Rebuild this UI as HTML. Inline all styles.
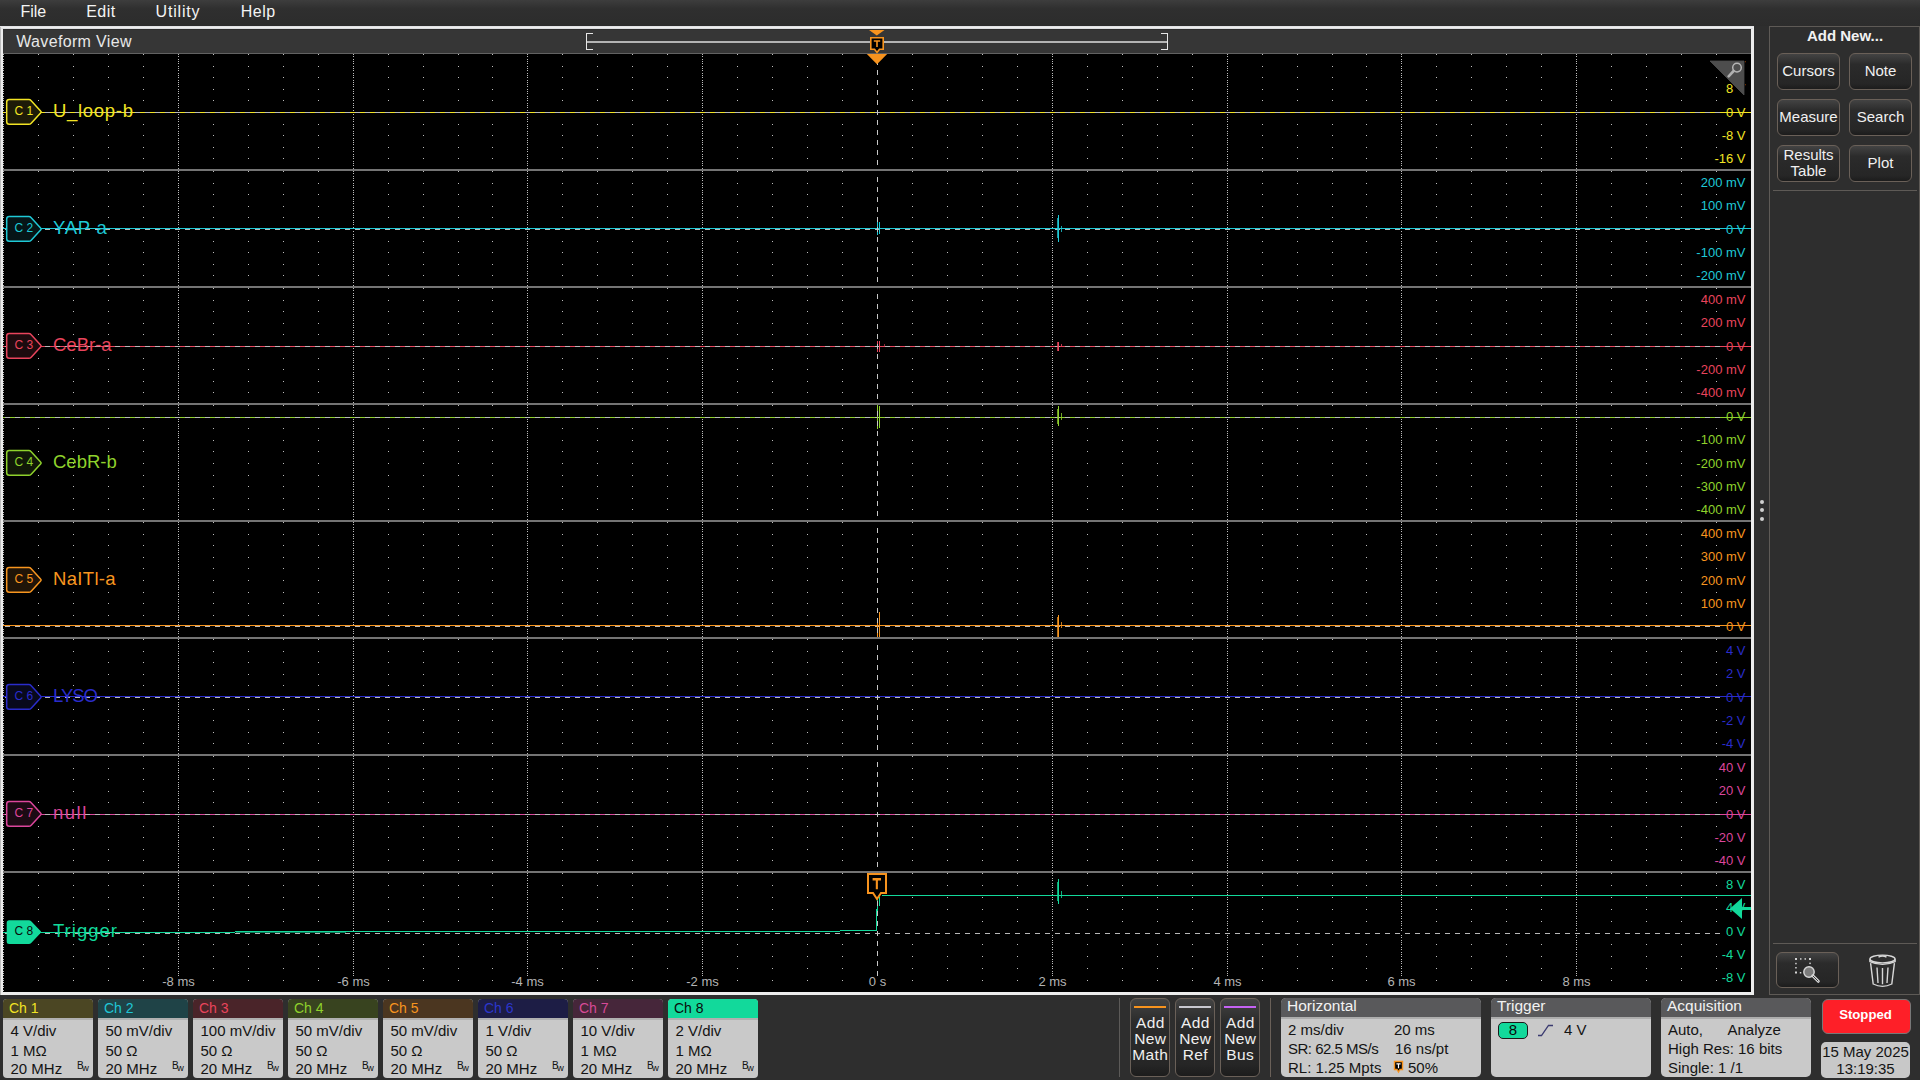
<!DOCTYPE html>
<html><head><meta charset="utf-8"><title>Waveform View</title>
<style>
html,body{margin:0;padding:0;}
body{width:1920px;height:1080px;overflow:hidden;position:relative;background:#2e2e2e;font-family:"Liberation Sans",sans-serif;}
.t{position:absolute;white-space:nowrap;line-height:1;}
.badge{position:absolute;top:999px;width:90px;height:79px;background:#c9c9c9;border-radius:4px;overflow:hidden;}
.badge .bh{position:absolute;left:0;top:0;width:90px;height:19px;border-bottom:2px solid #b0b0b0;}
.panel{position:absolute;top:998px;height:79px;background:#c9c9c9;border-radius:5px;overflow:hidden;}
.panel .ph{position:absolute;left:0;top:0;right:0;height:19px;background:#59595b;border-bottom:2px solid #adadad;}
.btn{position:absolute;box-sizing:border-box;border:1px solid #6a6058;border-radius:6px;background:linear-gradient(#434343,#2b2b2b 30%,#262626 85%,#1c1c1c);}
</style></head><body>
<div style="position:absolute;left:0;top:0;width:1920px;height:26px;background:linear-gradient(#3d3d3d,#2f2f2f 9px,#2c2c2c)"></div>
<div class="t" style="left:20.4px;top:4.36px;font-size:16px;color:#f4f4f4;font-weight:normal;letter-spacing:0px">File</div><div class="t" style="left:86.2px;top:4.36px;font-size:16px;color:#f4f4f4;font-weight:normal;letter-spacing:0.5px">Edit</div><div class="t" style="left:155.6px;top:4.36px;font-size:16px;color:#f4f4f4;font-weight:normal;letter-spacing:0.8px">Utility</div><div class="t" style="left:240.8px;top:4.36px;font-size:16px;color:#f4f4f4;font-weight:normal;letter-spacing:0.5px">Help</div>
<div style="position:absolute;left:0;top:26px;width:1754px;height:969px;background:#ededed"></div>
<div style="position:absolute;left:0;top:26px;width:1px;height:969px;background:#bcbcbc"></div>
<div style="position:absolute;left:3px;top:29px;width:1748px;height:963px;background:#000"></div>
<div style="position:absolute;left:3px;top:29px;width:1748px;height:24px;background:#363636"></div>
<div style="position:absolute;left:3px;top:29px;width:1748px;height:1px;background:#2c2c2c"></div>
<div style="position:absolute;left:0;top:26px;width:1754px;height:1px;background:#e2e3e6"></div>
<div style="position:absolute;left:1px;top:28px;width:1752px;height:1px;background:#dcdde0"></div>
<div style="position:absolute;left:3px;top:53px;width:1748px;height:1px;background:#626262"></div>
<div class="t" style="left:16.2px;top:33.86px;font-size:16px;color:#e8e8e8;font-weight:normal;letter-spacing:0.35px">Waveform View</div>
<svg style="position:absolute;left:0;top:0" width="1920" height="1080" shape-rendering="crispEdges">
<rect x="586" y="33" width="1" height="17" fill="#e6e6e6"/><rect x="586" y="33" width="7" height="1" fill="#e6e6e6"/><rect x="586" y="49" width="7" height="1" fill="#e6e6e6"/>
<rect x="1167" y="33" width="1" height="17" fill="#e6e6e6"/><rect x="1161" y="33" width="7" height="1" fill="#e6e6e6"/><rect x="1161" y="49" width="7" height="1" fill="#e6e6e6"/>
<rect x="587" y="41" width="580" height="2" fill="#b4b4b4"/>
<path d="M3 54h1v1h-1zM3 56h1v1h-1zM3 59h1v1h-1zM3 61h1v1h-1zM3 63h1v1h-1zM3 66h1v1h-1zM3 68h1v1h-1zM3 70h1v1h-1zM3 73h1v1h-1zM3 75h1v1h-1zM3 77h1v1h-1zM3 80h1v1h-1zM3 82h1v1h-1zM3 84h1v1h-1zM3 86h1v1h-1zM3 89h1v1h-1zM3 91h1v1h-1zM3 93h1v1h-1zM3 96h1v1h-1zM3 98h1v1h-1zM3 100h1v1h-1zM3 103h1v1h-1zM3 105h1v1h-1zM3 107h1v1h-1zM3 110h1v1h-1zM3 112h1v1h-1zM3 114h1v1h-1zM3 117h1v1h-1zM3 119h1v1h-1zM3 121h1v1h-1zM3 124h1v1h-1zM3 126h1v1h-1zM3 128h1v1h-1zM3 131h1v1h-1zM3 133h1v1h-1zM3 135h1v1h-1zM3 138h1v1h-1zM3 140h1v1h-1zM3 142h1v1h-1zM3 144h1v1h-1zM3 147h1v1h-1zM3 149h1v1h-1zM3 151h1v1h-1zM3 154h1v1h-1zM3 156h1v1h-1zM3 158h1v1h-1zM3 161h1v1h-1zM3 163h1v1h-1zM3 165h1v1h-1zM3 168h1v1h-1zM3 171h1v1h-1zM3 173h1v1h-1zM3 176h1v1h-1zM3 178h1v1h-1zM3 180h1v1h-1zM3 183h1v1h-1zM3 185h1v1h-1zM3 187h1v1h-1zM3 190h1v1h-1zM3 192h1v1h-1zM3 194h1v1h-1zM3 197h1v1h-1zM3 199h1v1h-1zM3 201h1v1h-1zM3 203h1v1h-1zM3 206h1v1h-1zM3 208h1v1h-1zM3 210h1v1h-1zM3 213h1v1h-1zM3 215h1v1h-1zM3 217h1v1h-1zM3 220h1v1h-1zM3 222h1v1h-1zM3 224h1v1h-1zM3 227h1v1h-1zM3 229h1v1h-1zM3 231h1v1h-1zM3 234h1v1h-1zM3 236h1v1h-1zM3 238h1v1h-1zM3 241h1v1h-1zM3 243h1v1h-1zM3 245h1v1h-1zM3 248h1v1h-1zM3 250h1v1h-1zM3 252h1v1h-1zM3 255h1v1h-1zM3 257h1v1h-1zM3 259h1v1h-1zM3 261h1v1h-1zM3 264h1v1h-1zM3 266h1v1h-1zM3 268h1v1h-1zM3 271h1v1h-1zM3 273h1v1h-1zM3 275h1v1h-1zM3 278h1v1h-1zM3 280h1v1h-1zM3 282h1v1h-1zM3 285h1v1h-1zM3 288h1v1h-1zM3 290h1v1h-1zM3 293h1v1h-1zM3 295h1v1h-1zM3 297h1v1h-1zM3 300h1v1h-1zM3 302h1v1h-1zM3 304h1v1h-1zM3 307h1v1h-1zM3 309h1v1h-1zM3 311h1v1h-1zM3 314h1v1h-1zM3 316h1v1h-1zM3 318h1v1h-1zM3 320h1v1h-1zM3 323h1v1h-1zM3 325h1v1h-1zM3 327h1v1h-1zM3 330h1v1h-1zM3 332h1v1h-1zM3 334h1v1h-1zM3 337h1v1h-1zM3 339h1v1h-1zM3 341h1v1h-1zM3 344h1v1h-1zM3 346h1v1h-1zM3 348h1v1h-1zM3 351h1v1h-1zM3 353h1v1h-1zM3 355h1v1h-1zM3 358h1v1h-1zM3 360h1v1h-1zM3 362h1v1h-1zM3 365h1v1h-1zM3 367h1v1h-1zM3 369h1v1h-1zM3 372h1v1h-1zM3 374h1v1h-1zM3 376h1v1h-1zM3 378h1v1h-1zM3 381h1v1h-1zM3 383h1v1h-1zM3 385h1v1h-1zM3 388h1v1h-1zM3 390h1v1h-1zM3 392h1v1h-1zM3 395h1v1h-1zM3 397h1v1h-1zM3 399h1v1h-1zM3 402h1v1h-1zM3 405h1v1h-1zM3 407h1v1h-1zM3 410h1v1h-1zM3 412h1v1h-1zM3 414h1v1h-1zM3 417h1v1h-1zM3 419h1v1h-1zM3 421h1v1h-1zM3 424h1v1h-1zM3 426h1v1h-1zM3 428h1v1h-1zM3 431h1v1h-1zM3 433h1v1h-1zM3 435h1v1h-1zM3 437h1v1h-1zM3 440h1v1h-1zM3 442h1v1h-1zM3 444h1v1h-1zM3 447h1v1h-1zM3 449h1v1h-1zM3 451h1v1h-1zM3 454h1v1h-1zM3 456h1v1h-1zM3 458h1v1h-1zM3 461h1v1h-1zM3 463h1v1h-1zM3 465h1v1h-1zM3 468h1v1h-1zM3 470h1v1h-1zM3 472h1v1h-1zM3 475h1v1h-1zM3 477h1v1h-1zM3 479h1v1h-1zM3 482h1v1h-1zM3 484h1v1h-1zM3 486h1v1h-1zM3 489h1v1h-1zM3 491h1v1h-1zM3 493h1v1h-1zM3 495h1v1h-1zM3 498h1v1h-1zM3 500h1v1h-1zM3 502h1v1h-1zM3 505h1v1h-1zM3 507h1v1h-1zM3 509h1v1h-1zM3 512h1v1h-1zM3 514h1v1h-1zM3 516h1v1h-1zM3 519h1v1h-1zM3 522h1v1h-1zM3 524h1v1h-1zM3 527h1v1h-1zM3 529h1v1h-1zM3 531h1v1h-1zM3 534h1v1h-1zM3 536h1v1h-1zM3 538h1v1h-1zM3 541h1v1h-1zM3 543h1v1h-1zM3 545h1v1h-1zM3 548h1v1h-1zM3 550h1v1h-1zM3 552h1v1h-1zM3 554h1v1h-1zM3 557h1v1h-1zM3 559h1v1h-1zM3 561h1v1h-1zM3 564h1v1h-1zM3 566h1v1h-1zM3 568h1v1h-1zM3 571h1v1h-1zM3 573h1v1h-1zM3 575h1v1h-1zM3 578h1v1h-1zM3 580h1v1h-1zM3 582h1v1h-1zM3 585h1v1h-1zM3 587h1v1h-1zM3 589h1v1h-1zM3 592h1v1h-1zM3 594h1v1h-1zM3 596h1v1h-1zM3 599h1v1h-1zM3 601h1v1h-1zM3 603h1v1h-1zM3 606h1v1h-1zM3 608h1v1h-1zM3 610h1v1h-1zM3 612h1v1h-1zM3 615h1v1h-1zM3 617h1v1h-1zM3 619h1v1h-1zM3 622h1v1h-1zM3 624h1v1h-1zM3 626h1v1h-1zM3 629h1v1h-1zM3 631h1v1h-1zM3 633h1v1h-1zM3 636h1v1h-1zM3 639h1v1h-1zM3 641h1v1h-1zM3 644h1v1h-1zM3 646h1v1h-1zM3 648h1v1h-1zM3 651h1v1h-1zM3 653h1v1h-1zM3 655h1v1h-1zM3 658h1v1h-1zM3 660h1v1h-1zM3 662h1v1h-1zM3 665h1v1h-1zM3 667h1v1h-1zM3 669h1v1h-1zM3 671h1v1h-1zM3 674h1v1h-1zM3 676h1v1h-1zM3 678h1v1h-1zM3 681h1v1h-1zM3 683h1v1h-1zM3 685h1v1h-1zM3 688h1v1h-1zM3 690h1v1h-1zM3 692h1v1h-1zM3 695h1v1h-1zM3 697h1v1h-1zM3 699h1v1h-1zM3 702h1v1h-1zM3 704h1v1h-1zM3 706h1v1h-1zM3 709h1v1h-1zM3 711h1v1h-1zM3 713h1v1h-1zM3 716h1v1h-1zM3 718h1v1h-1zM3 720h1v1h-1zM3 723h1v1h-1zM3 725h1v1h-1zM3 727h1v1h-1zM3 729h1v1h-1zM3 732h1v1h-1zM3 734h1v1h-1zM3 736h1v1h-1zM3 739h1v1h-1zM3 741h1v1h-1zM3 743h1v1h-1zM3 746h1v1h-1zM3 748h1v1h-1zM3 750h1v1h-1zM3 753h1v1h-1zM3 756h1v1h-1zM3 758h1v1h-1zM3 761h1v1h-1zM3 763h1v1h-1zM3 765h1v1h-1zM3 768h1v1h-1zM3 770h1v1h-1zM3 772h1v1h-1zM3 775h1v1h-1zM3 777h1v1h-1zM3 779h1v1h-1zM3 782h1v1h-1zM3 784h1v1h-1zM3 786h1v1h-1zM3 788h1v1h-1zM3 791h1v1h-1zM3 793h1v1h-1zM3 795h1v1h-1zM3 798h1v1h-1zM3 800h1v1h-1zM3 802h1v1h-1zM3 805h1v1h-1zM3 807h1v1h-1zM3 809h1v1h-1zM3 812h1v1h-1zM3 814h1v1h-1zM3 816h1v1h-1zM3 819h1v1h-1zM3 821h1v1h-1zM3 823h1v1h-1zM3 826h1v1h-1zM3 828h1v1h-1zM3 830h1v1h-1zM3 833h1v1h-1zM3 835h1v1h-1zM3 837h1v1h-1zM3 840h1v1h-1zM3 842h1v1h-1zM3 844h1v1h-1zM3 846h1v1h-1zM3 849h1v1h-1zM3 851h1v1h-1zM3 853h1v1h-1zM3 856h1v1h-1zM3 858h1v1h-1zM3 860h1v1h-1zM3 863h1v1h-1zM3 865h1v1h-1zM3 867h1v1h-1zM3 870h1v1h-1zM3 873h1v1h-1zM3 875h1v1h-1zM3 878h1v1h-1zM3 880h1v1h-1zM3 883h1v1h-1zM3 885h1v1h-1zM3 887h1v1h-1zM3 890h1v1h-1zM3 892h1v1h-1zM3 894h1v1h-1zM3 897h1v1h-1zM3 899h1v1h-1zM3 902h1v1h-1zM3 904h1v1h-1zM3 906h1v1h-1zM3 909h1v1h-1zM3 911h1v1h-1zM3 913h1v1h-1zM3 916h1v1h-1zM3 918h1v1h-1zM3 921h1v1h-1zM3 923h1v1h-1zM3 925h1v1h-1zM3 928h1v1h-1zM3 930h1v1h-1zM3 933h1v1h-1zM3 935h1v1h-1zM3 937h1v1h-1zM3 940h1v1h-1zM3 942h1v1h-1zM3 944h1v1h-1zM3 947h1v1h-1zM3 949h1v1h-1zM3 952h1v1h-1zM3 954h1v1h-1zM3 956h1v1h-1zM3 959h1v1h-1zM3 961h1v1h-1zM3 963h1v1h-1zM3 966h1v1h-1zM3 968h1v1h-1zM3 971h1v1h-1zM3 973h1v1h-1zM3 975h1v1h-1zM3 978h1v1h-1zM3 980h1v1h-1zM3 982h1v1h-1zM3 985h1v1h-1zM3 987h1v1h-1zM3 990h1v1h-1zM38 54h1v1h-1zM38 66h1v1h-1zM38 77h1v1h-1zM38 89h1v1h-1zM38 100h1v1h-1zM38 112h1v1h-1zM38 124h1v1h-1zM38 135h1v1h-1zM38 147h1v1h-1zM38 158h1v1h-1zM38 171h1v1h-1zM38 183h1v1h-1zM38 194h1v1h-1zM38 206h1v1h-1zM38 217h1v1h-1zM38 229h1v1h-1zM38 241h1v1h-1zM38 252h1v1h-1zM38 264h1v1h-1zM38 275h1v1h-1zM38 288h1v1h-1zM38 300h1v1h-1zM38 311h1v1h-1zM38 323h1v1h-1zM38 334h1v1h-1zM38 346h1v1h-1zM38 358h1v1h-1zM38 369h1v1h-1zM38 381h1v1h-1zM38 392h1v1h-1zM38 405h1v1h-1zM38 417h1v1h-1zM38 428h1v1h-1zM38 440h1v1h-1zM38 451h1v1h-1zM38 463h1v1h-1zM38 475h1v1h-1zM38 486h1v1h-1zM38 498h1v1h-1zM38 509h1v1h-1zM38 522h1v1h-1zM38 534h1v1h-1zM38 545h1v1h-1zM38 557h1v1h-1zM38 568h1v1h-1zM38 580h1v1h-1zM38 592h1v1h-1zM38 603h1v1h-1zM38 615h1v1h-1zM38 626h1v1h-1zM38 639h1v1h-1zM38 651h1v1h-1zM38 662h1v1h-1zM38 674h1v1h-1zM38 685h1v1h-1zM38 697h1v1h-1zM38 709h1v1h-1zM38 720h1v1h-1zM38 732h1v1h-1zM38 743h1v1h-1zM38 756h1v1h-1zM38 768h1v1h-1zM38 779h1v1h-1zM38 791h1v1h-1zM38 802h1v1h-1zM38 814h1v1h-1zM38 826h1v1h-1zM38 837h1v1h-1zM38 849h1v1h-1zM38 860h1v1h-1zM38 873h1v1h-1zM38 885h1v1h-1zM38 897h1v1h-1zM38 909h1v1h-1zM38 921h1v1h-1zM38 933h1v1h-1zM38 944h1v1h-1zM38 956h1v1h-1zM38 968h1v1h-1zM38 980h1v1h-1zM73 54h1v1h-1zM73 66h1v1h-1zM73 77h1v1h-1zM73 89h1v1h-1zM73 100h1v1h-1zM73 112h1v1h-1zM73 124h1v1h-1zM73 135h1v1h-1zM73 147h1v1h-1zM73 158h1v1h-1zM73 171h1v1h-1zM73 183h1v1h-1zM73 194h1v1h-1zM73 206h1v1h-1zM73 217h1v1h-1zM73 229h1v1h-1zM73 241h1v1h-1zM73 252h1v1h-1zM73 264h1v1h-1zM73 275h1v1h-1zM73 288h1v1h-1zM73 300h1v1h-1zM73 311h1v1h-1zM73 323h1v1h-1zM73 334h1v1h-1zM73 346h1v1h-1zM73 358h1v1h-1zM73 369h1v1h-1zM73 381h1v1h-1zM73 392h1v1h-1zM73 405h1v1h-1zM73 417h1v1h-1zM73 428h1v1h-1zM73 440h1v1h-1zM73 451h1v1h-1zM73 463h1v1h-1zM73 475h1v1h-1zM73 486h1v1h-1zM73 498h1v1h-1zM73 509h1v1h-1zM73 522h1v1h-1zM73 534h1v1h-1zM73 545h1v1h-1zM73 557h1v1h-1zM73 568h1v1h-1zM73 580h1v1h-1zM73 592h1v1h-1zM73 603h1v1h-1zM73 615h1v1h-1zM73 626h1v1h-1zM73 639h1v1h-1zM73 651h1v1h-1zM73 662h1v1h-1zM73 674h1v1h-1zM73 685h1v1h-1zM73 697h1v1h-1zM73 709h1v1h-1zM73 720h1v1h-1zM73 732h1v1h-1zM73 743h1v1h-1zM73 756h1v1h-1zM73 768h1v1h-1zM73 779h1v1h-1zM73 791h1v1h-1zM73 802h1v1h-1zM73 814h1v1h-1zM73 826h1v1h-1zM73 837h1v1h-1zM73 849h1v1h-1zM73 860h1v1h-1zM73 873h1v1h-1zM73 885h1v1h-1zM73 897h1v1h-1zM73 909h1v1h-1zM73 921h1v1h-1zM73 933h1v1h-1zM73 944h1v1h-1zM73 956h1v1h-1zM73 968h1v1h-1zM73 980h1v1h-1zM108 54h1v1h-1zM108 66h1v1h-1zM108 77h1v1h-1zM108 89h1v1h-1zM108 100h1v1h-1zM108 112h1v1h-1zM108 124h1v1h-1zM108 135h1v1h-1zM108 147h1v1h-1zM108 158h1v1h-1zM108 171h1v1h-1zM108 183h1v1h-1zM108 194h1v1h-1zM108 206h1v1h-1zM108 217h1v1h-1zM108 229h1v1h-1zM108 241h1v1h-1zM108 252h1v1h-1zM108 264h1v1h-1zM108 275h1v1h-1zM108 288h1v1h-1zM108 300h1v1h-1zM108 311h1v1h-1zM108 323h1v1h-1zM108 334h1v1h-1zM108 346h1v1h-1zM108 358h1v1h-1zM108 369h1v1h-1zM108 381h1v1h-1zM108 392h1v1h-1zM108 405h1v1h-1zM108 417h1v1h-1zM108 428h1v1h-1zM108 440h1v1h-1zM108 451h1v1h-1zM108 463h1v1h-1zM108 475h1v1h-1zM108 486h1v1h-1zM108 498h1v1h-1zM108 509h1v1h-1zM108 522h1v1h-1zM108 534h1v1h-1zM108 545h1v1h-1zM108 557h1v1h-1zM108 568h1v1h-1zM108 580h1v1h-1zM108 592h1v1h-1zM108 603h1v1h-1zM108 615h1v1h-1zM108 626h1v1h-1zM108 639h1v1h-1zM108 651h1v1h-1zM108 662h1v1h-1zM108 674h1v1h-1zM108 685h1v1h-1zM108 697h1v1h-1zM108 709h1v1h-1zM108 720h1v1h-1zM108 732h1v1h-1zM108 743h1v1h-1zM108 756h1v1h-1zM108 768h1v1h-1zM108 779h1v1h-1zM108 791h1v1h-1zM108 802h1v1h-1zM108 814h1v1h-1zM108 826h1v1h-1zM108 837h1v1h-1zM108 849h1v1h-1zM108 860h1v1h-1zM108 873h1v1h-1zM108 885h1v1h-1zM108 897h1v1h-1zM108 909h1v1h-1zM108 921h1v1h-1zM108 933h1v1h-1zM108 944h1v1h-1zM108 956h1v1h-1zM108 968h1v1h-1zM108 980h1v1h-1zM143 54h1v1h-1zM143 66h1v1h-1zM143 77h1v1h-1zM143 89h1v1h-1zM143 100h1v1h-1zM143 112h1v1h-1zM143 124h1v1h-1zM143 135h1v1h-1zM143 147h1v1h-1zM143 158h1v1h-1zM143 171h1v1h-1zM143 183h1v1h-1zM143 194h1v1h-1zM143 206h1v1h-1zM143 217h1v1h-1zM143 229h1v1h-1zM143 241h1v1h-1zM143 252h1v1h-1zM143 264h1v1h-1zM143 275h1v1h-1zM143 288h1v1h-1zM143 300h1v1h-1zM143 311h1v1h-1zM143 323h1v1h-1zM143 334h1v1h-1zM143 346h1v1h-1zM143 358h1v1h-1zM143 369h1v1h-1zM143 381h1v1h-1zM143 392h1v1h-1zM143 405h1v1h-1zM143 417h1v1h-1zM143 428h1v1h-1zM143 440h1v1h-1zM143 451h1v1h-1zM143 463h1v1h-1zM143 475h1v1h-1zM143 486h1v1h-1zM143 498h1v1h-1zM143 509h1v1h-1zM143 522h1v1h-1zM143 534h1v1h-1zM143 545h1v1h-1zM143 557h1v1h-1zM143 568h1v1h-1zM143 580h1v1h-1zM143 592h1v1h-1zM143 603h1v1h-1zM143 615h1v1h-1zM143 626h1v1h-1zM143 639h1v1h-1zM143 651h1v1h-1zM143 662h1v1h-1zM143 674h1v1h-1zM143 685h1v1h-1zM143 697h1v1h-1zM143 709h1v1h-1zM143 720h1v1h-1zM143 732h1v1h-1zM143 743h1v1h-1zM143 756h1v1h-1zM143 768h1v1h-1zM143 779h1v1h-1zM143 791h1v1h-1zM143 802h1v1h-1zM143 814h1v1h-1zM143 826h1v1h-1zM143 837h1v1h-1zM143 849h1v1h-1zM143 860h1v1h-1zM143 873h1v1h-1zM143 885h1v1h-1zM143 897h1v1h-1zM143 909h1v1h-1zM143 921h1v1h-1zM143 933h1v1h-1zM143 944h1v1h-1zM143 956h1v1h-1zM143 968h1v1h-1zM143 980h1v1h-1zM178 54h1v1h-1zM178 56h1v1h-1zM178 59h1v1h-1zM178 61h1v1h-1zM178 63h1v1h-1zM178 66h1v1h-1zM178 68h1v1h-1zM178 70h1v1h-1zM178 73h1v1h-1zM178 75h1v1h-1zM178 77h1v1h-1zM178 80h1v1h-1zM178 82h1v1h-1zM178 84h1v1h-1zM178 86h1v1h-1zM178 89h1v1h-1zM178 91h1v1h-1zM178 93h1v1h-1zM178 96h1v1h-1zM178 98h1v1h-1zM178 100h1v1h-1zM178 103h1v1h-1zM178 105h1v1h-1zM178 107h1v1h-1zM178 110h1v1h-1zM178 112h1v1h-1zM178 114h1v1h-1zM178 117h1v1h-1zM178 119h1v1h-1zM178 121h1v1h-1zM178 124h1v1h-1zM178 126h1v1h-1zM178 128h1v1h-1zM178 131h1v1h-1zM178 133h1v1h-1zM178 135h1v1h-1zM178 138h1v1h-1zM178 140h1v1h-1zM178 142h1v1h-1zM178 144h1v1h-1zM178 147h1v1h-1zM178 149h1v1h-1zM178 151h1v1h-1zM178 154h1v1h-1zM178 156h1v1h-1zM178 158h1v1h-1zM178 161h1v1h-1zM178 163h1v1h-1zM178 165h1v1h-1zM178 168h1v1h-1zM178 171h1v1h-1zM178 173h1v1h-1zM178 176h1v1h-1zM178 178h1v1h-1zM178 180h1v1h-1zM178 183h1v1h-1zM178 185h1v1h-1zM178 187h1v1h-1zM178 190h1v1h-1zM178 192h1v1h-1zM178 194h1v1h-1zM178 197h1v1h-1zM178 199h1v1h-1zM178 201h1v1h-1zM178 203h1v1h-1zM178 206h1v1h-1zM178 208h1v1h-1zM178 210h1v1h-1zM178 213h1v1h-1zM178 215h1v1h-1zM178 217h1v1h-1zM178 220h1v1h-1zM178 222h1v1h-1zM178 224h1v1h-1zM178 227h1v1h-1zM178 229h1v1h-1zM178 231h1v1h-1zM178 234h1v1h-1zM178 236h1v1h-1zM178 238h1v1h-1zM178 241h1v1h-1zM178 243h1v1h-1zM178 245h1v1h-1zM178 248h1v1h-1zM178 250h1v1h-1zM178 252h1v1h-1zM178 255h1v1h-1zM178 257h1v1h-1zM178 259h1v1h-1zM178 261h1v1h-1zM178 264h1v1h-1zM178 266h1v1h-1zM178 268h1v1h-1zM178 271h1v1h-1zM178 273h1v1h-1zM178 275h1v1h-1zM178 278h1v1h-1zM178 280h1v1h-1zM178 282h1v1h-1zM178 285h1v1h-1zM178 288h1v1h-1zM178 290h1v1h-1zM178 293h1v1h-1zM178 295h1v1h-1zM178 297h1v1h-1zM178 300h1v1h-1zM178 302h1v1h-1zM178 304h1v1h-1zM178 307h1v1h-1zM178 309h1v1h-1zM178 311h1v1h-1zM178 314h1v1h-1zM178 316h1v1h-1zM178 318h1v1h-1zM178 320h1v1h-1zM178 323h1v1h-1zM178 325h1v1h-1zM178 327h1v1h-1zM178 330h1v1h-1zM178 332h1v1h-1zM178 334h1v1h-1zM178 337h1v1h-1zM178 339h1v1h-1zM178 341h1v1h-1zM178 344h1v1h-1zM178 346h1v1h-1zM178 348h1v1h-1zM178 351h1v1h-1zM178 353h1v1h-1zM178 355h1v1h-1zM178 358h1v1h-1zM178 360h1v1h-1zM178 362h1v1h-1zM178 365h1v1h-1zM178 367h1v1h-1zM178 369h1v1h-1zM178 372h1v1h-1zM178 374h1v1h-1zM178 376h1v1h-1zM178 378h1v1h-1zM178 381h1v1h-1zM178 383h1v1h-1zM178 385h1v1h-1zM178 388h1v1h-1zM178 390h1v1h-1zM178 392h1v1h-1zM178 395h1v1h-1zM178 397h1v1h-1zM178 399h1v1h-1zM178 402h1v1h-1zM178 405h1v1h-1zM178 407h1v1h-1zM178 410h1v1h-1zM178 412h1v1h-1zM178 414h1v1h-1zM178 417h1v1h-1zM178 419h1v1h-1zM178 421h1v1h-1zM178 424h1v1h-1zM178 426h1v1h-1zM178 428h1v1h-1zM178 431h1v1h-1zM178 433h1v1h-1zM178 435h1v1h-1zM178 437h1v1h-1zM178 440h1v1h-1zM178 442h1v1h-1zM178 444h1v1h-1zM178 447h1v1h-1zM178 449h1v1h-1zM178 451h1v1h-1zM178 454h1v1h-1zM178 456h1v1h-1zM178 458h1v1h-1zM178 461h1v1h-1zM178 463h1v1h-1zM178 465h1v1h-1zM178 468h1v1h-1zM178 470h1v1h-1zM178 472h1v1h-1zM178 475h1v1h-1zM178 477h1v1h-1zM178 479h1v1h-1zM178 482h1v1h-1zM178 484h1v1h-1zM178 486h1v1h-1zM178 489h1v1h-1zM178 491h1v1h-1zM178 493h1v1h-1zM178 495h1v1h-1zM178 498h1v1h-1zM178 500h1v1h-1zM178 502h1v1h-1zM178 505h1v1h-1zM178 507h1v1h-1zM178 509h1v1h-1zM178 512h1v1h-1zM178 514h1v1h-1zM178 516h1v1h-1zM178 519h1v1h-1zM178 522h1v1h-1zM178 524h1v1h-1zM178 527h1v1h-1zM178 529h1v1h-1zM178 531h1v1h-1zM178 534h1v1h-1zM178 536h1v1h-1zM178 538h1v1h-1zM178 541h1v1h-1zM178 543h1v1h-1zM178 545h1v1h-1zM178 548h1v1h-1zM178 550h1v1h-1zM178 552h1v1h-1zM178 554h1v1h-1zM178 557h1v1h-1zM178 559h1v1h-1zM178 561h1v1h-1zM178 564h1v1h-1zM178 566h1v1h-1zM178 568h1v1h-1zM178 571h1v1h-1zM178 573h1v1h-1zM178 575h1v1h-1zM178 578h1v1h-1zM178 580h1v1h-1zM178 582h1v1h-1zM178 585h1v1h-1zM178 587h1v1h-1zM178 589h1v1h-1zM178 592h1v1h-1zM178 594h1v1h-1zM178 596h1v1h-1zM178 599h1v1h-1zM178 601h1v1h-1zM178 603h1v1h-1zM178 606h1v1h-1zM178 608h1v1h-1zM178 610h1v1h-1zM178 612h1v1h-1zM178 615h1v1h-1zM178 617h1v1h-1zM178 619h1v1h-1zM178 622h1v1h-1zM178 624h1v1h-1zM178 626h1v1h-1zM178 629h1v1h-1zM178 631h1v1h-1zM178 633h1v1h-1zM178 636h1v1h-1zM178 639h1v1h-1zM178 641h1v1h-1zM178 644h1v1h-1zM178 646h1v1h-1zM178 648h1v1h-1zM178 651h1v1h-1zM178 653h1v1h-1zM178 655h1v1h-1zM178 658h1v1h-1zM178 660h1v1h-1zM178 662h1v1h-1zM178 665h1v1h-1zM178 667h1v1h-1zM178 669h1v1h-1zM178 671h1v1h-1zM178 674h1v1h-1zM178 676h1v1h-1zM178 678h1v1h-1zM178 681h1v1h-1zM178 683h1v1h-1zM178 685h1v1h-1zM178 688h1v1h-1zM178 690h1v1h-1zM178 692h1v1h-1zM178 695h1v1h-1zM178 697h1v1h-1zM178 699h1v1h-1zM178 702h1v1h-1zM178 704h1v1h-1zM178 706h1v1h-1zM178 709h1v1h-1zM178 711h1v1h-1zM178 713h1v1h-1zM178 716h1v1h-1zM178 718h1v1h-1zM178 720h1v1h-1zM178 723h1v1h-1zM178 725h1v1h-1zM178 727h1v1h-1zM178 729h1v1h-1zM178 732h1v1h-1zM178 734h1v1h-1zM178 736h1v1h-1zM178 739h1v1h-1zM178 741h1v1h-1zM178 743h1v1h-1zM178 746h1v1h-1zM178 748h1v1h-1zM178 750h1v1h-1zM178 753h1v1h-1zM178 756h1v1h-1zM178 758h1v1h-1zM178 761h1v1h-1zM178 763h1v1h-1zM178 765h1v1h-1zM178 768h1v1h-1zM178 770h1v1h-1zM178 772h1v1h-1zM178 775h1v1h-1zM178 777h1v1h-1zM178 779h1v1h-1zM178 782h1v1h-1zM178 784h1v1h-1zM178 786h1v1h-1zM178 788h1v1h-1zM178 791h1v1h-1zM178 793h1v1h-1zM178 795h1v1h-1zM178 798h1v1h-1zM178 800h1v1h-1zM178 802h1v1h-1zM178 805h1v1h-1zM178 807h1v1h-1zM178 809h1v1h-1zM178 812h1v1h-1zM178 814h1v1h-1zM178 816h1v1h-1zM178 819h1v1h-1zM178 821h1v1h-1zM178 823h1v1h-1zM178 826h1v1h-1zM178 828h1v1h-1zM178 830h1v1h-1zM178 833h1v1h-1zM178 835h1v1h-1zM178 837h1v1h-1zM178 840h1v1h-1zM178 842h1v1h-1zM178 844h1v1h-1zM178 846h1v1h-1zM178 849h1v1h-1zM178 851h1v1h-1zM178 853h1v1h-1zM178 856h1v1h-1zM178 858h1v1h-1zM178 860h1v1h-1zM178 863h1v1h-1zM178 865h1v1h-1zM178 867h1v1h-1zM178 870h1v1h-1zM178 873h1v1h-1zM178 875h1v1h-1zM178 878h1v1h-1zM178 880h1v1h-1zM178 883h1v1h-1zM178 885h1v1h-1zM178 887h1v1h-1zM178 890h1v1h-1zM178 892h1v1h-1zM178 894h1v1h-1zM178 897h1v1h-1zM178 899h1v1h-1zM178 902h1v1h-1zM178 904h1v1h-1zM178 906h1v1h-1zM178 909h1v1h-1zM178 911h1v1h-1zM178 913h1v1h-1zM178 916h1v1h-1zM178 918h1v1h-1zM178 921h1v1h-1zM178 923h1v1h-1zM178 925h1v1h-1zM178 928h1v1h-1zM178 930h1v1h-1zM178 933h1v1h-1zM178 935h1v1h-1zM178 937h1v1h-1zM178 940h1v1h-1zM178 942h1v1h-1zM178 944h1v1h-1zM178 947h1v1h-1zM178 949h1v1h-1zM178 952h1v1h-1zM178 954h1v1h-1zM178 956h1v1h-1zM178 959h1v1h-1zM178 961h1v1h-1zM178 963h1v1h-1zM178 966h1v1h-1zM178 968h1v1h-1zM178 971h1v1h-1zM178 973h1v1h-1zM178 975h1v1h-1zM178 978h1v1h-1zM178 980h1v1h-1zM178 982h1v1h-1zM178 985h1v1h-1zM178 987h1v1h-1zM178 990h1v1h-1zM213 54h1v1h-1zM213 66h1v1h-1zM213 77h1v1h-1zM213 89h1v1h-1zM213 100h1v1h-1zM213 112h1v1h-1zM213 124h1v1h-1zM213 135h1v1h-1zM213 147h1v1h-1zM213 158h1v1h-1zM213 171h1v1h-1zM213 183h1v1h-1zM213 194h1v1h-1zM213 206h1v1h-1zM213 217h1v1h-1zM213 229h1v1h-1zM213 241h1v1h-1zM213 252h1v1h-1zM213 264h1v1h-1zM213 275h1v1h-1zM213 288h1v1h-1zM213 300h1v1h-1zM213 311h1v1h-1zM213 323h1v1h-1zM213 334h1v1h-1zM213 346h1v1h-1zM213 358h1v1h-1zM213 369h1v1h-1zM213 381h1v1h-1zM213 392h1v1h-1zM213 405h1v1h-1zM213 417h1v1h-1zM213 428h1v1h-1zM213 440h1v1h-1zM213 451h1v1h-1zM213 463h1v1h-1zM213 475h1v1h-1zM213 486h1v1h-1zM213 498h1v1h-1zM213 509h1v1h-1zM213 522h1v1h-1zM213 534h1v1h-1zM213 545h1v1h-1zM213 557h1v1h-1zM213 568h1v1h-1zM213 580h1v1h-1zM213 592h1v1h-1zM213 603h1v1h-1zM213 615h1v1h-1zM213 626h1v1h-1zM213 639h1v1h-1zM213 651h1v1h-1zM213 662h1v1h-1zM213 674h1v1h-1zM213 685h1v1h-1zM213 697h1v1h-1zM213 709h1v1h-1zM213 720h1v1h-1zM213 732h1v1h-1zM213 743h1v1h-1zM213 756h1v1h-1zM213 768h1v1h-1zM213 779h1v1h-1zM213 791h1v1h-1zM213 802h1v1h-1zM213 814h1v1h-1zM213 826h1v1h-1zM213 837h1v1h-1zM213 849h1v1h-1zM213 860h1v1h-1zM213 873h1v1h-1zM213 885h1v1h-1zM213 897h1v1h-1zM213 909h1v1h-1zM213 921h1v1h-1zM213 933h1v1h-1zM213 944h1v1h-1zM213 956h1v1h-1zM213 968h1v1h-1zM213 980h1v1h-1zM248 54h1v1h-1zM248 66h1v1h-1zM248 77h1v1h-1zM248 89h1v1h-1zM248 100h1v1h-1zM248 112h1v1h-1zM248 124h1v1h-1zM248 135h1v1h-1zM248 147h1v1h-1zM248 158h1v1h-1zM248 171h1v1h-1zM248 183h1v1h-1zM248 194h1v1h-1zM248 206h1v1h-1zM248 217h1v1h-1zM248 229h1v1h-1zM248 241h1v1h-1zM248 252h1v1h-1zM248 264h1v1h-1zM248 275h1v1h-1zM248 288h1v1h-1zM248 300h1v1h-1zM248 311h1v1h-1zM248 323h1v1h-1zM248 334h1v1h-1zM248 346h1v1h-1zM248 358h1v1h-1zM248 369h1v1h-1zM248 381h1v1h-1zM248 392h1v1h-1zM248 405h1v1h-1zM248 417h1v1h-1zM248 428h1v1h-1zM248 440h1v1h-1zM248 451h1v1h-1zM248 463h1v1h-1zM248 475h1v1h-1zM248 486h1v1h-1zM248 498h1v1h-1zM248 509h1v1h-1zM248 522h1v1h-1zM248 534h1v1h-1zM248 545h1v1h-1zM248 557h1v1h-1zM248 568h1v1h-1zM248 580h1v1h-1zM248 592h1v1h-1zM248 603h1v1h-1zM248 615h1v1h-1zM248 626h1v1h-1zM248 639h1v1h-1zM248 651h1v1h-1zM248 662h1v1h-1zM248 674h1v1h-1zM248 685h1v1h-1zM248 697h1v1h-1zM248 709h1v1h-1zM248 720h1v1h-1zM248 732h1v1h-1zM248 743h1v1h-1zM248 756h1v1h-1zM248 768h1v1h-1zM248 779h1v1h-1zM248 791h1v1h-1zM248 802h1v1h-1zM248 814h1v1h-1zM248 826h1v1h-1zM248 837h1v1h-1zM248 849h1v1h-1zM248 860h1v1h-1zM248 873h1v1h-1zM248 885h1v1h-1zM248 897h1v1h-1zM248 909h1v1h-1zM248 921h1v1h-1zM248 933h1v1h-1zM248 944h1v1h-1zM248 956h1v1h-1zM248 968h1v1h-1zM248 980h1v1h-1zM283 54h1v1h-1zM283 66h1v1h-1zM283 77h1v1h-1zM283 89h1v1h-1zM283 100h1v1h-1zM283 112h1v1h-1zM283 124h1v1h-1zM283 135h1v1h-1zM283 147h1v1h-1zM283 158h1v1h-1zM283 171h1v1h-1zM283 183h1v1h-1zM283 194h1v1h-1zM283 206h1v1h-1zM283 217h1v1h-1zM283 229h1v1h-1zM283 241h1v1h-1zM283 252h1v1h-1zM283 264h1v1h-1zM283 275h1v1h-1zM283 288h1v1h-1zM283 300h1v1h-1zM283 311h1v1h-1zM283 323h1v1h-1zM283 334h1v1h-1zM283 346h1v1h-1zM283 358h1v1h-1zM283 369h1v1h-1zM283 381h1v1h-1zM283 392h1v1h-1zM283 405h1v1h-1zM283 417h1v1h-1zM283 428h1v1h-1zM283 440h1v1h-1zM283 451h1v1h-1zM283 463h1v1h-1zM283 475h1v1h-1zM283 486h1v1h-1zM283 498h1v1h-1zM283 509h1v1h-1zM283 522h1v1h-1zM283 534h1v1h-1zM283 545h1v1h-1zM283 557h1v1h-1zM283 568h1v1h-1zM283 580h1v1h-1zM283 592h1v1h-1zM283 603h1v1h-1zM283 615h1v1h-1zM283 626h1v1h-1zM283 639h1v1h-1zM283 651h1v1h-1zM283 662h1v1h-1zM283 674h1v1h-1zM283 685h1v1h-1zM283 697h1v1h-1zM283 709h1v1h-1zM283 720h1v1h-1zM283 732h1v1h-1zM283 743h1v1h-1zM283 756h1v1h-1zM283 768h1v1h-1zM283 779h1v1h-1zM283 791h1v1h-1zM283 802h1v1h-1zM283 814h1v1h-1zM283 826h1v1h-1zM283 837h1v1h-1zM283 849h1v1h-1zM283 860h1v1h-1zM283 873h1v1h-1zM283 885h1v1h-1zM283 897h1v1h-1zM283 909h1v1h-1zM283 921h1v1h-1zM283 933h1v1h-1zM283 944h1v1h-1zM283 956h1v1h-1zM283 968h1v1h-1zM283 980h1v1h-1zM318 54h1v1h-1zM318 66h1v1h-1zM318 77h1v1h-1zM318 89h1v1h-1zM318 100h1v1h-1zM318 112h1v1h-1zM318 124h1v1h-1zM318 135h1v1h-1zM318 147h1v1h-1zM318 158h1v1h-1zM318 171h1v1h-1zM318 183h1v1h-1zM318 194h1v1h-1zM318 206h1v1h-1zM318 217h1v1h-1zM318 229h1v1h-1zM318 241h1v1h-1zM318 252h1v1h-1zM318 264h1v1h-1zM318 275h1v1h-1zM318 288h1v1h-1zM318 300h1v1h-1zM318 311h1v1h-1zM318 323h1v1h-1zM318 334h1v1h-1zM318 346h1v1h-1zM318 358h1v1h-1zM318 369h1v1h-1zM318 381h1v1h-1zM318 392h1v1h-1zM318 405h1v1h-1zM318 417h1v1h-1zM318 428h1v1h-1zM318 440h1v1h-1zM318 451h1v1h-1zM318 463h1v1h-1zM318 475h1v1h-1zM318 486h1v1h-1zM318 498h1v1h-1zM318 509h1v1h-1zM318 522h1v1h-1zM318 534h1v1h-1zM318 545h1v1h-1zM318 557h1v1h-1zM318 568h1v1h-1zM318 580h1v1h-1zM318 592h1v1h-1zM318 603h1v1h-1zM318 615h1v1h-1zM318 626h1v1h-1zM318 639h1v1h-1zM318 651h1v1h-1zM318 662h1v1h-1zM318 674h1v1h-1zM318 685h1v1h-1zM318 697h1v1h-1zM318 709h1v1h-1zM318 720h1v1h-1zM318 732h1v1h-1zM318 743h1v1h-1zM318 756h1v1h-1zM318 768h1v1h-1zM318 779h1v1h-1zM318 791h1v1h-1zM318 802h1v1h-1zM318 814h1v1h-1zM318 826h1v1h-1zM318 837h1v1h-1zM318 849h1v1h-1zM318 860h1v1h-1zM318 873h1v1h-1zM318 885h1v1h-1zM318 897h1v1h-1zM318 909h1v1h-1zM318 921h1v1h-1zM318 933h1v1h-1zM318 944h1v1h-1zM318 956h1v1h-1zM318 968h1v1h-1zM318 980h1v1h-1zM353 54h1v1h-1zM353 56h1v1h-1zM353 59h1v1h-1zM353 61h1v1h-1zM353 63h1v1h-1zM353 66h1v1h-1zM353 68h1v1h-1zM353 70h1v1h-1zM353 73h1v1h-1zM353 75h1v1h-1zM353 77h1v1h-1zM353 80h1v1h-1zM353 82h1v1h-1zM353 84h1v1h-1zM353 86h1v1h-1zM353 89h1v1h-1zM353 91h1v1h-1zM353 93h1v1h-1zM353 96h1v1h-1zM353 98h1v1h-1zM353 100h1v1h-1zM353 103h1v1h-1zM353 105h1v1h-1zM353 107h1v1h-1zM353 110h1v1h-1zM353 112h1v1h-1zM353 114h1v1h-1zM353 117h1v1h-1zM353 119h1v1h-1zM353 121h1v1h-1zM353 124h1v1h-1zM353 126h1v1h-1zM353 128h1v1h-1zM353 131h1v1h-1zM353 133h1v1h-1zM353 135h1v1h-1zM353 138h1v1h-1zM353 140h1v1h-1zM353 142h1v1h-1zM353 144h1v1h-1zM353 147h1v1h-1zM353 149h1v1h-1zM353 151h1v1h-1zM353 154h1v1h-1zM353 156h1v1h-1zM353 158h1v1h-1zM353 161h1v1h-1zM353 163h1v1h-1zM353 165h1v1h-1zM353 168h1v1h-1zM353 171h1v1h-1zM353 173h1v1h-1zM353 176h1v1h-1zM353 178h1v1h-1zM353 180h1v1h-1zM353 183h1v1h-1zM353 185h1v1h-1zM353 187h1v1h-1zM353 190h1v1h-1zM353 192h1v1h-1zM353 194h1v1h-1zM353 197h1v1h-1zM353 199h1v1h-1zM353 201h1v1h-1zM353 203h1v1h-1zM353 206h1v1h-1zM353 208h1v1h-1zM353 210h1v1h-1zM353 213h1v1h-1zM353 215h1v1h-1zM353 217h1v1h-1zM353 220h1v1h-1zM353 222h1v1h-1zM353 224h1v1h-1zM353 227h1v1h-1zM353 229h1v1h-1zM353 231h1v1h-1zM353 234h1v1h-1zM353 236h1v1h-1zM353 238h1v1h-1zM353 241h1v1h-1zM353 243h1v1h-1zM353 245h1v1h-1zM353 248h1v1h-1zM353 250h1v1h-1zM353 252h1v1h-1zM353 255h1v1h-1zM353 257h1v1h-1zM353 259h1v1h-1zM353 261h1v1h-1zM353 264h1v1h-1zM353 266h1v1h-1zM353 268h1v1h-1zM353 271h1v1h-1zM353 273h1v1h-1zM353 275h1v1h-1zM353 278h1v1h-1zM353 280h1v1h-1zM353 282h1v1h-1zM353 285h1v1h-1zM353 288h1v1h-1zM353 290h1v1h-1zM353 293h1v1h-1zM353 295h1v1h-1zM353 297h1v1h-1zM353 300h1v1h-1zM353 302h1v1h-1zM353 304h1v1h-1zM353 307h1v1h-1zM353 309h1v1h-1zM353 311h1v1h-1zM353 314h1v1h-1zM353 316h1v1h-1zM353 318h1v1h-1zM353 320h1v1h-1zM353 323h1v1h-1zM353 325h1v1h-1zM353 327h1v1h-1zM353 330h1v1h-1zM353 332h1v1h-1zM353 334h1v1h-1zM353 337h1v1h-1zM353 339h1v1h-1zM353 341h1v1h-1zM353 344h1v1h-1zM353 346h1v1h-1zM353 348h1v1h-1zM353 351h1v1h-1zM353 353h1v1h-1zM353 355h1v1h-1zM353 358h1v1h-1zM353 360h1v1h-1zM353 362h1v1h-1zM353 365h1v1h-1zM353 367h1v1h-1zM353 369h1v1h-1zM353 372h1v1h-1zM353 374h1v1h-1zM353 376h1v1h-1zM353 378h1v1h-1zM353 381h1v1h-1zM353 383h1v1h-1zM353 385h1v1h-1zM353 388h1v1h-1zM353 390h1v1h-1zM353 392h1v1h-1zM353 395h1v1h-1zM353 397h1v1h-1zM353 399h1v1h-1zM353 402h1v1h-1zM353 405h1v1h-1zM353 407h1v1h-1zM353 410h1v1h-1zM353 412h1v1h-1zM353 414h1v1h-1zM353 417h1v1h-1zM353 419h1v1h-1zM353 421h1v1h-1zM353 424h1v1h-1zM353 426h1v1h-1zM353 428h1v1h-1zM353 431h1v1h-1zM353 433h1v1h-1zM353 435h1v1h-1zM353 437h1v1h-1zM353 440h1v1h-1zM353 442h1v1h-1zM353 444h1v1h-1zM353 447h1v1h-1zM353 449h1v1h-1zM353 451h1v1h-1zM353 454h1v1h-1zM353 456h1v1h-1zM353 458h1v1h-1zM353 461h1v1h-1zM353 463h1v1h-1zM353 465h1v1h-1zM353 468h1v1h-1zM353 470h1v1h-1zM353 472h1v1h-1zM353 475h1v1h-1zM353 477h1v1h-1zM353 479h1v1h-1zM353 482h1v1h-1zM353 484h1v1h-1zM353 486h1v1h-1zM353 489h1v1h-1zM353 491h1v1h-1zM353 493h1v1h-1zM353 495h1v1h-1zM353 498h1v1h-1zM353 500h1v1h-1zM353 502h1v1h-1zM353 505h1v1h-1zM353 507h1v1h-1zM353 509h1v1h-1zM353 512h1v1h-1zM353 514h1v1h-1zM353 516h1v1h-1zM353 519h1v1h-1zM353 522h1v1h-1zM353 524h1v1h-1zM353 527h1v1h-1zM353 529h1v1h-1zM353 531h1v1h-1zM353 534h1v1h-1zM353 536h1v1h-1zM353 538h1v1h-1zM353 541h1v1h-1zM353 543h1v1h-1zM353 545h1v1h-1zM353 548h1v1h-1zM353 550h1v1h-1zM353 552h1v1h-1zM353 554h1v1h-1zM353 557h1v1h-1zM353 559h1v1h-1zM353 561h1v1h-1zM353 564h1v1h-1zM353 566h1v1h-1zM353 568h1v1h-1zM353 571h1v1h-1zM353 573h1v1h-1zM353 575h1v1h-1zM353 578h1v1h-1zM353 580h1v1h-1zM353 582h1v1h-1zM353 585h1v1h-1zM353 587h1v1h-1zM353 589h1v1h-1zM353 592h1v1h-1zM353 594h1v1h-1zM353 596h1v1h-1zM353 599h1v1h-1zM353 601h1v1h-1zM353 603h1v1h-1zM353 606h1v1h-1zM353 608h1v1h-1zM353 610h1v1h-1zM353 612h1v1h-1zM353 615h1v1h-1zM353 617h1v1h-1zM353 619h1v1h-1zM353 622h1v1h-1zM353 624h1v1h-1zM353 626h1v1h-1zM353 629h1v1h-1zM353 631h1v1h-1zM353 633h1v1h-1zM353 636h1v1h-1zM353 639h1v1h-1zM353 641h1v1h-1zM353 644h1v1h-1zM353 646h1v1h-1zM353 648h1v1h-1zM353 651h1v1h-1zM353 653h1v1h-1zM353 655h1v1h-1zM353 658h1v1h-1zM353 660h1v1h-1zM353 662h1v1h-1zM353 665h1v1h-1zM353 667h1v1h-1zM353 669h1v1h-1zM353 671h1v1h-1zM353 674h1v1h-1zM353 676h1v1h-1zM353 678h1v1h-1zM353 681h1v1h-1zM353 683h1v1h-1zM353 685h1v1h-1zM353 688h1v1h-1zM353 690h1v1h-1zM353 692h1v1h-1zM353 695h1v1h-1zM353 697h1v1h-1zM353 699h1v1h-1zM353 702h1v1h-1zM353 704h1v1h-1zM353 706h1v1h-1zM353 709h1v1h-1zM353 711h1v1h-1zM353 713h1v1h-1zM353 716h1v1h-1zM353 718h1v1h-1zM353 720h1v1h-1zM353 723h1v1h-1zM353 725h1v1h-1zM353 727h1v1h-1zM353 729h1v1h-1zM353 732h1v1h-1zM353 734h1v1h-1zM353 736h1v1h-1zM353 739h1v1h-1zM353 741h1v1h-1zM353 743h1v1h-1zM353 746h1v1h-1zM353 748h1v1h-1zM353 750h1v1h-1zM353 753h1v1h-1zM353 756h1v1h-1zM353 758h1v1h-1zM353 761h1v1h-1zM353 763h1v1h-1zM353 765h1v1h-1zM353 768h1v1h-1zM353 770h1v1h-1zM353 772h1v1h-1zM353 775h1v1h-1zM353 777h1v1h-1zM353 779h1v1h-1zM353 782h1v1h-1zM353 784h1v1h-1zM353 786h1v1h-1zM353 788h1v1h-1zM353 791h1v1h-1zM353 793h1v1h-1zM353 795h1v1h-1zM353 798h1v1h-1zM353 800h1v1h-1zM353 802h1v1h-1zM353 805h1v1h-1zM353 807h1v1h-1zM353 809h1v1h-1zM353 812h1v1h-1zM353 814h1v1h-1zM353 816h1v1h-1zM353 819h1v1h-1zM353 821h1v1h-1zM353 823h1v1h-1zM353 826h1v1h-1zM353 828h1v1h-1zM353 830h1v1h-1zM353 833h1v1h-1zM353 835h1v1h-1zM353 837h1v1h-1zM353 840h1v1h-1zM353 842h1v1h-1zM353 844h1v1h-1zM353 846h1v1h-1zM353 849h1v1h-1zM353 851h1v1h-1zM353 853h1v1h-1zM353 856h1v1h-1zM353 858h1v1h-1zM353 860h1v1h-1zM353 863h1v1h-1zM353 865h1v1h-1zM353 867h1v1h-1zM353 870h1v1h-1zM353 873h1v1h-1zM353 875h1v1h-1zM353 878h1v1h-1zM353 880h1v1h-1zM353 883h1v1h-1zM353 885h1v1h-1zM353 887h1v1h-1zM353 890h1v1h-1zM353 892h1v1h-1zM353 894h1v1h-1zM353 897h1v1h-1zM353 899h1v1h-1zM353 902h1v1h-1zM353 904h1v1h-1zM353 906h1v1h-1zM353 909h1v1h-1zM353 911h1v1h-1zM353 913h1v1h-1zM353 916h1v1h-1zM353 918h1v1h-1zM353 921h1v1h-1zM353 923h1v1h-1zM353 925h1v1h-1zM353 928h1v1h-1zM353 930h1v1h-1zM353 933h1v1h-1zM353 935h1v1h-1zM353 937h1v1h-1zM353 940h1v1h-1zM353 942h1v1h-1zM353 944h1v1h-1zM353 947h1v1h-1zM353 949h1v1h-1zM353 952h1v1h-1zM353 954h1v1h-1zM353 956h1v1h-1zM353 959h1v1h-1zM353 961h1v1h-1zM353 963h1v1h-1zM353 966h1v1h-1zM353 968h1v1h-1zM353 971h1v1h-1zM353 973h1v1h-1zM353 975h1v1h-1zM353 978h1v1h-1zM353 980h1v1h-1zM353 982h1v1h-1zM353 985h1v1h-1zM353 987h1v1h-1zM353 990h1v1h-1zM388 54h1v1h-1zM388 66h1v1h-1zM388 77h1v1h-1zM388 89h1v1h-1zM388 100h1v1h-1zM388 112h1v1h-1zM388 124h1v1h-1zM388 135h1v1h-1zM388 147h1v1h-1zM388 158h1v1h-1zM388 171h1v1h-1zM388 183h1v1h-1zM388 194h1v1h-1zM388 206h1v1h-1zM388 217h1v1h-1zM388 229h1v1h-1zM388 241h1v1h-1zM388 252h1v1h-1zM388 264h1v1h-1zM388 275h1v1h-1zM388 288h1v1h-1zM388 300h1v1h-1zM388 311h1v1h-1zM388 323h1v1h-1zM388 334h1v1h-1zM388 346h1v1h-1zM388 358h1v1h-1zM388 369h1v1h-1zM388 381h1v1h-1zM388 392h1v1h-1zM388 405h1v1h-1zM388 417h1v1h-1zM388 428h1v1h-1zM388 440h1v1h-1zM388 451h1v1h-1zM388 463h1v1h-1zM388 475h1v1h-1zM388 486h1v1h-1zM388 498h1v1h-1zM388 509h1v1h-1zM388 522h1v1h-1zM388 534h1v1h-1zM388 545h1v1h-1zM388 557h1v1h-1zM388 568h1v1h-1zM388 580h1v1h-1zM388 592h1v1h-1zM388 603h1v1h-1zM388 615h1v1h-1zM388 626h1v1h-1zM388 639h1v1h-1zM388 651h1v1h-1zM388 662h1v1h-1zM388 674h1v1h-1zM388 685h1v1h-1zM388 697h1v1h-1zM388 709h1v1h-1zM388 720h1v1h-1zM388 732h1v1h-1zM388 743h1v1h-1zM388 756h1v1h-1zM388 768h1v1h-1zM388 779h1v1h-1zM388 791h1v1h-1zM388 802h1v1h-1zM388 814h1v1h-1zM388 826h1v1h-1zM388 837h1v1h-1zM388 849h1v1h-1zM388 860h1v1h-1zM388 873h1v1h-1zM388 885h1v1h-1zM388 897h1v1h-1zM388 909h1v1h-1zM388 921h1v1h-1zM388 933h1v1h-1zM388 944h1v1h-1zM388 956h1v1h-1zM388 968h1v1h-1zM388 980h1v1h-1zM423 54h1v1h-1zM423 66h1v1h-1zM423 77h1v1h-1zM423 89h1v1h-1zM423 100h1v1h-1zM423 112h1v1h-1zM423 124h1v1h-1zM423 135h1v1h-1zM423 147h1v1h-1zM423 158h1v1h-1zM423 171h1v1h-1zM423 183h1v1h-1zM423 194h1v1h-1zM423 206h1v1h-1zM423 217h1v1h-1zM423 229h1v1h-1zM423 241h1v1h-1zM423 252h1v1h-1zM423 264h1v1h-1zM423 275h1v1h-1zM423 288h1v1h-1zM423 300h1v1h-1zM423 311h1v1h-1zM423 323h1v1h-1zM423 334h1v1h-1zM423 346h1v1h-1zM423 358h1v1h-1zM423 369h1v1h-1zM423 381h1v1h-1zM423 392h1v1h-1zM423 405h1v1h-1zM423 417h1v1h-1zM423 428h1v1h-1zM423 440h1v1h-1zM423 451h1v1h-1zM423 463h1v1h-1zM423 475h1v1h-1zM423 486h1v1h-1zM423 498h1v1h-1zM423 509h1v1h-1zM423 522h1v1h-1zM423 534h1v1h-1zM423 545h1v1h-1zM423 557h1v1h-1zM423 568h1v1h-1zM423 580h1v1h-1zM423 592h1v1h-1zM423 603h1v1h-1zM423 615h1v1h-1zM423 626h1v1h-1zM423 639h1v1h-1zM423 651h1v1h-1zM423 662h1v1h-1zM423 674h1v1h-1zM423 685h1v1h-1zM423 697h1v1h-1zM423 709h1v1h-1zM423 720h1v1h-1zM423 732h1v1h-1zM423 743h1v1h-1zM423 756h1v1h-1zM423 768h1v1h-1zM423 779h1v1h-1zM423 791h1v1h-1zM423 802h1v1h-1zM423 814h1v1h-1zM423 826h1v1h-1zM423 837h1v1h-1zM423 849h1v1h-1zM423 860h1v1h-1zM423 873h1v1h-1zM423 885h1v1h-1zM423 897h1v1h-1zM423 909h1v1h-1zM423 921h1v1h-1zM423 933h1v1h-1zM423 944h1v1h-1zM423 956h1v1h-1zM423 968h1v1h-1zM423 980h1v1h-1zM458 54h1v1h-1zM458 66h1v1h-1zM458 77h1v1h-1zM458 89h1v1h-1zM458 100h1v1h-1zM458 112h1v1h-1zM458 124h1v1h-1zM458 135h1v1h-1zM458 147h1v1h-1zM458 158h1v1h-1zM458 171h1v1h-1zM458 183h1v1h-1zM458 194h1v1h-1zM458 206h1v1h-1zM458 217h1v1h-1zM458 229h1v1h-1zM458 241h1v1h-1zM458 252h1v1h-1zM458 264h1v1h-1zM458 275h1v1h-1zM458 288h1v1h-1zM458 300h1v1h-1zM458 311h1v1h-1zM458 323h1v1h-1zM458 334h1v1h-1zM458 346h1v1h-1zM458 358h1v1h-1zM458 369h1v1h-1zM458 381h1v1h-1zM458 392h1v1h-1zM458 405h1v1h-1zM458 417h1v1h-1zM458 428h1v1h-1zM458 440h1v1h-1zM458 451h1v1h-1zM458 463h1v1h-1zM458 475h1v1h-1zM458 486h1v1h-1zM458 498h1v1h-1zM458 509h1v1h-1zM458 522h1v1h-1zM458 534h1v1h-1zM458 545h1v1h-1zM458 557h1v1h-1zM458 568h1v1h-1zM458 580h1v1h-1zM458 592h1v1h-1zM458 603h1v1h-1zM458 615h1v1h-1zM458 626h1v1h-1zM458 639h1v1h-1zM458 651h1v1h-1zM458 662h1v1h-1zM458 674h1v1h-1zM458 685h1v1h-1zM458 697h1v1h-1zM458 709h1v1h-1zM458 720h1v1h-1zM458 732h1v1h-1zM458 743h1v1h-1zM458 756h1v1h-1zM458 768h1v1h-1zM458 779h1v1h-1zM458 791h1v1h-1zM458 802h1v1h-1zM458 814h1v1h-1zM458 826h1v1h-1zM458 837h1v1h-1zM458 849h1v1h-1zM458 860h1v1h-1zM458 873h1v1h-1zM458 885h1v1h-1zM458 897h1v1h-1zM458 909h1v1h-1zM458 921h1v1h-1zM458 933h1v1h-1zM458 944h1v1h-1zM458 956h1v1h-1zM458 968h1v1h-1zM458 980h1v1h-1zM492 54h1v1h-1zM492 66h1v1h-1zM492 77h1v1h-1zM492 89h1v1h-1zM492 100h1v1h-1zM492 112h1v1h-1zM492 124h1v1h-1zM492 135h1v1h-1zM492 147h1v1h-1zM492 158h1v1h-1zM492 171h1v1h-1zM492 183h1v1h-1zM492 194h1v1h-1zM492 206h1v1h-1zM492 217h1v1h-1zM492 229h1v1h-1zM492 241h1v1h-1zM492 252h1v1h-1zM492 264h1v1h-1zM492 275h1v1h-1zM492 288h1v1h-1zM492 300h1v1h-1zM492 311h1v1h-1zM492 323h1v1h-1zM492 334h1v1h-1zM492 346h1v1h-1zM492 358h1v1h-1zM492 369h1v1h-1zM492 381h1v1h-1zM492 392h1v1h-1zM492 405h1v1h-1zM492 417h1v1h-1zM492 428h1v1h-1zM492 440h1v1h-1zM492 451h1v1h-1zM492 463h1v1h-1zM492 475h1v1h-1zM492 486h1v1h-1zM492 498h1v1h-1zM492 509h1v1h-1zM492 522h1v1h-1zM492 534h1v1h-1zM492 545h1v1h-1zM492 557h1v1h-1zM492 568h1v1h-1zM492 580h1v1h-1zM492 592h1v1h-1zM492 603h1v1h-1zM492 615h1v1h-1zM492 626h1v1h-1zM492 639h1v1h-1zM492 651h1v1h-1zM492 662h1v1h-1zM492 674h1v1h-1zM492 685h1v1h-1zM492 697h1v1h-1zM492 709h1v1h-1zM492 720h1v1h-1zM492 732h1v1h-1zM492 743h1v1h-1zM492 756h1v1h-1zM492 768h1v1h-1zM492 779h1v1h-1zM492 791h1v1h-1zM492 802h1v1h-1zM492 814h1v1h-1zM492 826h1v1h-1zM492 837h1v1h-1zM492 849h1v1h-1zM492 860h1v1h-1zM492 873h1v1h-1zM492 885h1v1h-1zM492 897h1v1h-1zM492 909h1v1h-1zM492 921h1v1h-1zM492 933h1v1h-1zM492 944h1v1h-1zM492 956h1v1h-1zM492 968h1v1h-1zM492 980h1v1h-1zM527 54h1v1h-1zM527 56h1v1h-1zM527 59h1v1h-1zM527 61h1v1h-1zM527 63h1v1h-1zM527 66h1v1h-1zM527 68h1v1h-1zM527 70h1v1h-1zM527 73h1v1h-1zM527 75h1v1h-1zM527 77h1v1h-1zM527 80h1v1h-1zM527 82h1v1h-1zM527 84h1v1h-1zM527 86h1v1h-1zM527 89h1v1h-1zM527 91h1v1h-1zM527 93h1v1h-1zM527 96h1v1h-1zM527 98h1v1h-1zM527 100h1v1h-1zM527 103h1v1h-1zM527 105h1v1h-1zM527 107h1v1h-1zM527 110h1v1h-1zM527 112h1v1h-1zM527 114h1v1h-1zM527 117h1v1h-1zM527 119h1v1h-1zM527 121h1v1h-1zM527 124h1v1h-1zM527 126h1v1h-1zM527 128h1v1h-1zM527 131h1v1h-1zM527 133h1v1h-1zM527 135h1v1h-1zM527 138h1v1h-1zM527 140h1v1h-1zM527 142h1v1h-1zM527 144h1v1h-1zM527 147h1v1h-1zM527 149h1v1h-1zM527 151h1v1h-1zM527 154h1v1h-1zM527 156h1v1h-1zM527 158h1v1h-1zM527 161h1v1h-1zM527 163h1v1h-1zM527 165h1v1h-1zM527 168h1v1h-1zM527 171h1v1h-1zM527 173h1v1h-1zM527 176h1v1h-1zM527 178h1v1h-1zM527 180h1v1h-1zM527 183h1v1h-1zM527 185h1v1h-1zM527 187h1v1h-1zM527 190h1v1h-1zM527 192h1v1h-1zM527 194h1v1h-1zM527 197h1v1h-1zM527 199h1v1h-1zM527 201h1v1h-1zM527 203h1v1h-1zM527 206h1v1h-1zM527 208h1v1h-1zM527 210h1v1h-1zM527 213h1v1h-1zM527 215h1v1h-1zM527 217h1v1h-1zM527 220h1v1h-1zM527 222h1v1h-1zM527 224h1v1h-1zM527 227h1v1h-1zM527 229h1v1h-1zM527 231h1v1h-1zM527 234h1v1h-1zM527 236h1v1h-1zM527 238h1v1h-1zM527 241h1v1h-1zM527 243h1v1h-1zM527 245h1v1h-1zM527 248h1v1h-1zM527 250h1v1h-1zM527 252h1v1h-1zM527 255h1v1h-1zM527 257h1v1h-1zM527 259h1v1h-1zM527 261h1v1h-1zM527 264h1v1h-1zM527 266h1v1h-1zM527 268h1v1h-1zM527 271h1v1h-1zM527 273h1v1h-1zM527 275h1v1h-1zM527 278h1v1h-1zM527 280h1v1h-1zM527 282h1v1h-1zM527 285h1v1h-1zM527 288h1v1h-1zM527 290h1v1h-1zM527 293h1v1h-1zM527 295h1v1h-1zM527 297h1v1h-1zM527 300h1v1h-1zM527 302h1v1h-1zM527 304h1v1h-1zM527 307h1v1h-1zM527 309h1v1h-1zM527 311h1v1h-1zM527 314h1v1h-1zM527 316h1v1h-1zM527 318h1v1h-1zM527 320h1v1h-1zM527 323h1v1h-1zM527 325h1v1h-1zM527 327h1v1h-1zM527 330h1v1h-1zM527 332h1v1h-1zM527 334h1v1h-1zM527 337h1v1h-1zM527 339h1v1h-1zM527 341h1v1h-1zM527 344h1v1h-1zM527 346h1v1h-1zM527 348h1v1h-1zM527 351h1v1h-1zM527 353h1v1h-1zM527 355h1v1h-1zM527 358h1v1h-1zM527 360h1v1h-1zM527 362h1v1h-1zM527 365h1v1h-1zM527 367h1v1h-1zM527 369h1v1h-1zM527 372h1v1h-1zM527 374h1v1h-1zM527 376h1v1h-1zM527 378h1v1h-1zM527 381h1v1h-1zM527 383h1v1h-1zM527 385h1v1h-1zM527 388h1v1h-1zM527 390h1v1h-1zM527 392h1v1h-1zM527 395h1v1h-1zM527 397h1v1h-1zM527 399h1v1h-1zM527 402h1v1h-1zM527 405h1v1h-1zM527 407h1v1h-1zM527 410h1v1h-1zM527 412h1v1h-1zM527 414h1v1h-1zM527 417h1v1h-1zM527 419h1v1h-1zM527 421h1v1h-1zM527 424h1v1h-1zM527 426h1v1h-1zM527 428h1v1h-1zM527 431h1v1h-1zM527 433h1v1h-1zM527 435h1v1h-1zM527 437h1v1h-1zM527 440h1v1h-1zM527 442h1v1h-1zM527 444h1v1h-1zM527 447h1v1h-1zM527 449h1v1h-1zM527 451h1v1h-1zM527 454h1v1h-1zM527 456h1v1h-1zM527 458h1v1h-1zM527 461h1v1h-1zM527 463h1v1h-1zM527 465h1v1h-1zM527 468h1v1h-1zM527 470h1v1h-1zM527 472h1v1h-1zM527 475h1v1h-1zM527 477h1v1h-1zM527 479h1v1h-1zM527 482h1v1h-1zM527 484h1v1h-1zM527 486h1v1h-1zM527 489h1v1h-1zM527 491h1v1h-1zM527 493h1v1h-1zM527 495h1v1h-1zM527 498h1v1h-1zM527 500h1v1h-1zM527 502h1v1h-1zM527 505h1v1h-1zM527 507h1v1h-1zM527 509h1v1h-1zM527 512h1v1h-1zM527 514h1v1h-1zM527 516h1v1h-1zM527 519h1v1h-1zM527 522h1v1h-1zM527 524h1v1h-1zM527 527h1v1h-1zM527 529h1v1h-1zM527 531h1v1h-1zM527 534h1v1h-1zM527 536h1v1h-1zM527 538h1v1h-1zM527 541h1v1h-1zM527 543h1v1h-1zM527 545h1v1h-1zM527 548h1v1h-1zM527 550h1v1h-1zM527 552h1v1h-1zM527 554h1v1h-1zM527 557h1v1h-1zM527 559h1v1h-1zM527 561h1v1h-1zM527 564h1v1h-1zM527 566h1v1h-1zM527 568h1v1h-1zM527 571h1v1h-1zM527 573h1v1h-1zM527 575h1v1h-1zM527 578h1v1h-1zM527 580h1v1h-1zM527 582h1v1h-1zM527 585h1v1h-1zM527 587h1v1h-1zM527 589h1v1h-1zM527 592h1v1h-1zM527 594h1v1h-1zM527 596h1v1h-1zM527 599h1v1h-1zM527 601h1v1h-1zM527 603h1v1h-1zM527 606h1v1h-1zM527 608h1v1h-1zM527 610h1v1h-1zM527 612h1v1h-1zM527 615h1v1h-1zM527 617h1v1h-1zM527 619h1v1h-1zM527 622h1v1h-1zM527 624h1v1h-1zM527 626h1v1h-1zM527 629h1v1h-1zM527 631h1v1h-1zM527 633h1v1h-1zM527 636h1v1h-1zM527 639h1v1h-1zM527 641h1v1h-1zM527 644h1v1h-1zM527 646h1v1h-1zM527 648h1v1h-1zM527 651h1v1h-1zM527 653h1v1h-1zM527 655h1v1h-1zM527 658h1v1h-1zM527 660h1v1h-1zM527 662h1v1h-1zM527 665h1v1h-1zM527 667h1v1h-1zM527 669h1v1h-1zM527 671h1v1h-1zM527 674h1v1h-1zM527 676h1v1h-1zM527 678h1v1h-1zM527 681h1v1h-1zM527 683h1v1h-1zM527 685h1v1h-1zM527 688h1v1h-1zM527 690h1v1h-1zM527 692h1v1h-1zM527 695h1v1h-1zM527 697h1v1h-1zM527 699h1v1h-1zM527 702h1v1h-1zM527 704h1v1h-1zM527 706h1v1h-1zM527 709h1v1h-1zM527 711h1v1h-1zM527 713h1v1h-1zM527 716h1v1h-1zM527 718h1v1h-1zM527 720h1v1h-1zM527 723h1v1h-1zM527 725h1v1h-1zM527 727h1v1h-1zM527 729h1v1h-1zM527 732h1v1h-1zM527 734h1v1h-1zM527 736h1v1h-1zM527 739h1v1h-1zM527 741h1v1h-1zM527 743h1v1h-1zM527 746h1v1h-1zM527 748h1v1h-1zM527 750h1v1h-1zM527 753h1v1h-1zM527 756h1v1h-1zM527 758h1v1h-1zM527 761h1v1h-1zM527 763h1v1h-1zM527 765h1v1h-1zM527 768h1v1h-1zM527 770h1v1h-1zM527 772h1v1h-1zM527 775h1v1h-1zM527 777h1v1h-1zM527 779h1v1h-1zM527 782h1v1h-1zM527 784h1v1h-1zM527 786h1v1h-1zM527 788h1v1h-1zM527 791h1v1h-1zM527 793h1v1h-1zM527 795h1v1h-1zM527 798h1v1h-1zM527 800h1v1h-1zM527 802h1v1h-1zM527 805h1v1h-1zM527 807h1v1h-1zM527 809h1v1h-1zM527 812h1v1h-1zM527 814h1v1h-1zM527 816h1v1h-1zM527 819h1v1h-1zM527 821h1v1h-1zM527 823h1v1h-1zM527 826h1v1h-1zM527 828h1v1h-1zM527 830h1v1h-1zM527 833h1v1h-1zM527 835h1v1h-1zM527 837h1v1h-1zM527 840h1v1h-1zM527 842h1v1h-1zM527 844h1v1h-1zM527 846h1v1h-1zM527 849h1v1h-1zM527 851h1v1h-1zM527 853h1v1h-1zM527 856h1v1h-1zM527 858h1v1h-1zM527 860h1v1h-1zM527 863h1v1h-1zM527 865h1v1h-1zM527 867h1v1h-1zM527 870h1v1h-1zM527 873h1v1h-1zM527 875h1v1h-1zM527 878h1v1h-1zM527 880h1v1h-1zM527 883h1v1h-1zM527 885h1v1h-1zM527 887h1v1h-1zM527 890h1v1h-1zM527 892h1v1h-1zM527 894h1v1h-1zM527 897h1v1h-1zM527 899h1v1h-1zM527 902h1v1h-1zM527 904h1v1h-1zM527 906h1v1h-1zM527 909h1v1h-1zM527 911h1v1h-1zM527 913h1v1h-1zM527 916h1v1h-1zM527 918h1v1h-1zM527 921h1v1h-1zM527 923h1v1h-1zM527 925h1v1h-1zM527 928h1v1h-1zM527 930h1v1h-1zM527 933h1v1h-1zM527 935h1v1h-1zM527 937h1v1h-1zM527 940h1v1h-1zM527 942h1v1h-1zM527 944h1v1h-1zM527 947h1v1h-1zM527 949h1v1h-1zM527 952h1v1h-1zM527 954h1v1h-1zM527 956h1v1h-1zM527 959h1v1h-1zM527 961h1v1h-1zM527 963h1v1h-1zM527 966h1v1h-1zM527 968h1v1h-1zM527 971h1v1h-1zM527 973h1v1h-1zM527 975h1v1h-1zM527 978h1v1h-1zM527 980h1v1h-1zM527 982h1v1h-1zM527 985h1v1h-1zM527 987h1v1h-1zM527 990h1v1h-1zM562 54h1v1h-1zM562 66h1v1h-1zM562 77h1v1h-1zM562 89h1v1h-1zM562 100h1v1h-1zM562 112h1v1h-1zM562 124h1v1h-1zM562 135h1v1h-1zM562 147h1v1h-1zM562 158h1v1h-1zM562 171h1v1h-1zM562 183h1v1h-1zM562 194h1v1h-1zM562 206h1v1h-1zM562 217h1v1h-1zM562 229h1v1h-1zM562 241h1v1h-1zM562 252h1v1h-1zM562 264h1v1h-1zM562 275h1v1h-1zM562 288h1v1h-1zM562 300h1v1h-1zM562 311h1v1h-1zM562 323h1v1h-1zM562 334h1v1h-1zM562 346h1v1h-1zM562 358h1v1h-1zM562 369h1v1h-1zM562 381h1v1h-1zM562 392h1v1h-1zM562 405h1v1h-1zM562 417h1v1h-1zM562 428h1v1h-1zM562 440h1v1h-1zM562 451h1v1h-1zM562 463h1v1h-1zM562 475h1v1h-1zM562 486h1v1h-1zM562 498h1v1h-1zM562 509h1v1h-1zM562 522h1v1h-1zM562 534h1v1h-1zM562 545h1v1h-1zM562 557h1v1h-1zM562 568h1v1h-1zM562 580h1v1h-1zM562 592h1v1h-1zM562 603h1v1h-1zM562 615h1v1h-1zM562 626h1v1h-1zM562 639h1v1h-1zM562 651h1v1h-1zM562 662h1v1h-1zM562 674h1v1h-1zM562 685h1v1h-1zM562 697h1v1h-1zM562 709h1v1h-1zM562 720h1v1h-1zM562 732h1v1h-1zM562 743h1v1h-1zM562 756h1v1h-1zM562 768h1v1h-1zM562 779h1v1h-1zM562 791h1v1h-1zM562 802h1v1h-1zM562 814h1v1h-1zM562 826h1v1h-1zM562 837h1v1h-1zM562 849h1v1h-1zM562 860h1v1h-1zM562 873h1v1h-1zM562 885h1v1h-1zM562 897h1v1h-1zM562 909h1v1h-1zM562 921h1v1h-1zM562 933h1v1h-1zM562 944h1v1h-1zM562 956h1v1h-1zM562 968h1v1h-1zM562 980h1v1h-1zM597 54h1v1h-1zM597 66h1v1h-1zM597 77h1v1h-1zM597 89h1v1h-1zM597 100h1v1h-1zM597 112h1v1h-1zM597 124h1v1h-1zM597 135h1v1h-1zM597 147h1v1h-1zM597 158h1v1h-1zM597 171h1v1h-1zM597 183h1v1h-1zM597 194h1v1h-1zM597 206h1v1h-1zM597 217h1v1h-1zM597 229h1v1h-1zM597 241h1v1h-1zM597 252h1v1h-1zM597 264h1v1h-1zM597 275h1v1h-1zM597 288h1v1h-1zM597 300h1v1h-1zM597 311h1v1h-1zM597 323h1v1h-1zM597 334h1v1h-1zM597 346h1v1h-1zM597 358h1v1h-1zM597 369h1v1h-1zM597 381h1v1h-1zM597 392h1v1h-1zM597 405h1v1h-1zM597 417h1v1h-1zM597 428h1v1h-1zM597 440h1v1h-1zM597 451h1v1h-1zM597 463h1v1h-1zM597 475h1v1h-1zM597 486h1v1h-1zM597 498h1v1h-1zM597 509h1v1h-1zM597 522h1v1h-1zM597 534h1v1h-1zM597 545h1v1h-1zM597 557h1v1h-1zM597 568h1v1h-1zM597 580h1v1h-1zM597 592h1v1h-1zM597 603h1v1h-1zM597 615h1v1h-1zM597 626h1v1h-1zM597 639h1v1h-1zM597 651h1v1h-1zM597 662h1v1h-1zM597 674h1v1h-1zM597 685h1v1h-1zM597 697h1v1h-1zM597 709h1v1h-1zM597 720h1v1h-1zM597 732h1v1h-1zM597 743h1v1h-1zM597 756h1v1h-1zM597 768h1v1h-1zM597 779h1v1h-1zM597 791h1v1h-1zM597 802h1v1h-1zM597 814h1v1h-1zM597 826h1v1h-1zM597 837h1v1h-1zM597 849h1v1h-1zM597 860h1v1h-1zM597 873h1v1h-1zM597 885h1v1h-1zM597 897h1v1h-1zM597 909h1v1h-1zM597 921h1v1h-1zM597 933h1v1h-1zM597 944h1v1h-1zM597 956h1v1h-1zM597 968h1v1h-1zM597 980h1v1h-1zM632 54h1v1h-1zM632 66h1v1h-1zM632 77h1v1h-1zM632 89h1v1h-1zM632 100h1v1h-1zM632 112h1v1h-1zM632 124h1v1h-1zM632 135h1v1h-1zM632 147h1v1h-1zM632 158h1v1h-1zM632 171h1v1h-1zM632 183h1v1h-1zM632 194h1v1h-1zM632 206h1v1h-1zM632 217h1v1h-1zM632 229h1v1h-1zM632 241h1v1h-1zM632 252h1v1h-1zM632 264h1v1h-1zM632 275h1v1h-1zM632 288h1v1h-1zM632 300h1v1h-1zM632 311h1v1h-1zM632 323h1v1h-1zM632 334h1v1h-1zM632 346h1v1h-1zM632 358h1v1h-1zM632 369h1v1h-1zM632 381h1v1h-1zM632 392h1v1h-1zM632 405h1v1h-1zM632 417h1v1h-1zM632 428h1v1h-1zM632 440h1v1h-1zM632 451h1v1h-1zM632 463h1v1h-1zM632 475h1v1h-1zM632 486h1v1h-1zM632 498h1v1h-1zM632 509h1v1h-1zM632 522h1v1h-1zM632 534h1v1h-1zM632 545h1v1h-1zM632 557h1v1h-1zM632 568h1v1h-1zM632 580h1v1h-1zM632 592h1v1h-1zM632 603h1v1h-1zM632 615h1v1h-1zM632 626h1v1h-1zM632 639h1v1h-1zM632 651h1v1h-1zM632 662h1v1h-1zM632 674h1v1h-1zM632 685h1v1h-1zM632 697h1v1h-1zM632 709h1v1h-1zM632 720h1v1h-1zM632 732h1v1h-1zM632 743h1v1h-1zM632 756h1v1h-1zM632 768h1v1h-1zM632 779h1v1h-1zM632 791h1v1h-1zM632 802h1v1h-1zM632 814h1v1h-1zM632 826h1v1h-1zM632 837h1v1h-1zM632 849h1v1h-1zM632 860h1v1h-1zM632 873h1v1h-1zM632 885h1v1h-1zM632 897h1v1h-1zM632 909h1v1h-1zM632 921h1v1h-1zM632 933h1v1h-1zM632 944h1v1h-1zM632 956h1v1h-1zM632 968h1v1h-1zM632 980h1v1h-1zM667 54h1v1h-1zM667 66h1v1h-1zM667 77h1v1h-1zM667 89h1v1h-1zM667 100h1v1h-1zM667 112h1v1h-1zM667 124h1v1h-1zM667 135h1v1h-1zM667 147h1v1h-1zM667 158h1v1h-1zM667 171h1v1h-1zM667 183h1v1h-1zM667 194h1v1h-1zM667 206h1v1h-1zM667 217h1v1h-1zM667 229h1v1h-1zM667 241h1v1h-1zM667 252h1v1h-1zM667 264h1v1h-1zM667 275h1v1h-1zM667 288h1v1h-1zM667 300h1v1h-1zM667 311h1v1h-1zM667 323h1v1h-1zM667 334h1v1h-1zM667 346h1v1h-1zM667 358h1v1h-1zM667 369h1v1h-1zM667 381h1v1h-1zM667 392h1v1h-1zM667 405h1v1h-1zM667 417h1v1h-1zM667 428h1v1h-1zM667 440h1v1h-1zM667 451h1v1h-1zM667 463h1v1h-1zM667 475h1v1h-1zM667 486h1v1h-1zM667 498h1v1h-1zM667 509h1v1h-1zM667 522h1v1h-1zM667 534h1v1h-1zM667 545h1v1h-1zM667 557h1v1h-1zM667 568h1v1h-1zM667 580h1v1h-1zM667 592h1v1h-1zM667 603h1v1h-1zM667 615h1v1h-1zM667 626h1v1h-1zM667 639h1v1h-1zM667 651h1v1h-1zM667 662h1v1h-1zM667 674h1v1h-1zM667 685h1v1h-1zM667 697h1v1h-1zM667 709h1v1h-1zM667 720h1v1h-1zM667 732h1v1h-1zM667 743h1v1h-1zM667 756h1v1h-1zM667 768h1v1h-1zM667 779h1v1h-1zM667 791h1v1h-1zM667 802h1v1h-1zM667 814h1v1h-1zM667 826h1v1h-1zM667 837h1v1h-1zM667 849h1v1h-1zM667 860h1v1h-1zM667 873h1v1h-1zM667 885h1v1h-1zM667 897h1v1h-1zM667 909h1v1h-1zM667 921h1v1h-1zM667 933h1v1h-1zM667 944h1v1h-1zM667 956h1v1h-1zM667 968h1v1h-1zM667 980h1v1h-1zM702 54h1v1h-1zM702 56h1v1h-1zM702 59h1v1h-1zM702 61h1v1h-1zM702 63h1v1h-1zM702 66h1v1h-1zM702 68h1v1h-1zM702 70h1v1h-1zM702 73h1v1h-1zM702 75h1v1h-1zM702 77h1v1h-1zM702 80h1v1h-1zM702 82h1v1h-1zM702 84h1v1h-1zM702 86h1v1h-1zM702 89h1v1h-1zM702 91h1v1h-1zM702 93h1v1h-1zM702 96h1v1h-1zM702 98h1v1h-1zM702 100h1v1h-1zM702 103h1v1h-1zM702 105h1v1h-1zM702 107h1v1h-1zM702 110h1v1h-1zM702 112h1v1h-1zM702 114h1v1h-1zM702 117h1v1h-1zM702 119h1v1h-1zM702 121h1v1h-1zM702 124h1v1h-1zM702 126h1v1h-1zM702 128h1v1h-1zM702 131h1v1h-1zM702 133h1v1h-1zM702 135h1v1h-1zM702 138h1v1h-1zM702 140h1v1h-1zM702 142h1v1h-1zM702 144h1v1h-1zM702 147h1v1h-1zM702 149h1v1h-1zM702 151h1v1h-1zM702 154h1v1h-1zM702 156h1v1h-1zM702 158h1v1h-1zM702 161h1v1h-1zM702 163h1v1h-1zM702 165h1v1h-1zM702 168h1v1h-1zM702 171h1v1h-1zM702 173h1v1h-1zM702 176h1v1h-1zM702 178h1v1h-1zM702 180h1v1h-1zM702 183h1v1h-1zM702 185h1v1h-1zM702 187h1v1h-1zM702 190h1v1h-1zM702 192h1v1h-1zM702 194h1v1h-1zM702 197h1v1h-1zM702 199h1v1h-1zM702 201h1v1h-1zM702 203h1v1h-1zM702 206h1v1h-1zM702 208h1v1h-1zM702 210h1v1h-1zM702 213h1v1h-1zM702 215h1v1h-1zM702 217h1v1h-1zM702 220h1v1h-1zM702 222h1v1h-1zM702 224h1v1h-1zM702 227h1v1h-1zM702 229h1v1h-1zM702 231h1v1h-1zM702 234h1v1h-1zM702 236h1v1h-1zM702 238h1v1h-1zM702 241h1v1h-1zM702 243h1v1h-1zM702 245h1v1h-1zM702 248h1v1h-1zM702 250h1v1h-1zM702 252h1v1h-1zM702 255h1v1h-1zM702 257h1v1h-1zM702 259h1v1h-1zM702 261h1v1h-1zM702 264h1v1h-1zM702 266h1v1h-1zM702 268h1v1h-1zM702 271h1v1h-1zM702 273h1v1h-1zM702 275h1v1h-1zM702 278h1v1h-1zM702 280h1v1h-1zM702 282h1v1h-1zM702 285h1v1h-1zM702 288h1v1h-1zM702 290h1v1h-1zM702 293h1v1h-1zM702 295h1v1h-1zM702 297h1v1h-1zM702 300h1v1h-1zM702 302h1v1h-1zM702 304h1v1h-1zM702 307h1v1h-1zM702 309h1v1h-1zM702 311h1v1h-1zM702 314h1v1h-1zM702 316h1v1h-1zM702 318h1v1h-1zM702 320h1v1h-1zM702 323h1v1h-1zM702 325h1v1h-1zM702 327h1v1h-1zM702 330h1v1h-1zM702 332h1v1h-1zM702 334h1v1h-1zM702 337h1v1h-1zM702 339h1v1h-1zM702 341h1v1h-1zM702 344h1v1h-1zM702 346h1v1h-1zM702 348h1v1h-1zM702 351h1v1h-1zM702 353h1v1h-1zM702 355h1v1h-1zM702 358h1v1h-1zM702 360h1v1h-1zM702 362h1v1h-1zM702 365h1v1h-1zM702 367h1v1h-1zM702 369h1v1h-1zM702 372h1v1h-1zM702 374h1v1h-1zM702 376h1v1h-1zM702 378h1v1h-1zM702 381h1v1h-1zM702 383h1v1h-1zM702 385h1v1h-1zM702 388h1v1h-1zM702 390h1v1h-1zM702 392h1v1h-1zM702 395h1v1h-1zM702 397h1v1h-1zM702 399h1v1h-1zM702 402h1v1h-1zM702 405h1v1h-1zM702 407h1v1h-1zM702 410h1v1h-1zM702 412h1v1h-1zM702 414h1v1h-1zM702 417h1v1h-1zM702 419h1v1h-1zM702 421h1v1h-1zM702 424h1v1h-1zM702 426h1v1h-1zM702 428h1v1h-1zM702 431h1v1h-1zM702 433h1v1h-1zM702 435h1v1h-1zM702 437h1v1h-1zM702 440h1v1h-1zM702 442h1v1h-1zM702 444h1v1h-1zM702 447h1v1h-1zM702 449h1v1h-1zM702 451h1v1h-1zM702 454h1v1h-1zM702 456h1v1h-1zM702 458h1v1h-1zM702 461h1v1h-1zM702 463h1v1h-1zM702 465h1v1h-1zM702 468h1v1h-1zM702 470h1v1h-1zM702 472h1v1h-1zM702 475h1v1h-1zM702 477h1v1h-1zM702 479h1v1h-1zM702 482h1v1h-1zM702 484h1v1h-1zM702 486h1v1h-1zM702 489h1v1h-1zM702 491h1v1h-1zM702 493h1v1h-1zM702 495h1v1h-1zM702 498h1v1h-1zM702 500h1v1h-1zM702 502h1v1h-1zM702 505h1v1h-1zM702 507h1v1h-1zM702 509h1v1h-1zM702 512h1v1h-1zM702 514h1v1h-1zM702 516h1v1h-1zM702 519h1v1h-1zM702 522h1v1h-1zM702 524h1v1h-1zM702 527h1v1h-1zM702 529h1v1h-1zM702 531h1v1h-1zM702 534h1v1h-1zM702 536h1v1h-1zM702 538h1v1h-1zM702 541h1v1h-1zM702 543h1v1h-1zM702 545h1v1h-1zM702 548h1v1h-1zM702 550h1v1h-1zM702 552h1v1h-1zM702 554h1v1h-1zM702 557h1v1h-1zM702 559h1v1h-1zM702 561h1v1h-1zM702 564h1v1h-1zM702 566h1v1h-1zM702 568h1v1h-1zM702 571h1v1h-1zM702 573h1v1h-1zM702 575h1v1h-1zM702 578h1v1h-1zM702 580h1v1h-1zM702 582h1v1h-1zM702 585h1v1h-1zM702 587h1v1h-1zM702 589h1v1h-1zM702 592h1v1h-1zM702 594h1v1h-1zM702 596h1v1h-1zM702 599h1v1h-1zM702 601h1v1h-1zM702 603h1v1h-1zM702 606h1v1h-1zM702 608h1v1h-1zM702 610h1v1h-1zM702 612h1v1h-1zM702 615h1v1h-1zM702 617h1v1h-1zM702 619h1v1h-1zM702 622h1v1h-1zM702 624h1v1h-1zM702 626h1v1h-1zM702 629h1v1h-1zM702 631h1v1h-1zM702 633h1v1h-1zM702 636h1v1h-1zM702 639h1v1h-1zM702 641h1v1h-1zM702 644h1v1h-1zM702 646h1v1h-1zM702 648h1v1h-1zM702 651h1v1h-1zM702 653h1v1h-1zM702 655h1v1h-1zM702 658h1v1h-1zM702 660h1v1h-1zM702 662h1v1h-1zM702 665h1v1h-1zM702 667h1v1h-1zM702 669h1v1h-1zM702 671h1v1h-1zM702 674h1v1h-1zM702 676h1v1h-1zM702 678h1v1h-1zM702 681h1v1h-1zM702 683h1v1h-1zM702 685h1v1h-1zM702 688h1v1h-1zM702 690h1v1h-1zM702 692h1v1h-1zM702 695h1v1h-1zM702 697h1v1h-1zM702 699h1v1h-1zM702 702h1v1h-1zM702 704h1v1h-1zM702 706h1v1h-1zM702 709h1v1h-1zM702 711h1v1h-1zM702 713h1v1h-1zM702 716h1v1h-1zM702 718h1v1h-1zM702 720h1v1h-1zM702 723h1v1h-1zM702 725h1v1h-1zM702 727h1v1h-1zM702 729h1v1h-1zM702 732h1v1h-1zM702 734h1v1h-1zM702 736h1v1h-1zM702 739h1v1h-1zM702 741h1v1h-1zM702 743h1v1h-1zM702 746h1v1h-1zM702 748h1v1h-1zM702 750h1v1h-1zM702 753h1v1h-1zM702 756h1v1h-1zM702 758h1v1h-1zM702 761h1v1h-1zM702 763h1v1h-1zM702 765h1v1h-1zM702 768h1v1h-1zM702 770h1v1h-1zM702 772h1v1h-1zM702 775h1v1h-1zM702 777h1v1h-1zM702 779h1v1h-1zM702 782h1v1h-1zM702 784h1v1h-1zM702 786h1v1h-1zM702 788h1v1h-1zM702 791h1v1h-1zM702 793h1v1h-1zM702 795h1v1h-1zM702 798h1v1h-1zM702 800h1v1h-1zM702 802h1v1h-1zM702 805h1v1h-1zM702 807h1v1h-1zM702 809h1v1h-1zM702 812h1v1h-1zM702 814h1v1h-1zM702 816h1v1h-1zM702 819h1v1h-1zM702 821h1v1h-1zM702 823h1v1h-1zM702 826h1v1h-1zM702 828h1v1h-1zM702 830h1v1h-1zM702 833h1v1h-1zM702 835h1v1h-1zM702 837h1v1h-1zM702 840h1v1h-1zM702 842h1v1h-1zM702 844h1v1h-1zM702 846h1v1h-1zM702 849h1v1h-1zM702 851h1v1h-1zM702 853h1v1h-1zM702 856h1v1h-1zM702 858h1v1h-1zM702 860h1v1h-1zM702 863h1v1h-1zM702 865h1v1h-1zM702 867h1v1h-1zM702 870h1v1h-1zM702 873h1v1h-1zM702 875h1v1h-1zM702 878h1v1h-1zM702 880h1v1h-1zM702 883h1v1h-1zM702 885h1v1h-1zM702 887h1v1h-1zM702 890h1v1h-1zM702 892h1v1h-1zM702 894h1v1h-1zM702 897h1v1h-1zM702 899h1v1h-1zM702 902h1v1h-1zM702 904h1v1h-1zM702 906h1v1h-1zM702 909h1v1h-1zM702 911h1v1h-1zM702 913h1v1h-1zM702 916h1v1h-1zM702 918h1v1h-1zM702 921h1v1h-1zM702 923h1v1h-1zM702 925h1v1h-1zM702 928h1v1h-1zM702 930h1v1h-1zM702 933h1v1h-1zM702 935h1v1h-1zM702 937h1v1h-1zM702 940h1v1h-1zM702 942h1v1h-1zM702 944h1v1h-1zM702 947h1v1h-1zM702 949h1v1h-1zM702 952h1v1h-1zM702 954h1v1h-1zM702 956h1v1h-1zM702 959h1v1h-1zM702 961h1v1h-1zM702 963h1v1h-1zM702 966h1v1h-1zM702 968h1v1h-1zM702 971h1v1h-1zM702 973h1v1h-1zM702 975h1v1h-1zM702 978h1v1h-1zM702 980h1v1h-1zM702 982h1v1h-1zM702 985h1v1h-1zM702 987h1v1h-1zM702 990h1v1h-1zM737 54h1v1h-1zM737 66h1v1h-1zM737 77h1v1h-1zM737 89h1v1h-1zM737 100h1v1h-1zM737 112h1v1h-1zM737 124h1v1h-1zM737 135h1v1h-1zM737 147h1v1h-1zM737 158h1v1h-1zM737 171h1v1h-1zM737 183h1v1h-1zM737 194h1v1h-1zM737 206h1v1h-1zM737 217h1v1h-1zM737 229h1v1h-1zM737 241h1v1h-1zM737 252h1v1h-1zM737 264h1v1h-1zM737 275h1v1h-1zM737 288h1v1h-1zM737 300h1v1h-1zM737 311h1v1h-1zM737 323h1v1h-1zM737 334h1v1h-1zM737 346h1v1h-1zM737 358h1v1h-1zM737 369h1v1h-1zM737 381h1v1h-1zM737 392h1v1h-1zM737 405h1v1h-1zM737 417h1v1h-1zM737 428h1v1h-1zM737 440h1v1h-1zM737 451h1v1h-1zM737 463h1v1h-1zM737 475h1v1h-1zM737 486h1v1h-1zM737 498h1v1h-1zM737 509h1v1h-1zM737 522h1v1h-1zM737 534h1v1h-1zM737 545h1v1h-1zM737 557h1v1h-1zM737 568h1v1h-1zM737 580h1v1h-1zM737 592h1v1h-1zM737 603h1v1h-1zM737 615h1v1h-1zM737 626h1v1h-1zM737 639h1v1h-1zM737 651h1v1h-1zM737 662h1v1h-1zM737 674h1v1h-1zM737 685h1v1h-1zM737 697h1v1h-1zM737 709h1v1h-1zM737 720h1v1h-1zM737 732h1v1h-1zM737 743h1v1h-1zM737 756h1v1h-1zM737 768h1v1h-1zM737 779h1v1h-1zM737 791h1v1h-1zM737 802h1v1h-1zM737 814h1v1h-1zM737 826h1v1h-1zM737 837h1v1h-1zM737 849h1v1h-1zM737 860h1v1h-1zM737 873h1v1h-1zM737 885h1v1h-1zM737 897h1v1h-1zM737 909h1v1h-1zM737 921h1v1h-1zM737 933h1v1h-1zM737 944h1v1h-1zM737 956h1v1h-1zM737 968h1v1h-1zM737 980h1v1h-1zM772 54h1v1h-1zM772 66h1v1h-1zM772 77h1v1h-1zM772 89h1v1h-1zM772 100h1v1h-1zM772 112h1v1h-1zM772 124h1v1h-1zM772 135h1v1h-1zM772 147h1v1h-1zM772 158h1v1h-1zM772 171h1v1h-1zM772 183h1v1h-1zM772 194h1v1h-1zM772 206h1v1h-1zM772 217h1v1h-1zM772 229h1v1h-1zM772 241h1v1h-1zM772 252h1v1h-1zM772 264h1v1h-1zM772 275h1v1h-1zM772 288h1v1h-1zM772 300h1v1h-1zM772 311h1v1h-1zM772 323h1v1h-1zM772 334h1v1h-1zM772 346h1v1h-1zM772 358h1v1h-1zM772 369h1v1h-1zM772 381h1v1h-1zM772 392h1v1h-1zM772 405h1v1h-1zM772 417h1v1h-1zM772 428h1v1h-1zM772 440h1v1h-1zM772 451h1v1h-1zM772 463h1v1h-1zM772 475h1v1h-1zM772 486h1v1h-1zM772 498h1v1h-1zM772 509h1v1h-1zM772 522h1v1h-1zM772 534h1v1h-1zM772 545h1v1h-1zM772 557h1v1h-1zM772 568h1v1h-1zM772 580h1v1h-1zM772 592h1v1h-1zM772 603h1v1h-1zM772 615h1v1h-1zM772 626h1v1h-1zM772 639h1v1h-1zM772 651h1v1h-1zM772 662h1v1h-1zM772 674h1v1h-1zM772 685h1v1h-1zM772 697h1v1h-1zM772 709h1v1h-1zM772 720h1v1h-1zM772 732h1v1h-1zM772 743h1v1h-1zM772 756h1v1h-1zM772 768h1v1h-1zM772 779h1v1h-1zM772 791h1v1h-1zM772 802h1v1h-1zM772 814h1v1h-1zM772 826h1v1h-1zM772 837h1v1h-1zM772 849h1v1h-1zM772 860h1v1h-1zM772 873h1v1h-1zM772 885h1v1h-1zM772 897h1v1h-1zM772 909h1v1h-1zM772 921h1v1h-1zM772 933h1v1h-1zM772 944h1v1h-1zM772 956h1v1h-1zM772 968h1v1h-1zM772 980h1v1h-1zM807 54h1v1h-1zM807 66h1v1h-1zM807 77h1v1h-1zM807 89h1v1h-1zM807 100h1v1h-1zM807 112h1v1h-1zM807 124h1v1h-1zM807 135h1v1h-1zM807 147h1v1h-1zM807 158h1v1h-1zM807 171h1v1h-1zM807 183h1v1h-1zM807 194h1v1h-1zM807 206h1v1h-1zM807 217h1v1h-1zM807 229h1v1h-1zM807 241h1v1h-1zM807 252h1v1h-1zM807 264h1v1h-1zM807 275h1v1h-1zM807 288h1v1h-1zM807 300h1v1h-1zM807 311h1v1h-1zM807 323h1v1h-1zM807 334h1v1h-1zM807 346h1v1h-1zM807 358h1v1h-1zM807 369h1v1h-1zM807 381h1v1h-1zM807 392h1v1h-1zM807 405h1v1h-1zM807 417h1v1h-1zM807 428h1v1h-1zM807 440h1v1h-1zM807 451h1v1h-1zM807 463h1v1h-1zM807 475h1v1h-1zM807 486h1v1h-1zM807 498h1v1h-1zM807 509h1v1h-1zM807 522h1v1h-1zM807 534h1v1h-1zM807 545h1v1h-1zM807 557h1v1h-1zM807 568h1v1h-1zM807 580h1v1h-1zM807 592h1v1h-1zM807 603h1v1h-1zM807 615h1v1h-1zM807 626h1v1h-1zM807 639h1v1h-1zM807 651h1v1h-1zM807 662h1v1h-1zM807 674h1v1h-1zM807 685h1v1h-1zM807 697h1v1h-1zM807 709h1v1h-1zM807 720h1v1h-1zM807 732h1v1h-1zM807 743h1v1h-1zM807 756h1v1h-1zM807 768h1v1h-1zM807 779h1v1h-1zM807 791h1v1h-1zM807 802h1v1h-1zM807 814h1v1h-1zM807 826h1v1h-1zM807 837h1v1h-1zM807 849h1v1h-1zM807 860h1v1h-1zM807 873h1v1h-1zM807 885h1v1h-1zM807 897h1v1h-1zM807 909h1v1h-1zM807 921h1v1h-1zM807 933h1v1h-1zM807 944h1v1h-1zM807 956h1v1h-1zM807 968h1v1h-1zM807 980h1v1h-1zM842 54h1v1h-1zM842 66h1v1h-1zM842 77h1v1h-1zM842 89h1v1h-1zM842 100h1v1h-1zM842 112h1v1h-1zM842 124h1v1h-1zM842 135h1v1h-1zM842 147h1v1h-1zM842 158h1v1h-1zM842 171h1v1h-1zM842 183h1v1h-1zM842 194h1v1h-1zM842 206h1v1h-1zM842 217h1v1h-1zM842 229h1v1h-1zM842 241h1v1h-1zM842 252h1v1h-1zM842 264h1v1h-1zM842 275h1v1h-1zM842 288h1v1h-1zM842 300h1v1h-1zM842 311h1v1h-1zM842 323h1v1h-1zM842 334h1v1h-1zM842 346h1v1h-1zM842 358h1v1h-1zM842 369h1v1h-1zM842 381h1v1h-1zM842 392h1v1h-1zM842 405h1v1h-1zM842 417h1v1h-1zM842 428h1v1h-1zM842 440h1v1h-1zM842 451h1v1h-1zM842 463h1v1h-1zM842 475h1v1h-1zM842 486h1v1h-1zM842 498h1v1h-1zM842 509h1v1h-1zM842 522h1v1h-1zM842 534h1v1h-1zM842 545h1v1h-1zM842 557h1v1h-1zM842 568h1v1h-1zM842 580h1v1h-1zM842 592h1v1h-1zM842 603h1v1h-1zM842 615h1v1h-1zM842 626h1v1h-1zM842 639h1v1h-1zM842 651h1v1h-1zM842 662h1v1h-1zM842 674h1v1h-1zM842 685h1v1h-1zM842 697h1v1h-1zM842 709h1v1h-1zM842 720h1v1h-1zM842 732h1v1h-1zM842 743h1v1h-1zM842 756h1v1h-1zM842 768h1v1h-1zM842 779h1v1h-1zM842 791h1v1h-1zM842 802h1v1h-1zM842 814h1v1h-1zM842 826h1v1h-1zM842 837h1v1h-1zM842 849h1v1h-1zM842 860h1v1h-1zM842 873h1v1h-1zM842 885h1v1h-1zM842 897h1v1h-1zM842 909h1v1h-1zM842 921h1v1h-1zM842 933h1v1h-1zM842 944h1v1h-1zM842 956h1v1h-1zM842 968h1v1h-1zM842 980h1v1h-1zM912 54h1v1h-1zM912 66h1v1h-1zM912 77h1v1h-1zM912 89h1v1h-1zM912 100h1v1h-1zM912 112h1v1h-1zM912 124h1v1h-1zM912 135h1v1h-1zM912 147h1v1h-1zM912 158h1v1h-1zM912 171h1v1h-1zM912 183h1v1h-1zM912 194h1v1h-1zM912 206h1v1h-1zM912 217h1v1h-1zM912 229h1v1h-1zM912 241h1v1h-1zM912 252h1v1h-1zM912 264h1v1h-1zM912 275h1v1h-1zM912 288h1v1h-1zM912 300h1v1h-1zM912 311h1v1h-1zM912 323h1v1h-1zM912 334h1v1h-1zM912 346h1v1h-1zM912 358h1v1h-1zM912 369h1v1h-1zM912 381h1v1h-1zM912 392h1v1h-1zM912 405h1v1h-1zM912 417h1v1h-1zM912 428h1v1h-1zM912 440h1v1h-1zM912 451h1v1h-1zM912 463h1v1h-1zM912 475h1v1h-1zM912 486h1v1h-1zM912 498h1v1h-1zM912 509h1v1h-1zM912 522h1v1h-1zM912 534h1v1h-1zM912 545h1v1h-1zM912 557h1v1h-1zM912 568h1v1h-1zM912 580h1v1h-1zM912 592h1v1h-1zM912 603h1v1h-1zM912 615h1v1h-1zM912 626h1v1h-1zM912 639h1v1h-1zM912 651h1v1h-1zM912 662h1v1h-1zM912 674h1v1h-1zM912 685h1v1h-1zM912 697h1v1h-1zM912 709h1v1h-1zM912 720h1v1h-1zM912 732h1v1h-1zM912 743h1v1h-1zM912 756h1v1h-1zM912 768h1v1h-1zM912 779h1v1h-1zM912 791h1v1h-1zM912 802h1v1h-1zM912 814h1v1h-1zM912 826h1v1h-1zM912 837h1v1h-1zM912 849h1v1h-1zM912 860h1v1h-1zM912 873h1v1h-1zM912 885h1v1h-1zM912 897h1v1h-1zM912 909h1v1h-1zM912 921h1v1h-1zM912 933h1v1h-1zM912 944h1v1h-1zM912 956h1v1h-1zM912 968h1v1h-1zM912 980h1v1h-1zM947 54h1v1h-1zM947 66h1v1h-1zM947 77h1v1h-1zM947 89h1v1h-1zM947 100h1v1h-1zM947 112h1v1h-1zM947 124h1v1h-1zM947 135h1v1h-1zM947 147h1v1h-1zM947 158h1v1h-1zM947 171h1v1h-1zM947 183h1v1h-1zM947 194h1v1h-1zM947 206h1v1h-1zM947 217h1v1h-1zM947 229h1v1h-1zM947 241h1v1h-1zM947 252h1v1h-1zM947 264h1v1h-1zM947 275h1v1h-1zM947 288h1v1h-1zM947 300h1v1h-1zM947 311h1v1h-1zM947 323h1v1h-1zM947 334h1v1h-1zM947 346h1v1h-1zM947 358h1v1h-1zM947 369h1v1h-1zM947 381h1v1h-1zM947 392h1v1h-1zM947 405h1v1h-1zM947 417h1v1h-1zM947 428h1v1h-1zM947 440h1v1h-1zM947 451h1v1h-1zM947 463h1v1h-1zM947 475h1v1h-1zM947 486h1v1h-1zM947 498h1v1h-1zM947 509h1v1h-1zM947 522h1v1h-1zM947 534h1v1h-1zM947 545h1v1h-1zM947 557h1v1h-1zM947 568h1v1h-1zM947 580h1v1h-1zM947 592h1v1h-1zM947 603h1v1h-1zM947 615h1v1h-1zM947 626h1v1h-1zM947 639h1v1h-1zM947 651h1v1h-1zM947 662h1v1h-1zM947 674h1v1h-1zM947 685h1v1h-1zM947 697h1v1h-1zM947 709h1v1h-1zM947 720h1v1h-1zM947 732h1v1h-1zM947 743h1v1h-1zM947 756h1v1h-1zM947 768h1v1h-1zM947 779h1v1h-1zM947 791h1v1h-1zM947 802h1v1h-1zM947 814h1v1h-1zM947 826h1v1h-1zM947 837h1v1h-1zM947 849h1v1h-1zM947 860h1v1h-1zM947 873h1v1h-1zM947 885h1v1h-1zM947 897h1v1h-1zM947 909h1v1h-1zM947 921h1v1h-1zM947 933h1v1h-1zM947 944h1v1h-1zM947 956h1v1h-1zM947 968h1v1h-1zM947 980h1v1h-1zM982 54h1v1h-1zM982 66h1v1h-1zM982 77h1v1h-1zM982 89h1v1h-1zM982 100h1v1h-1zM982 112h1v1h-1zM982 124h1v1h-1zM982 135h1v1h-1zM982 147h1v1h-1zM982 158h1v1h-1zM982 171h1v1h-1zM982 183h1v1h-1zM982 194h1v1h-1zM982 206h1v1h-1zM982 217h1v1h-1zM982 229h1v1h-1zM982 241h1v1h-1zM982 252h1v1h-1zM982 264h1v1h-1zM982 275h1v1h-1zM982 288h1v1h-1zM982 300h1v1h-1zM982 311h1v1h-1zM982 323h1v1h-1zM982 334h1v1h-1zM982 346h1v1h-1zM982 358h1v1h-1zM982 369h1v1h-1zM982 381h1v1h-1zM982 392h1v1h-1zM982 405h1v1h-1zM982 417h1v1h-1zM982 428h1v1h-1zM982 440h1v1h-1zM982 451h1v1h-1zM982 463h1v1h-1zM982 475h1v1h-1zM982 486h1v1h-1zM982 498h1v1h-1zM982 509h1v1h-1zM982 522h1v1h-1zM982 534h1v1h-1zM982 545h1v1h-1zM982 557h1v1h-1zM982 568h1v1h-1zM982 580h1v1h-1zM982 592h1v1h-1zM982 603h1v1h-1zM982 615h1v1h-1zM982 626h1v1h-1zM982 639h1v1h-1zM982 651h1v1h-1zM982 662h1v1h-1zM982 674h1v1h-1zM982 685h1v1h-1zM982 697h1v1h-1zM982 709h1v1h-1zM982 720h1v1h-1zM982 732h1v1h-1zM982 743h1v1h-1zM982 756h1v1h-1zM982 768h1v1h-1zM982 779h1v1h-1zM982 791h1v1h-1zM982 802h1v1h-1zM982 814h1v1h-1zM982 826h1v1h-1zM982 837h1v1h-1zM982 849h1v1h-1zM982 860h1v1h-1zM982 873h1v1h-1zM982 885h1v1h-1zM982 897h1v1h-1zM982 909h1v1h-1zM982 921h1v1h-1zM982 933h1v1h-1zM982 944h1v1h-1zM982 956h1v1h-1zM982 968h1v1h-1zM982 980h1v1h-1zM1017 54h1v1h-1zM1017 66h1v1h-1zM1017 77h1v1h-1zM1017 89h1v1h-1zM1017 100h1v1h-1zM1017 112h1v1h-1zM1017 124h1v1h-1zM1017 135h1v1h-1zM1017 147h1v1h-1zM1017 158h1v1h-1zM1017 171h1v1h-1zM1017 183h1v1h-1zM1017 194h1v1h-1zM1017 206h1v1h-1zM1017 217h1v1h-1zM1017 229h1v1h-1zM1017 241h1v1h-1zM1017 252h1v1h-1zM1017 264h1v1h-1zM1017 275h1v1h-1zM1017 288h1v1h-1zM1017 300h1v1h-1zM1017 311h1v1h-1zM1017 323h1v1h-1zM1017 334h1v1h-1zM1017 346h1v1h-1zM1017 358h1v1h-1zM1017 369h1v1h-1zM1017 381h1v1h-1zM1017 392h1v1h-1zM1017 405h1v1h-1zM1017 417h1v1h-1zM1017 428h1v1h-1zM1017 440h1v1h-1zM1017 451h1v1h-1zM1017 463h1v1h-1zM1017 475h1v1h-1zM1017 486h1v1h-1zM1017 498h1v1h-1zM1017 509h1v1h-1zM1017 522h1v1h-1zM1017 534h1v1h-1zM1017 545h1v1h-1zM1017 557h1v1h-1zM1017 568h1v1h-1zM1017 580h1v1h-1zM1017 592h1v1h-1zM1017 603h1v1h-1zM1017 615h1v1h-1zM1017 626h1v1h-1zM1017 639h1v1h-1zM1017 651h1v1h-1zM1017 662h1v1h-1zM1017 674h1v1h-1zM1017 685h1v1h-1zM1017 697h1v1h-1zM1017 709h1v1h-1zM1017 720h1v1h-1zM1017 732h1v1h-1zM1017 743h1v1h-1zM1017 756h1v1h-1zM1017 768h1v1h-1zM1017 779h1v1h-1zM1017 791h1v1h-1zM1017 802h1v1h-1zM1017 814h1v1h-1zM1017 826h1v1h-1zM1017 837h1v1h-1zM1017 849h1v1h-1zM1017 860h1v1h-1zM1017 873h1v1h-1zM1017 885h1v1h-1zM1017 897h1v1h-1zM1017 909h1v1h-1zM1017 921h1v1h-1zM1017 933h1v1h-1zM1017 944h1v1h-1zM1017 956h1v1h-1zM1017 968h1v1h-1zM1017 980h1v1h-1zM1052 54h1v1h-1zM1052 56h1v1h-1zM1052 59h1v1h-1zM1052 61h1v1h-1zM1052 63h1v1h-1zM1052 66h1v1h-1zM1052 68h1v1h-1zM1052 70h1v1h-1zM1052 73h1v1h-1zM1052 75h1v1h-1zM1052 77h1v1h-1zM1052 80h1v1h-1zM1052 82h1v1h-1zM1052 84h1v1h-1zM1052 86h1v1h-1zM1052 89h1v1h-1zM1052 91h1v1h-1zM1052 93h1v1h-1zM1052 96h1v1h-1zM1052 98h1v1h-1zM1052 100h1v1h-1zM1052 103h1v1h-1zM1052 105h1v1h-1zM1052 107h1v1h-1zM1052 110h1v1h-1zM1052 112h1v1h-1zM1052 114h1v1h-1zM1052 117h1v1h-1zM1052 119h1v1h-1zM1052 121h1v1h-1zM1052 124h1v1h-1zM1052 126h1v1h-1zM1052 128h1v1h-1zM1052 131h1v1h-1zM1052 133h1v1h-1zM1052 135h1v1h-1zM1052 138h1v1h-1zM1052 140h1v1h-1zM1052 142h1v1h-1zM1052 144h1v1h-1zM1052 147h1v1h-1zM1052 149h1v1h-1zM1052 151h1v1h-1zM1052 154h1v1h-1zM1052 156h1v1h-1zM1052 158h1v1h-1zM1052 161h1v1h-1zM1052 163h1v1h-1zM1052 165h1v1h-1zM1052 168h1v1h-1zM1052 171h1v1h-1zM1052 173h1v1h-1zM1052 176h1v1h-1zM1052 178h1v1h-1zM1052 180h1v1h-1zM1052 183h1v1h-1zM1052 185h1v1h-1zM1052 187h1v1h-1zM1052 190h1v1h-1zM1052 192h1v1h-1zM1052 194h1v1h-1zM1052 197h1v1h-1zM1052 199h1v1h-1zM1052 201h1v1h-1zM1052 203h1v1h-1zM1052 206h1v1h-1zM1052 208h1v1h-1zM1052 210h1v1h-1zM1052 213h1v1h-1zM1052 215h1v1h-1zM1052 217h1v1h-1zM1052 220h1v1h-1zM1052 222h1v1h-1zM1052 224h1v1h-1zM1052 227h1v1h-1zM1052 229h1v1h-1zM1052 231h1v1h-1zM1052 234h1v1h-1zM1052 236h1v1h-1zM1052 238h1v1h-1zM1052 241h1v1h-1zM1052 243h1v1h-1zM1052 245h1v1h-1zM1052 248h1v1h-1zM1052 250h1v1h-1zM1052 252h1v1h-1zM1052 255h1v1h-1zM1052 257h1v1h-1zM1052 259h1v1h-1zM1052 261h1v1h-1zM1052 264h1v1h-1zM1052 266h1v1h-1zM1052 268h1v1h-1zM1052 271h1v1h-1zM1052 273h1v1h-1zM1052 275h1v1h-1zM1052 278h1v1h-1zM1052 280h1v1h-1zM1052 282h1v1h-1zM1052 285h1v1h-1zM1052 288h1v1h-1zM1052 290h1v1h-1zM1052 293h1v1h-1zM1052 295h1v1h-1zM1052 297h1v1h-1zM1052 300h1v1h-1zM1052 302h1v1h-1zM1052 304h1v1h-1zM1052 307h1v1h-1zM1052 309h1v1h-1zM1052 311h1v1h-1zM1052 314h1v1h-1zM1052 316h1v1h-1zM1052 318h1v1h-1zM1052 320h1v1h-1zM1052 323h1v1h-1zM1052 325h1v1h-1zM1052 327h1v1h-1zM1052 330h1v1h-1zM1052 332h1v1h-1zM1052 334h1v1h-1zM1052 337h1v1h-1zM1052 339h1v1h-1zM1052 341h1v1h-1zM1052 344h1v1h-1zM1052 346h1v1h-1zM1052 348h1v1h-1zM1052 351h1v1h-1zM1052 353h1v1h-1zM1052 355h1v1h-1zM1052 358h1v1h-1zM1052 360h1v1h-1zM1052 362h1v1h-1zM1052 365h1v1h-1zM1052 367h1v1h-1zM1052 369h1v1h-1zM1052 372h1v1h-1zM1052 374h1v1h-1zM1052 376h1v1h-1zM1052 378h1v1h-1zM1052 381h1v1h-1zM1052 383h1v1h-1zM1052 385h1v1h-1zM1052 388h1v1h-1zM1052 390h1v1h-1zM1052 392h1v1h-1zM1052 395h1v1h-1zM1052 397h1v1h-1zM1052 399h1v1h-1zM1052 402h1v1h-1zM1052 405h1v1h-1zM1052 407h1v1h-1zM1052 410h1v1h-1zM1052 412h1v1h-1zM1052 414h1v1h-1zM1052 417h1v1h-1zM1052 419h1v1h-1zM1052 421h1v1h-1zM1052 424h1v1h-1zM1052 426h1v1h-1zM1052 428h1v1h-1zM1052 431h1v1h-1zM1052 433h1v1h-1zM1052 435h1v1h-1zM1052 437h1v1h-1zM1052 440h1v1h-1zM1052 442h1v1h-1zM1052 444h1v1h-1zM1052 447h1v1h-1zM1052 449h1v1h-1zM1052 451h1v1h-1zM1052 454h1v1h-1zM1052 456h1v1h-1zM1052 458h1v1h-1zM1052 461h1v1h-1zM1052 463h1v1h-1zM1052 465h1v1h-1zM1052 468h1v1h-1zM1052 470h1v1h-1zM1052 472h1v1h-1zM1052 475h1v1h-1zM1052 477h1v1h-1zM1052 479h1v1h-1zM1052 482h1v1h-1zM1052 484h1v1h-1zM1052 486h1v1h-1zM1052 489h1v1h-1zM1052 491h1v1h-1zM1052 493h1v1h-1zM1052 495h1v1h-1zM1052 498h1v1h-1zM1052 500h1v1h-1zM1052 502h1v1h-1zM1052 505h1v1h-1zM1052 507h1v1h-1zM1052 509h1v1h-1zM1052 512h1v1h-1zM1052 514h1v1h-1zM1052 516h1v1h-1zM1052 519h1v1h-1zM1052 522h1v1h-1zM1052 524h1v1h-1zM1052 527h1v1h-1zM1052 529h1v1h-1zM1052 531h1v1h-1zM1052 534h1v1h-1zM1052 536h1v1h-1zM1052 538h1v1h-1zM1052 541h1v1h-1zM1052 543h1v1h-1zM1052 545h1v1h-1zM1052 548h1v1h-1zM1052 550h1v1h-1zM1052 552h1v1h-1zM1052 554h1v1h-1zM1052 557h1v1h-1zM1052 559h1v1h-1zM1052 561h1v1h-1zM1052 564h1v1h-1zM1052 566h1v1h-1zM1052 568h1v1h-1zM1052 571h1v1h-1zM1052 573h1v1h-1zM1052 575h1v1h-1zM1052 578h1v1h-1zM1052 580h1v1h-1zM1052 582h1v1h-1zM1052 585h1v1h-1zM1052 587h1v1h-1zM1052 589h1v1h-1zM1052 592h1v1h-1zM1052 594h1v1h-1zM1052 596h1v1h-1zM1052 599h1v1h-1zM1052 601h1v1h-1zM1052 603h1v1h-1zM1052 606h1v1h-1zM1052 608h1v1h-1zM1052 610h1v1h-1zM1052 612h1v1h-1zM1052 615h1v1h-1zM1052 617h1v1h-1zM1052 619h1v1h-1zM1052 622h1v1h-1zM1052 624h1v1h-1zM1052 626h1v1h-1zM1052 629h1v1h-1zM1052 631h1v1h-1zM1052 633h1v1h-1zM1052 636h1v1h-1zM1052 639h1v1h-1zM1052 641h1v1h-1zM1052 644h1v1h-1zM1052 646h1v1h-1zM1052 648h1v1h-1zM1052 651h1v1h-1zM1052 653h1v1h-1zM1052 655h1v1h-1zM1052 658h1v1h-1zM1052 660h1v1h-1zM1052 662h1v1h-1zM1052 665h1v1h-1zM1052 667h1v1h-1zM1052 669h1v1h-1zM1052 671h1v1h-1zM1052 674h1v1h-1zM1052 676h1v1h-1zM1052 678h1v1h-1zM1052 681h1v1h-1zM1052 683h1v1h-1zM1052 685h1v1h-1zM1052 688h1v1h-1zM1052 690h1v1h-1zM1052 692h1v1h-1zM1052 695h1v1h-1zM1052 697h1v1h-1zM1052 699h1v1h-1zM1052 702h1v1h-1zM1052 704h1v1h-1zM1052 706h1v1h-1zM1052 709h1v1h-1zM1052 711h1v1h-1zM1052 713h1v1h-1zM1052 716h1v1h-1zM1052 718h1v1h-1zM1052 720h1v1h-1zM1052 723h1v1h-1zM1052 725h1v1h-1zM1052 727h1v1h-1zM1052 729h1v1h-1zM1052 732h1v1h-1zM1052 734h1v1h-1zM1052 736h1v1h-1zM1052 739h1v1h-1zM1052 741h1v1h-1zM1052 743h1v1h-1zM1052 746h1v1h-1zM1052 748h1v1h-1zM1052 750h1v1h-1zM1052 753h1v1h-1zM1052 756h1v1h-1zM1052 758h1v1h-1zM1052 761h1v1h-1zM1052 763h1v1h-1zM1052 765h1v1h-1zM1052 768h1v1h-1zM1052 770h1v1h-1zM1052 772h1v1h-1zM1052 775h1v1h-1zM1052 777h1v1h-1zM1052 779h1v1h-1zM1052 782h1v1h-1zM1052 784h1v1h-1zM1052 786h1v1h-1zM1052 788h1v1h-1zM1052 791h1v1h-1zM1052 793h1v1h-1zM1052 795h1v1h-1zM1052 798h1v1h-1zM1052 800h1v1h-1zM1052 802h1v1h-1zM1052 805h1v1h-1zM1052 807h1v1h-1zM1052 809h1v1h-1zM1052 812h1v1h-1zM1052 814h1v1h-1zM1052 816h1v1h-1zM1052 819h1v1h-1zM1052 821h1v1h-1zM1052 823h1v1h-1zM1052 826h1v1h-1zM1052 828h1v1h-1zM1052 830h1v1h-1zM1052 833h1v1h-1zM1052 835h1v1h-1zM1052 837h1v1h-1zM1052 840h1v1h-1zM1052 842h1v1h-1zM1052 844h1v1h-1zM1052 846h1v1h-1zM1052 849h1v1h-1zM1052 851h1v1h-1zM1052 853h1v1h-1zM1052 856h1v1h-1zM1052 858h1v1h-1zM1052 860h1v1h-1zM1052 863h1v1h-1zM1052 865h1v1h-1zM1052 867h1v1h-1zM1052 870h1v1h-1zM1052 873h1v1h-1zM1052 875h1v1h-1zM1052 878h1v1h-1zM1052 880h1v1h-1zM1052 883h1v1h-1zM1052 885h1v1h-1zM1052 887h1v1h-1zM1052 890h1v1h-1zM1052 892h1v1h-1zM1052 894h1v1h-1zM1052 897h1v1h-1zM1052 899h1v1h-1zM1052 902h1v1h-1zM1052 904h1v1h-1zM1052 906h1v1h-1zM1052 909h1v1h-1zM1052 911h1v1h-1zM1052 913h1v1h-1zM1052 916h1v1h-1zM1052 918h1v1h-1zM1052 921h1v1h-1zM1052 923h1v1h-1zM1052 925h1v1h-1zM1052 928h1v1h-1zM1052 930h1v1h-1zM1052 933h1v1h-1zM1052 935h1v1h-1zM1052 937h1v1h-1zM1052 940h1v1h-1zM1052 942h1v1h-1zM1052 944h1v1h-1zM1052 947h1v1h-1zM1052 949h1v1h-1zM1052 952h1v1h-1zM1052 954h1v1h-1zM1052 956h1v1h-1zM1052 959h1v1h-1zM1052 961h1v1h-1zM1052 963h1v1h-1zM1052 966h1v1h-1zM1052 968h1v1h-1zM1052 971h1v1h-1zM1052 973h1v1h-1zM1052 975h1v1h-1zM1052 978h1v1h-1zM1052 980h1v1h-1zM1052 982h1v1h-1zM1052 985h1v1h-1zM1052 987h1v1h-1zM1052 990h1v1h-1zM1087 54h1v1h-1zM1087 66h1v1h-1zM1087 77h1v1h-1zM1087 89h1v1h-1zM1087 100h1v1h-1zM1087 112h1v1h-1zM1087 124h1v1h-1zM1087 135h1v1h-1zM1087 147h1v1h-1zM1087 158h1v1h-1zM1087 171h1v1h-1zM1087 183h1v1h-1zM1087 194h1v1h-1zM1087 206h1v1h-1zM1087 217h1v1h-1zM1087 229h1v1h-1zM1087 241h1v1h-1zM1087 252h1v1h-1zM1087 264h1v1h-1zM1087 275h1v1h-1zM1087 288h1v1h-1zM1087 300h1v1h-1zM1087 311h1v1h-1zM1087 323h1v1h-1zM1087 334h1v1h-1zM1087 346h1v1h-1zM1087 358h1v1h-1zM1087 369h1v1h-1zM1087 381h1v1h-1zM1087 392h1v1h-1zM1087 405h1v1h-1zM1087 417h1v1h-1zM1087 428h1v1h-1zM1087 440h1v1h-1zM1087 451h1v1h-1zM1087 463h1v1h-1zM1087 475h1v1h-1zM1087 486h1v1h-1zM1087 498h1v1h-1zM1087 509h1v1h-1zM1087 522h1v1h-1zM1087 534h1v1h-1zM1087 545h1v1h-1zM1087 557h1v1h-1zM1087 568h1v1h-1zM1087 580h1v1h-1zM1087 592h1v1h-1zM1087 603h1v1h-1zM1087 615h1v1h-1zM1087 626h1v1h-1zM1087 639h1v1h-1zM1087 651h1v1h-1zM1087 662h1v1h-1zM1087 674h1v1h-1zM1087 685h1v1h-1zM1087 697h1v1h-1zM1087 709h1v1h-1zM1087 720h1v1h-1zM1087 732h1v1h-1zM1087 743h1v1h-1zM1087 756h1v1h-1zM1087 768h1v1h-1zM1087 779h1v1h-1zM1087 791h1v1h-1zM1087 802h1v1h-1zM1087 814h1v1h-1zM1087 826h1v1h-1zM1087 837h1v1h-1zM1087 849h1v1h-1zM1087 860h1v1h-1zM1087 873h1v1h-1zM1087 885h1v1h-1zM1087 897h1v1h-1zM1087 909h1v1h-1zM1087 921h1v1h-1zM1087 933h1v1h-1zM1087 944h1v1h-1zM1087 956h1v1h-1zM1087 968h1v1h-1zM1087 980h1v1h-1zM1122 54h1v1h-1zM1122 66h1v1h-1zM1122 77h1v1h-1zM1122 89h1v1h-1zM1122 100h1v1h-1zM1122 112h1v1h-1zM1122 124h1v1h-1zM1122 135h1v1h-1zM1122 147h1v1h-1zM1122 158h1v1h-1zM1122 171h1v1h-1zM1122 183h1v1h-1zM1122 194h1v1h-1zM1122 206h1v1h-1zM1122 217h1v1h-1zM1122 229h1v1h-1zM1122 241h1v1h-1zM1122 252h1v1h-1zM1122 264h1v1h-1zM1122 275h1v1h-1zM1122 288h1v1h-1zM1122 300h1v1h-1zM1122 311h1v1h-1zM1122 323h1v1h-1zM1122 334h1v1h-1zM1122 346h1v1h-1zM1122 358h1v1h-1zM1122 369h1v1h-1zM1122 381h1v1h-1zM1122 392h1v1h-1zM1122 405h1v1h-1zM1122 417h1v1h-1zM1122 428h1v1h-1zM1122 440h1v1h-1zM1122 451h1v1h-1zM1122 463h1v1h-1zM1122 475h1v1h-1zM1122 486h1v1h-1zM1122 498h1v1h-1zM1122 509h1v1h-1zM1122 522h1v1h-1zM1122 534h1v1h-1zM1122 545h1v1h-1zM1122 557h1v1h-1zM1122 568h1v1h-1zM1122 580h1v1h-1zM1122 592h1v1h-1zM1122 603h1v1h-1zM1122 615h1v1h-1zM1122 626h1v1h-1zM1122 639h1v1h-1zM1122 651h1v1h-1zM1122 662h1v1h-1zM1122 674h1v1h-1zM1122 685h1v1h-1zM1122 697h1v1h-1zM1122 709h1v1h-1zM1122 720h1v1h-1zM1122 732h1v1h-1zM1122 743h1v1h-1zM1122 756h1v1h-1zM1122 768h1v1h-1zM1122 779h1v1h-1zM1122 791h1v1h-1zM1122 802h1v1h-1zM1122 814h1v1h-1zM1122 826h1v1h-1zM1122 837h1v1h-1zM1122 849h1v1h-1zM1122 860h1v1h-1zM1122 873h1v1h-1zM1122 885h1v1h-1zM1122 897h1v1h-1zM1122 909h1v1h-1zM1122 921h1v1h-1zM1122 933h1v1h-1zM1122 944h1v1h-1zM1122 956h1v1h-1zM1122 968h1v1h-1zM1122 980h1v1h-1zM1157 54h1v1h-1zM1157 66h1v1h-1zM1157 77h1v1h-1zM1157 89h1v1h-1zM1157 100h1v1h-1zM1157 112h1v1h-1zM1157 124h1v1h-1zM1157 135h1v1h-1zM1157 147h1v1h-1zM1157 158h1v1h-1zM1157 171h1v1h-1zM1157 183h1v1h-1zM1157 194h1v1h-1zM1157 206h1v1h-1zM1157 217h1v1h-1zM1157 229h1v1h-1zM1157 241h1v1h-1zM1157 252h1v1h-1zM1157 264h1v1h-1zM1157 275h1v1h-1zM1157 288h1v1h-1zM1157 300h1v1h-1zM1157 311h1v1h-1zM1157 323h1v1h-1zM1157 334h1v1h-1zM1157 346h1v1h-1zM1157 358h1v1h-1zM1157 369h1v1h-1zM1157 381h1v1h-1zM1157 392h1v1h-1zM1157 405h1v1h-1zM1157 417h1v1h-1zM1157 428h1v1h-1zM1157 440h1v1h-1zM1157 451h1v1h-1zM1157 463h1v1h-1zM1157 475h1v1h-1zM1157 486h1v1h-1zM1157 498h1v1h-1zM1157 509h1v1h-1zM1157 522h1v1h-1zM1157 534h1v1h-1zM1157 545h1v1h-1zM1157 557h1v1h-1zM1157 568h1v1h-1zM1157 580h1v1h-1zM1157 592h1v1h-1zM1157 603h1v1h-1zM1157 615h1v1h-1zM1157 626h1v1h-1zM1157 639h1v1h-1zM1157 651h1v1h-1zM1157 662h1v1h-1zM1157 674h1v1h-1zM1157 685h1v1h-1zM1157 697h1v1h-1zM1157 709h1v1h-1zM1157 720h1v1h-1zM1157 732h1v1h-1zM1157 743h1v1h-1zM1157 756h1v1h-1zM1157 768h1v1h-1zM1157 779h1v1h-1zM1157 791h1v1h-1zM1157 802h1v1h-1zM1157 814h1v1h-1zM1157 826h1v1h-1zM1157 837h1v1h-1zM1157 849h1v1h-1zM1157 860h1v1h-1zM1157 873h1v1h-1zM1157 885h1v1h-1zM1157 897h1v1h-1zM1157 909h1v1h-1zM1157 921h1v1h-1zM1157 933h1v1h-1zM1157 944h1v1h-1zM1157 956h1v1h-1zM1157 968h1v1h-1zM1157 980h1v1h-1zM1192 54h1v1h-1zM1192 66h1v1h-1zM1192 77h1v1h-1zM1192 89h1v1h-1zM1192 100h1v1h-1zM1192 112h1v1h-1zM1192 124h1v1h-1zM1192 135h1v1h-1zM1192 147h1v1h-1zM1192 158h1v1h-1zM1192 171h1v1h-1zM1192 183h1v1h-1zM1192 194h1v1h-1zM1192 206h1v1h-1zM1192 217h1v1h-1zM1192 229h1v1h-1zM1192 241h1v1h-1zM1192 252h1v1h-1zM1192 264h1v1h-1zM1192 275h1v1h-1zM1192 288h1v1h-1zM1192 300h1v1h-1zM1192 311h1v1h-1zM1192 323h1v1h-1zM1192 334h1v1h-1zM1192 346h1v1h-1zM1192 358h1v1h-1zM1192 369h1v1h-1zM1192 381h1v1h-1zM1192 392h1v1h-1zM1192 405h1v1h-1zM1192 417h1v1h-1zM1192 428h1v1h-1zM1192 440h1v1h-1zM1192 451h1v1h-1zM1192 463h1v1h-1zM1192 475h1v1h-1zM1192 486h1v1h-1zM1192 498h1v1h-1zM1192 509h1v1h-1zM1192 522h1v1h-1zM1192 534h1v1h-1zM1192 545h1v1h-1zM1192 557h1v1h-1zM1192 568h1v1h-1zM1192 580h1v1h-1zM1192 592h1v1h-1zM1192 603h1v1h-1zM1192 615h1v1h-1zM1192 626h1v1h-1zM1192 639h1v1h-1zM1192 651h1v1h-1zM1192 662h1v1h-1zM1192 674h1v1h-1zM1192 685h1v1h-1zM1192 697h1v1h-1zM1192 709h1v1h-1zM1192 720h1v1h-1zM1192 732h1v1h-1zM1192 743h1v1h-1zM1192 756h1v1h-1zM1192 768h1v1h-1zM1192 779h1v1h-1zM1192 791h1v1h-1zM1192 802h1v1h-1zM1192 814h1v1h-1zM1192 826h1v1h-1zM1192 837h1v1h-1zM1192 849h1v1h-1zM1192 860h1v1h-1zM1192 873h1v1h-1zM1192 885h1v1h-1zM1192 897h1v1h-1zM1192 909h1v1h-1zM1192 921h1v1h-1zM1192 933h1v1h-1zM1192 944h1v1h-1zM1192 956h1v1h-1zM1192 968h1v1h-1zM1192 980h1v1h-1zM1227 54h1v1h-1zM1227 56h1v1h-1zM1227 59h1v1h-1zM1227 61h1v1h-1zM1227 63h1v1h-1zM1227 66h1v1h-1zM1227 68h1v1h-1zM1227 70h1v1h-1zM1227 73h1v1h-1zM1227 75h1v1h-1zM1227 77h1v1h-1zM1227 80h1v1h-1zM1227 82h1v1h-1zM1227 84h1v1h-1zM1227 86h1v1h-1zM1227 89h1v1h-1zM1227 91h1v1h-1zM1227 93h1v1h-1zM1227 96h1v1h-1zM1227 98h1v1h-1zM1227 100h1v1h-1zM1227 103h1v1h-1zM1227 105h1v1h-1zM1227 107h1v1h-1zM1227 110h1v1h-1zM1227 112h1v1h-1zM1227 114h1v1h-1zM1227 117h1v1h-1zM1227 119h1v1h-1zM1227 121h1v1h-1zM1227 124h1v1h-1zM1227 126h1v1h-1zM1227 128h1v1h-1zM1227 131h1v1h-1zM1227 133h1v1h-1zM1227 135h1v1h-1zM1227 138h1v1h-1zM1227 140h1v1h-1zM1227 142h1v1h-1zM1227 144h1v1h-1zM1227 147h1v1h-1zM1227 149h1v1h-1zM1227 151h1v1h-1zM1227 154h1v1h-1zM1227 156h1v1h-1zM1227 158h1v1h-1zM1227 161h1v1h-1zM1227 163h1v1h-1zM1227 165h1v1h-1zM1227 168h1v1h-1zM1227 171h1v1h-1zM1227 173h1v1h-1zM1227 176h1v1h-1zM1227 178h1v1h-1zM1227 180h1v1h-1zM1227 183h1v1h-1zM1227 185h1v1h-1zM1227 187h1v1h-1zM1227 190h1v1h-1zM1227 192h1v1h-1zM1227 194h1v1h-1zM1227 197h1v1h-1zM1227 199h1v1h-1zM1227 201h1v1h-1zM1227 203h1v1h-1zM1227 206h1v1h-1zM1227 208h1v1h-1zM1227 210h1v1h-1zM1227 213h1v1h-1zM1227 215h1v1h-1zM1227 217h1v1h-1zM1227 220h1v1h-1zM1227 222h1v1h-1zM1227 224h1v1h-1zM1227 227h1v1h-1zM1227 229h1v1h-1zM1227 231h1v1h-1zM1227 234h1v1h-1zM1227 236h1v1h-1zM1227 238h1v1h-1zM1227 241h1v1h-1zM1227 243h1v1h-1zM1227 245h1v1h-1zM1227 248h1v1h-1zM1227 250h1v1h-1zM1227 252h1v1h-1zM1227 255h1v1h-1zM1227 257h1v1h-1zM1227 259h1v1h-1zM1227 261h1v1h-1zM1227 264h1v1h-1zM1227 266h1v1h-1zM1227 268h1v1h-1zM1227 271h1v1h-1zM1227 273h1v1h-1zM1227 275h1v1h-1zM1227 278h1v1h-1zM1227 280h1v1h-1zM1227 282h1v1h-1zM1227 285h1v1h-1zM1227 288h1v1h-1zM1227 290h1v1h-1zM1227 293h1v1h-1zM1227 295h1v1h-1zM1227 297h1v1h-1zM1227 300h1v1h-1zM1227 302h1v1h-1zM1227 304h1v1h-1zM1227 307h1v1h-1zM1227 309h1v1h-1zM1227 311h1v1h-1zM1227 314h1v1h-1zM1227 316h1v1h-1zM1227 318h1v1h-1zM1227 320h1v1h-1zM1227 323h1v1h-1zM1227 325h1v1h-1zM1227 327h1v1h-1zM1227 330h1v1h-1zM1227 332h1v1h-1zM1227 334h1v1h-1zM1227 337h1v1h-1zM1227 339h1v1h-1zM1227 341h1v1h-1zM1227 344h1v1h-1zM1227 346h1v1h-1zM1227 348h1v1h-1zM1227 351h1v1h-1zM1227 353h1v1h-1zM1227 355h1v1h-1zM1227 358h1v1h-1zM1227 360h1v1h-1zM1227 362h1v1h-1zM1227 365h1v1h-1zM1227 367h1v1h-1zM1227 369h1v1h-1zM1227 372h1v1h-1zM1227 374h1v1h-1zM1227 376h1v1h-1zM1227 378h1v1h-1zM1227 381h1v1h-1zM1227 383h1v1h-1zM1227 385h1v1h-1zM1227 388h1v1h-1zM1227 390h1v1h-1zM1227 392h1v1h-1zM1227 395h1v1h-1zM1227 397h1v1h-1zM1227 399h1v1h-1zM1227 402h1v1h-1zM1227 405h1v1h-1zM1227 407h1v1h-1zM1227 410h1v1h-1zM1227 412h1v1h-1zM1227 414h1v1h-1zM1227 417h1v1h-1zM1227 419h1v1h-1zM1227 421h1v1h-1zM1227 424h1v1h-1zM1227 426h1v1h-1zM1227 428h1v1h-1zM1227 431h1v1h-1zM1227 433h1v1h-1zM1227 435h1v1h-1zM1227 437h1v1h-1zM1227 440h1v1h-1zM1227 442h1v1h-1zM1227 444h1v1h-1zM1227 447h1v1h-1zM1227 449h1v1h-1zM1227 451h1v1h-1zM1227 454h1v1h-1zM1227 456h1v1h-1zM1227 458h1v1h-1zM1227 461h1v1h-1zM1227 463h1v1h-1zM1227 465h1v1h-1zM1227 468h1v1h-1zM1227 470h1v1h-1zM1227 472h1v1h-1zM1227 475h1v1h-1zM1227 477h1v1h-1zM1227 479h1v1h-1zM1227 482h1v1h-1zM1227 484h1v1h-1zM1227 486h1v1h-1zM1227 489h1v1h-1zM1227 491h1v1h-1zM1227 493h1v1h-1zM1227 495h1v1h-1zM1227 498h1v1h-1zM1227 500h1v1h-1zM1227 502h1v1h-1zM1227 505h1v1h-1zM1227 507h1v1h-1zM1227 509h1v1h-1zM1227 512h1v1h-1zM1227 514h1v1h-1zM1227 516h1v1h-1zM1227 519h1v1h-1zM1227 522h1v1h-1zM1227 524h1v1h-1zM1227 527h1v1h-1zM1227 529h1v1h-1zM1227 531h1v1h-1zM1227 534h1v1h-1zM1227 536h1v1h-1zM1227 538h1v1h-1zM1227 541h1v1h-1zM1227 543h1v1h-1zM1227 545h1v1h-1zM1227 548h1v1h-1zM1227 550h1v1h-1zM1227 552h1v1h-1zM1227 554h1v1h-1zM1227 557h1v1h-1zM1227 559h1v1h-1zM1227 561h1v1h-1zM1227 564h1v1h-1zM1227 566h1v1h-1zM1227 568h1v1h-1zM1227 571h1v1h-1zM1227 573h1v1h-1zM1227 575h1v1h-1zM1227 578h1v1h-1zM1227 580h1v1h-1zM1227 582h1v1h-1zM1227 585h1v1h-1zM1227 587h1v1h-1zM1227 589h1v1h-1zM1227 592h1v1h-1zM1227 594h1v1h-1zM1227 596h1v1h-1zM1227 599h1v1h-1zM1227 601h1v1h-1zM1227 603h1v1h-1zM1227 606h1v1h-1zM1227 608h1v1h-1zM1227 610h1v1h-1zM1227 612h1v1h-1zM1227 615h1v1h-1zM1227 617h1v1h-1zM1227 619h1v1h-1zM1227 622h1v1h-1zM1227 624h1v1h-1zM1227 626h1v1h-1zM1227 629h1v1h-1zM1227 631h1v1h-1zM1227 633h1v1h-1zM1227 636h1v1h-1zM1227 639h1v1h-1zM1227 641h1v1h-1zM1227 644h1v1h-1zM1227 646h1v1h-1zM1227 648h1v1h-1zM1227 651h1v1h-1zM1227 653h1v1h-1zM1227 655h1v1h-1zM1227 658h1v1h-1zM1227 660h1v1h-1zM1227 662h1v1h-1zM1227 665h1v1h-1zM1227 667h1v1h-1zM1227 669h1v1h-1zM1227 671h1v1h-1zM1227 674h1v1h-1zM1227 676h1v1h-1zM1227 678h1v1h-1zM1227 681h1v1h-1zM1227 683h1v1h-1zM1227 685h1v1h-1zM1227 688h1v1h-1zM1227 690h1v1h-1zM1227 692h1v1h-1zM1227 695h1v1h-1zM1227 697h1v1h-1zM1227 699h1v1h-1zM1227 702h1v1h-1zM1227 704h1v1h-1zM1227 706h1v1h-1zM1227 709h1v1h-1zM1227 711h1v1h-1zM1227 713h1v1h-1zM1227 716h1v1h-1zM1227 718h1v1h-1zM1227 720h1v1h-1zM1227 723h1v1h-1zM1227 725h1v1h-1zM1227 727h1v1h-1zM1227 729h1v1h-1zM1227 732h1v1h-1zM1227 734h1v1h-1zM1227 736h1v1h-1zM1227 739h1v1h-1zM1227 741h1v1h-1zM1227 743h1v1h-1zM1227 746h1v1h-1zM1227 748h1v1h-1zM1227 750h1v1h-1zM1227 753h1v1h-1zM1227 756h1v1h-1zM1227 758h1v1h-1zM1227 761h1v1h-1zM1227 763h1v1h-1zM1227 765h1v1h-1zM1227 768h1v1h-1zM1227 770h1v1h-1zM1227 772h1v1h-1zM1227 775h1v1h-1zM1227 777h1v1h-1zM1227 779h1v1h-1zM1227 782h1v1h-1zM1227 784h1v1h-1zM1227 786h1v1h-1zM1227 788h1v1h-1zM1227 791h1v1h-1zM1227 793h1v1h-1zM1227 795h1v1h-1zM1227 798h1v1h-1zM1227 800h1v1h-1zM1227 802h1v1h-1zM1227 805h1v1h-1zM1227 807h1v1h-1zM1227 809h1v1h-1zM1227 812h1v1h-1zM1227 814h1v1h-1zM1227 816h1v1h-1zM1227 819h1v1h-1zM1227 821h1v1h-1zM1227 823h1v1h-1zM1227 826h1v1h-1zM1227 828h1v1h-1zM1227 830h1v1h-1zM1227 833h1v1h-1zM1227 835h1v1h-1zM1227 837h1v1h-1zM1227 840h1v1h-1zM1227 842h1v1h-1zM1227 844h1v1h-1zM1227 846h1v1h-1zM1227 849h1v1h-1zM1227 851h1v1h-1zM1227 853h1v1h-1zM1227 856h1v1h-1zM1227 858h1v1h-1zM1227 860h1v1h-1zM1227 863h1v1h-1zM1227 865h1v1h-1zM1227 867h1v1h-1zM1227 870h1v1h-1zM1227 873h1v1h-1zM1227 875h1v1h-1zM1227 878h1v1h-1zM1227 880h1v1h-1zM1227 883h1v1h-1zM1227 885h1v1h-1zM1227 887h1v1h-1zM1227 890h1v1h-1zM1227 892h1v1h-1zM1227 894h1v1h-1zM1227 897h1v1h-1zM1227 899h1v1h-1zM1227 902h1v1h-1zM1227 904h1v1h-1zM1227 906h1v1h-1zM1227 909h1v1h-1zM1227 911h1v1h-1zM1227 913h1v1h-1zM1227 916h1v1h-1zM1227 918h1v1h-1zM1227 921h1v1h-1zM1227 923h1v1h-1zM1227 925h1v1h-1zM1227 928h1v1h-1zM1227 930h1v1h-1zM1227 933h1v1h-1zM1227 935h1v1h-1zM1227 937h1v1h-1zM1227 940h1v1h-1zM1227 942h1v1h-1zM1227 944h1v1h-1zM1227 947h1v1h-1zM1227 949h1v1h-1zM1227 952h1v1h-1zM1227 954h1v1h-1zM1227 956h1v1h-1zM1227 959h1v1h-1zM1227 961h1v1h-1zM1227 963h1v1h-1zM1227 966h1v1h-1zM1227 968h1v1h-1zM1227 971h1v1h-1zM1227 973h1v1h-1zM1227 975h1v1h-1zM1227 978h1v1h-1zM1227 980h1v1h-1zM1227 982h1v1h-1zM1227 985h1v1h-1zM1227 987h1v1h-1zM1227 990h1v1h-1zM1262 54h1v1h-1zM1262 66h1v1h-1zM1262 77h1v1h-1zM1262 89h1v1h-1zM1262 100h1v1h-1zM1262 112h1v1h-1zM1262 124h1v1h-1zM1262 135h1v1h-1zM1262 147h1v1h-1zM1262 158h1v1h-1zM1262 171h1v1h-1zM1262 183h1v1h-1zM1262 194h1v1h-1zM1262 206h1v1h-1zM1262 217h1v1h-1zM1262 229h1v1h-1zM1262 241h1v1h-1zM1262 252h1v1h-1zM1262 264h1v1h-1zM1262 275h1v1h-1zM1262 288h1v1h-1zM1262 300h1v1h-1zM1262 311h1v1h-1zM1262 323h1v1h-1zM1262 334h1v1h-1zM1262 346h1v1h-1zM1262 358h1v1h-1zM1262 369h1v1h-1zM1262 381h1v1h-1zM1262 392h1v1h-1zM1262 405h1v1h-1zM1262 417h1v1h-1zM1262 428h1v1h-1zM1262 440h1v1h-1zM1262 451h1v1h-1zM1262 463h1v1h-1zM1262 475h1v1h-1zM1262 486h1v1h-1zM1262 498h1v1h-1zM1262 509h1v1h-1zM1262 522h1v1h-1zM1262 534h1v1h-1zM1262 545h1v1h-1zM1262 557h1v1h-1zM1262 568h1v1h-1zM1262 580h1v1h-1zM1262 592h1v1h-1zM1262 603h1v1h-1zM1262 615h1v1h-1zM1262 626h1v1h-1zM1262 639h1v1h-1zM1262 651h1v1h-1zM1262 662h1v1h-1zM1262 674h1v1h-1zM1262 685h1v1h-1zM1262 697h1v1h-1zM1262 709h1v1h-1zM1262 720h1v1h-1zM1262 732h1v1h-1zM1262 743h1v1h-1zM1262 756h1v1h-1zM1262 768h1v1h-1zM1262 779h1v1h-1zM1262 791h1v1h-1zM1262 802h1v1h-1zM1262 814h1v1h-1zM1262 826h1v1h-1zM1262 837h1v1h-1zM1262 849h1v1h-1zM1262 860h1v1h-1zM1262 873h1v1h-1zM1262 885h1v1h-1zM1262 897h1v1h-1zM1262 909h1v1h-1zM1262 921h1v1h-1zM1262 933h1v1h-1zM1262 944h1v1h-1zM1262 956h1v1h-1zM1262 968h1v1h-1zM1262 980h1v1h-1zM1297 54h1v1h-1zM1297 66h1v1h-1zM1297 77h1v1h-1zM1297 89h1v1h-1zM1297 100h1v1h-1zM1297 112h1v1h-1zM1297 124h1v1h-1zM1297 135h1v1h-1zM1297 147h1v1h-1zM1297 158h1v1h-1zM1297 171h1v1h-1zM1297 183h1v1h-1zM1297 194h1v1h-1zM1297 206h1v1h-1zM1297 217h1v1h-1zM1297 229h1v1h-1zM1297 241h1v1h-1zM1297 252h1v1h-1zM1297 264h1v1h-1zM1297 275h1v1h-1zM1297 288h1v1h-1zM1297 300h1v1h-1zM1297 311h1v1h-1zM1297 323h1v1h-1zM1297 334h1v1h-1zM1297 346h1v1h-1zM1297 358h1v1h-1zM1297 369h1v1h-1zM1297 381h1v1h-1zM1297 392h1v1h-1zM1297 405h1v1h-1zM1297 417h1v1h-1zM1297 428h1v1h-1zM1297 440h1v1h-1zM1297 451h1v1h-1zM1297 463h1v1h-1zM1297 475h1v1h-1zM1297 486h1v1h-1zM1297 498h1v1h-1zM1297 509h1v1h-1zM1297 522h1v1h-1zM1297 534h1v1h-1zM1297 545h1v1h-1zM1297 557h1v1h-1zM1297 568h1v1h-1zM1297 580h1v1h-1zM1297 592h1v1h-1zM1297 603h1v1h-1zM1297 615h1v1h-1zM1297 626h1v1h-1zM1297 639h1v1h-1zM1297 651h1v1h-1zM1297 662h1v1h-1zM1297 674h1v1h-1zM1297 685h1v1h-1zM1297 697h1v1h-1zM1297 709h1v1h-1zM1297 720h1v1h-1zM1297 732h1v1h-1zM1297 743h1v1h-1zM1297 756h1v1h-1zM1297 768h1v1h-1zM1297 779h1v1h-1zM1297 791h1v1h-1zM1297 802h1v1h-1zM1297 814h1v1h-1zM1297 826h1v1h-1zM1297 837h1v1h-1zM1297 849h1v1h-1zM1297 860h1v1h-1zM1297 873h1v1h-1zM1297 885h1v1h-1zM1297 897h1v1h-1zM1297 909h1v1h-1zM1297 921h1v1h-1zM1297 933h1v1h-1zM1297 944h1v1h-1zM1297 956h1v1h-1zM1297 968h1v1h-1zM1297 980h1v1h-1zM1332 54h1v1h-1zM1332 66h1v1h-1zM1332 77h1v1h-1zM1332 89h1v1h-1zM1332 100h1v1h-1zM1332 112h1v1h-1zM1332 124h1v1h-1zM1332 135h1v1h-1zM1332 147h1v1h-1zM1332 158h1v1h-1zM1332 171h1v1h-1zM1332 183h1v1h-1zM1332 194h1v1h-1zM1332 206h1v1h-1zM1332 217h1v1h-1zM1332 229h1v1h-1zM1332 241h1v1h-1zM1332 252h1v1h-1zM1332 264h1v1h-1zM1332 275h1v1h-1zM1332 288h1v1h-1zM1332 300h1v1h-1zM1332 311h1v1h-1zM1332 323h1v1h-1zM1332 334h1v1h-1zM1332 346h1v1h-1zM1332 358h1v1h-1zM1332 369h1v1h-1zM1332 381h1v1h-1zM1332 392h1v1h-1zM1332 405h1v1h-1zM1332 417h1v1h-1zM1332 428h1v1h-1zM1332 440h1v1h-1zM1332 451h1v1h-1zM1332 463h1v1h-1zM1332 475h1v1h-1zM1332 486h1v1h-1zM1332 498h1v1h-1zM1332 509h1v1h-1zM1332 522h1v1h-1zM1332 534h1v1h-1zM1332 545h1v1h-1zM1332 557h1v1h-1zM1332 568h1v1h-1zM1332 580h1v1h-1zM1332 592h1v1h-1zM1332 603h1v1h-1zM1332 615h1v1h-1zM1332 626h1v1h-1zM1332 639h1v1h-1zM1332 651h1v1h-1zM1332 662h1v1h-1zM1332 674h1v1h-1zM1332 685h1v1h-1zM1332 697h1v1h-1zM1332 709h1v1h-1zM1332 720h1v1h-1zM1332 732h1v1h-1zM1332 743h1v1h-1zM1332 756h1v1h-1zM1332 768h1v1h-1zM1332 779h1v1h-1zM1332 791h1v1h-1zM1332 802h1v1h-1zM1332 814h1v1h-1zM1332 826h1v1h-1zM1332 837h1v1h-1zM1332 849h1v1h-1zM1332 860h1v1h-1zM1332 873h1v1h-1zM1332 885h1v1h-1zM1332 897h1v1h-1zM1332 909h1v1h-1zM1332 921h1v1h-1zM1332 933h1v1h-1zM1332 944h1v1h-1zM1332 956h1v1h-1zM1332 968h1v1h-1zM1332 980h1v1h-1zM1366 54h1v1h-1zM1366 66h1v1h-1zM1366 77h1v1h-1zM1366 89h1v1h-1zM1366 100h1v1h-1zM1366 112h1v1h-1zM1366 124h1v1h-1zM1366 135h1v1h-1zM1366 147h1v1h-1zM1366 158h1v1h-1zM1366 171h1v1h-1zM1366 183h1v1h-1zM1366 194h1v1h-1zM1366 206h1v1h-1zM1366 217h1v1h-1zM1366 229h1v1h-1zM1366 241h1v1h-1zM1366 252h1v1h-1zM1366 264h1v1h-1zM1366 275h1v1h-1zM1366 288h1v1h-1zM1366 300h1v1h-1zM1366 311h1v1h-1zM1366 323h1v1h-1zM1366 334h1v1h-1zM1366 346h1v1h-1zM1366 358h1v1h-1zM1366 369h1v1h-1zM1366 381h1v1h-1zM1366 392h1v1h-1zM1366 405h1v1h-1zM1366 417h1v1h-1zM1366 428h1v1h-1zM1366 440h1v1h-1zM1366 451h1v1h-1zM1366 463h1v1h-1zM1366 475h1v1h-1zM1366 486h1v1h-1zM1366 498h1v1h-1zM1366 509h1v1h-1zM1366 522h1v1h-1zM1366 534h1v1h-1zM1366 545h1v1h-1zM1366 557h1v1h-1zM1366 568h1v1h-1zM1366 580h1v1h-1zM1366 592h1v1h-1zM1366 603h1v1h-1zM1366 615h1v1h-1zM1366 626h1v1h-1zM1366 639h1v1h-1zM1366 651h1v1h-1zM1366 662h1v1h-1zM1366 674h1v1h-1zM1366 685h1v1h-1zM1366 697h1v1h-1zM1366 709h1v1h-1zM1366 720h1v1h-1zM1366 732h1v1h-1zM1366 743h1v1h-1zM1366 756h1v1h-1zM1366 768h1v1h-1zM1366 779h1v1h-1zM1366 791h1v1h-1zM1366 802h1v1h-1zM1366 814h1v1h-1zM1366 826h1v1h-1zM1366 837h1v1h-1zM1366 849h1v1h-1zM1366 860h1v1h-1zM1366 873h1v1h-1zM1366 885h1v1h-1zM1366 897h1v1h-1zM1366 909h1v1h-1zM1366 921h1v1h-1zM1366 933h1v1h-1zM1366 944h1v1h-1zM1366 956h1v1h-1zM1366 968h1v1h-1zM1366 980h1v1h-1zM1401 54h1v1h-1zM1401 56h1v1h-1zM1401 59h1v1h-1zM1401 61h1v1h-1zM1401 63h1v1h-1zM1401 66h1v1h-1zM1401 68h1v1h-1zM1401 70h1v1h-1zM1401 73h1v1h-1zM1401 75h1v1h-1zM1401 77h1v1h-1zM1401 80h1v1h-1zM1401 82h1v1h-1zM1401 84h1v1h-1zM1401 86h1v1h-1zM1401 89h1v1h-1zM1401 91h1v1h-1zM1401 93h1v1h-1zM1401 96h1v1h-1zM1401 98h1v1h-1zM1401 100h1v1h-1zM1401 103h1v1h-1zM1401 105h1v1h-1zM1401 107h1v1h-1zM1401 110h1v1h-1zM1401 112h1v1h-1zM1401 114h1v1h-1zM1401 117h1v1h-1zM1401 119h1v1h-1zM1401 121h1v1h-1zM1401 124h1v1h-1zM1401 126h1v1h-1zM1401 128h1v1h-1zM1401 131h1v1h-1zM1401 133h1v1h-1zM1401 135h1v1h-1zM1401 138h1v1h-1zM1401 140h1v1h-1zM1401 142h1v1h-1zM1401 144h1v1h-1zM1401 147h1v1h-1zM1401 149h1v1h-1zM1401 151h1v1h-1zM1401 154h1v1h-1zM1401 156h1v1h-1zM1401 158h1v1h-1zM1401 161h1v1h-1zM1401 163h1v1h-1zM1401 165h1v1h-1zM1401 168h1v1h-1zM1401 171h1v1h-1zM1401 173h1v1h-1zM1401 176h1v1h-1zM1401 178h1v1h-1zM1401 180h1v1h-1zM1401 183h1v1h-1zM1401 185h1v1h-1zM1401 187h1v1h-1zM1401 190h1v1h-1zM1401 192h1v1h-1zM1401 194h1v1h-1zM1401 197h1v1h-1zM1401 199h1v1h-1zM1401 201h1v1h-1zM1401 203h1v1h-1zM1401 206h1v1h-1zM1401 208h1v1h-1zM1401 210h1v1h-1zM1401 213h1v1h-1zM1401 215h1v1h-1zM1401 217h1v1h-1zM1401 220h1v1h-1zM1401 222h1v1h-1zM1401 224h1v1h-1zM1401 227h1v1h-1zM1401 229h1v1h-1zM1401 231h1v1h-1zM1401 234h1v1h-1zM1401 236h1v1h-1zM1401 238h1v1h-1zM1401 241h1v1h-1zM1401 243h1v1h-1zM1401 245h1v1h-1zM1401 248h1v1h-1zM1401 250h1v1h-1zM1401 252h1v1h-1zM1401 255h1v1h-1zM1401 257h1v1h-1zM1401 259h1v1h-1zM1401 261h1v1h-1zM1401 264h1v1h-1zM1401 266h1v1h-1zM1401 268h1v1h-1zM1401 271h1v1h-1zM1401 273h1v1h-1zM1401 275h1v1h-1zM1401 278h1v1h-1zM1401 280h1v1h-1zM1401 282h1v1h-1zM1401 285h1v1h-1zM1401 288h1v1h-1zM1401 290h1v1h-1zM1401 293h1v1h-1zM1401 295h1v1h-1zM1401 297h1v1h-1zM1401 300h1v1h-1zM1401 302h1v1h-1zM1401 304h1v1h-1zM1401 307h1v1h-1zM1401 309h1v1h-1zM1401 311h1v1h-1zM1401 314h1v1h-1zM1401 316h1v1h-1zM1401 318h1v1h-1zM1401 320h1v1h-1zM1401 323h1v1h-1zM1401 325h1v1h-1zM1401 327h1v1h-1zM1401 330h1v1h-1zM1401 332h1v1h-1zM1401 334h1v1h-1zM1401 337h1v1h-1zM1401 339h1v1h-1zM1401 341h1v1h-1zM1401 344h1v1h-1zM1401 346h1v1h-1zM1401 348h1v1h-1zM1401 351h1v1h-1zM1401 353h1v1h-1zM1401 355h1v1h-1zM1401 358h1v1h-1zM1401 360h1v1h-1zM1401 362h1v1h-1zM1401 365h1v1h-1zM1401 367h1v1h-1zM1401 369h1v1h-1zM1401 372h1v1h-1zM1401 374h1v1h-1zM1401 376h1v1h-1zM1401 378h1v1h-1zM1401 381h1v1h-1zM1401 383h1v1h-1zM1401 385h1v1h-1zM1401 388h1v1h-1zM1401 390h1v1h-1zM1401 392h1v1h-1zM1401 395h1v1h-1zM1401 397h1v1h-1zM1401 399h1v1h-1zM1401 402h1v1h-1zM1401 405h1v1h-1zM1401 407h1v1h-1zM1401 410h1v1h-1zM1401 412h1v1h-1zM1401 414h1v1h-1zM1401 417h1v1h-1zM1401 419h1v1h-1zM1401 421h1v1h-1zM1401 424h1v1h-1zM1401 426h1v1h-1zM1401 428h1v1h-1zM1401 431h1v1h-1zM1401 433h1v1h-1zM1401 435h1v1h-1zM1401 437h1v1h-1zM1401 440h1v1h-1zM1401 442h1v1h-1zM1401 444h1v1h-1zM1401 447h1v1h-1zM1401 449h1v1h-1zM1401 451h1v1h-1zM1401 454h1v1h-1zM1401 456h1v1h-1zM1401 458h1v1h-1zM1401 461h1v1h-1zM1401 463h1v1h-1zM1401 465h1v1h-1zM1401 468h1v1h-1zM1401 470h1v1h-1zM1401 472h1v1h-1zM1401 475h1v1h-1zM1401 477h1v1h-1zM1401 479h1v1h-1zM1401 482h1v1h-1zM1401 484h1v1h-1zM1401 486h1v1h-1zM1401 489h1v1h-1zM1401 491h1v1h-1zM1401 493h1v1h-1zM1401 495h1v1h-1zM1401 498h1v1h-1zM1401 500h1v1h-1zM1401 502h1v1h-1zM1401 505h1v1h-1zM1401 507h1v1h-1zM1401 509h1v1h-1zM1401 512h1v1h-1zM1401 514h1v1h-1zM1401 516h1v1h-1zM1401 519h1v1h-1zM1401 522h1v1h-1zM1401 524h1v1h-1zM1401 527h1v1h-1zM1401 529h1v1h-1zM1401 531h1v1h-1zM1401 534h1v1h-1zM1401 536h1v1h-1zM1401 538h1v1h-1zM1401 541h1v1h-1zM1401 543h1v1h-1zM1401 545h1v1h-1zM1401 548h1v1h-1zM1401 550h1v1h-1zM1401 552h1v1h-1zM1401 554h1v1h-1zM1401 557h1v1h-1zM1401 559h1v1h-1zM1401 561h1v1h-1zM1401 564h1v1h-1zM1401 566h1v1h-1zM1401 568h1v1h-1zM1401 571h1v1h-1zM1401 573h1v1h-1zM1401 575h1v1h-1zM1401 578h1v1h-1zM1401 580h1v1h-1zM1401 582h1v1h-1zM1401 585h1v1h-1zM1401 587h1v1h-1zM1401 589h1v1h-1zM1401 592h1v1h-1zM1401 594h1v1h-1zM1401 596h1v1h-1zM1401 599h1v1h-1zM1401 601h1v1h-1zM1401 603h1v1h-1zM1401 606h1v1h-1zM1401 608h1v1h-1zM1401 610h1v1h-1zM1401 612h1v1h-1zM1401 615h1v1h-1zM1401 617h1v1h-1zM1401 619h1v1h-1zM1401 622h1v1h-1zM1401 624h1v1h-1zM1401 626h1v1h-1zM1401 629h1v1h-1zM1401 631h1v1h-1zM1401 633h1v1h-1zM1401 636h1v1h-1zM1401 639h1v1h-1zM1401 641h1v1h-1zM1401 644h1v1h-1zM1401 646h1v1h-1zM1401 648h1v1h-1zM1401 651h1v1h-1zM1401 653h1v1h-1zM1401 655h1v1h-1zM1401 658h1v1h-1zM1401 660h1v1h-1zM1401 662h1v1h-1zM1401 665h1v1h-1zM1401 667h1v1h-1zM1401 669h1v1h-1zM1401 671h1v1h-1zM1401 674h1v1h-1zM1401 676h1v1h-1zM1401 678h1v1h-1zM1401 681h1v1h-1zM1401 683h1v1h-1zM1401 685h1v1h-1zM1401 688h1v1h-1zM1401 690h1v1h-1zM1401 692h1v1h-1zM1401 695h1v1h-1zM1401 697h1v1h-1zM1401 699h1v1h-1zM1401 702h1v1h-1zM1401 704h1v1h-1zM1401 706h1v1h-1zM1401 709h1v1h-1zM1401 711h1v1h-1zM1401 713h1v1h-1zM1401 716h1v1h-1zM1401 718h1v1h-1zM1401 720h1v1h-1zM1401 723h1v1h-1zM1401 725h1v1h-1zM1401 727h1v1h-1zM1401 729h1v1h-1zM1401 732h1v1h-1zM1401 734h1v1h-1zM1401 736h1v1h-1zM1401 739h1v1h-1zM1401 741h1v1h-1zM1401 743h1v1h-1zM1401 746h1v1h-1zM1401 748h1v1h-1zM1401 750h1v1h-1zM1401 753h1v1h-1zM1401 756h1v1h-1zM1401 758h1v1h-1zM1401 761h1v1h-1zM1401 763h1v1h-1zM1401 765h1v1h-1zM1401 768h1v1h-1zM1401 770h1v1h-1zM1401 772h1v1h-1zM1401 775h1v1h-1zM1401 777h1v1h-1zM1401 779h1v1h-1zM1401 782h1v1h-1zM1401 784h1v1h-1zM1401 786h1v1h-1zM1401 788h1v1h-1zM1401 791h1v1h-1zM1401 793h1v1h-1zM1401 795h1v1h-1zM1401 798h1v1h-1zM1401 800h1v1h-1zM1401 802h1v1h-1zM1401 805h1v1h-1zM1401 807h1v1h-1zM1401 809h1v1h-1zM1401 812h1v1h-1zM1401 814h1v1h-1zM1401 816h1v1h-1zM1401 819h1v1h-1zM1401 821h1v1h-1zM1401 823h1v1h-1zM1401 826h1v1h-1zM1401 828h1v1h-1zM1401 830h1v1h-1zM1401 833h1v1h-1zM1401 835h1v1h-1zM1401 837h1v1h-1zM1401 840h1v1h-1zM1401 842h1v1h-1zM1401 844h1v1h-1zM1401 846h1v1h-1zM1401 849h1v1h-1zM1401 851h1v1h-1zM1401 853h1v1h-1zM1401 856h1v1h-1zM1401 858h1v1h-1zM1401 860h1v1h-1zM1401 863h1v1h-1zM1401 865h1v1h-1zM1401 867h1v1h-1zM1401 870h1v1h-1zM1401 873h1v1h-1zM1401 875h1v1h-1zM1401 878h1v1h-1zM1401 880h1v1h-1zM1401 883h1v1h-1zM1401 885h1v1h-1zM1401 887h1v1h-1zM1401 890h1v1h-1zM1401 892h1v1h-1zM1401 894h1v1h-1zM1401 897h1v1h-1zM1401 899h1v1h-1zM1401 902h1v1h-1zM1401 904h1v1h-1zM1401 906h1v1h-1zM1401 909h1v1h-1zM1401 911h1v1h-1zM1401 913h1v1h-1zM1401 916h1v1h-1zM1401 918h1v1h-1zM1401 921h1v1h-1zM1401 923h1v1h-1zM1401 925h1v1h-1zM1401 928h1v1h-1zM1401 930h1v1h-1zM1401 933h1v1h-1zM1401 935h1v1h-1zM1401 937h1v1h-1zM1401 940h1v1h-1zM1401 942h1v1h-1zM1401 944h1v1h-1zM1401 947h1v1h-1zM1401 949h1v1h-1zM1401 952h1v1h-1zM1401 954h1v1h-1zM1401 956h1v1h-1zM1401 959h1v1h-1zM1401 961h1v1h-1zM1401 963h1v1h-1zM1401 966h1v1h-1zM1401 968h1v1h-1zM1401 971h1v1h-1zM1401 973h1v1h-1zM1401 975h1v1h-1zM1401 978h1v1h-1zM1401 980h1v1h-1zM1401 982h1v1h-1zM1401 985h1v1h-1zM1401 987h1v1h-1zM1401 990h1v1h-1zM1436 54h1v1h-1zM1436 66h1v1h-1zM1436 77h1v1h-1zM1436 89h1v1h-1zM1436 100h1v1h-1zM1436 112h1v1h-1zM1436 124h1v1h-1zM1436 135h1v1h-1zM1436 147h1v1h-1zM1436 158h1v1h-1zM1436 171h1v1h-1zM1436 183h1v1h-1zM1436 194h1v1h-1zM1436 206h1v1h-1zM1436 217h1v1h-1zM1436 229h1v1h-1zM1436 241h1v1h-1zM1436 252h1v1h-1zM1436 264h1v1h-1zM1436 275h1v1h-1zM1436 288h1v1h-1zM1436 300h1v1h-1zM1436 311h1v1h-1zM1436 323h1v1h-1zM1436 334h1v1h-1zM1436 346h1v1h-1zM1436 358h1v1h-1zM1436 369h1v1h-1zM1436 381h1v1h-1zM1436 392h1v1h-1zM1436 405h1v1h-1zM1436 417h1v1h-1zM1436 428h1v1h-1zM1436 440h1v1h-1zM1436 451h1v1h-1zM1436 463h1v1h-1zM1436 475h1v1h-1zM1436 486h1v1h-1zM1436 498h1v1h-1zM1436 509h1v1h-1zM1436 522h1v1h-1zM1436 534h1v1h-1zM1436 545h1v1h-1zM1436 557h1v1h-1zM1436 568h1v1h-1zM1436 580h1v1h-1zM1436 592h1v1h-1zM1436 603h1v1h-1zM1436 615h1v1h-1zM1436 626h1v1h-1zM1436 639h1v1h-1zM1436 651h1v1h-1zM1436 662h1v1h-1zM1436 674h1v1h-1zM1436 685h1v1h-1zM1436 697h1v1h-1zM1436 709h1v1h-1zM1436 720h1v1h-1zM1436 732h1v1h-1zM1436 743h1v1h-1zM1436 756h1v1h-1zM1436 768h1v1h-1zM1436 779h1v1h-1zM1436 791h1v1h-1zM1436 802h1v1h-1zM1436 814h1v1h-1zM1436 826h1v1h-1zM1436 837h1v1h-1zM1436 849h1v1h-1zM1436 860h1v1h-1zM1436 873h1v1h-1zM1436 885h1v1h-1zM1436 897h1v1h-1zM1436 909h1v1h-1zM1436 921h1v1h-1zM1436 933h1v1h-1zM1436 944h1v1h-1zM1436 956h1v1h-1zM1436 968h1v1h-1zM1436 980h1v1h-1zM1471 54h1v1h-1zM1471 66h1v1h-1zM1471 77h1v1h-1zM1471 89h1v1h-1zM1471 100h1v1h-1zM1471 112h1v1h-1zM1471 124h1v1h-1zM1471 135h1v1h-1zM1471 147h1v1h-1zM1471 158h1v1h-1zM1471 171h1v1h-1zM1471 183h1v1h-1zM1471 194h1v1h-1zM1471 206h1v1h-1zM1471 217h1v1h-1zM1471 229h1v1h-1zM1471 241h1v1h-1zM1471 252h1v1h-1zM1471 264h1v1h-1zM1471 275h1v1h-1zM1471 288h1v1h-1zM1471 300h1v1h-1zM1471 311h1v1h-1zM1471 323h1v1h-1zM1471 334h1v1h-1zM1471 346h1v1h-1zM1471 358h1v1h-1zM1471 369h1v1h-1zM1471 381h1v1h-1zM1471 392h1v1h-1zM1471 405h1v1h-1zM1471 417h1v1h-1zM1471 428h1v1h-1zM1471 440h1v1h-1zM1471 451h1v1h-1zM1471 463h1v1h-1zM1471 475h1v1h-1zM1471 486h1v1h-1zM1471 498h1v1h-1zM1471 509h1v1h-1zM1471 522h1v1h-1zM1471 534h1v1h-1zM1471 545h1v1h-1zM1471 557h1v1h-1zM1471 568h1v1h-1zM1471 580h1v1h-1zM1471 592h1v1h-1zM1471 603h1v1h-1zM1471 615h1v1h-1zM1471 626h1v1h-1zM1471 639h1v1h-1zM1471 651h1v1h-1zM1471 662h1v1h-1zM1471 674h1v1h-1zM1471 685h1v1h-1zM1471 697h1v1h-1zM1471 709h1v1h-1zM1471 720h1v1h-1zM1471 732h1v1h-1zM1471 743h1v1h-1zM1471 756h1v1h-1zM1471 768h1v1h-1zM1471 779h1v1h-1zM1471 791h1v1h-1zM1471 802h1v1h-1zM1471 814h1v1h-1zM1471 826h1v1h-1zM1471 837h1v1h-1zM1471 849h1v1h-1zM1471 860h1v1h-1zM1471 873h1v1h-1zM1471 885h1v1h-1zM1471 897h1v1h-1zM1471 909h1v1h-1zM1471 921h1v1h-1zM1471 933h1v1h-1zM1471 944h1v1h-1zM1471 956h1v1h-1zM1471 968h1v1h-1zM1471 980h1v1h-1zM1506 54h1v1h-1zM1506 66h1v1h-1zM1506 77h1v1h-1zM1506 89h1v1h-1zM1506 100h1v1h-1zM1506 112h1v1h-1zM1506 124h1v1h-1zM1506 135h1v1h-1zM1506 147h1v1h-1zM1506 158h1v1h-1zM1506 171h1v1h-1zM1506 183h1v1h-1zM1506 194h1v1h-1zM1506 206h1v1h-1zM1506 217h1v1h-1zM1506 229h1v1h-1zM1506 241h1v1h-1zM1506 252h1v1h-1zM1506 264h1v1h-1zM1506 275h1v1h-1zM1506 288h1v1h-1zM1506 300h1v1h-1zM1506 311h1v1h-1zM1506 323h1v1h-1zM1506 334h1v1h-1zM1506 346h1v1h-1zM1506 358h1v1h-1zM1506 369h1v1h-1zM1506 381h1v1h-1zM1506 392h1v1h-1zM1506 405h1v1h-1zM1506 417h1v1h-1zM1506 428h1v1h-1zM1506 440h1v1h-1zM1506 451h1v1h-1zM1506 463h1v1h-1zM1506 475h1v1h-1zM1506 486h1v1h-1zM1506 498h1v1h-1zM1506 509h1v1h-1zM1506 522h1v1h-1zM1506 534h1v1h-1zM1506 545h1v1h-1zM1506 557h1v1h-1zM1506 568h1v1h-1zM1506 580h1v1h-1zM1506 592h1v1h-1zM1506 603h1v1h-1zM1506 615h1v1h-1zM1506 626h1v1h-1zM1506 639h1v1h-1zM1506 651h1v1h-1zM1506 662h1v1h-1zM1506 674h1v1h-1zM1506 685h1v1h-1zM1506 697h1v1h-1zM1506 709h1v1h-1zM1506 720h1v1h-1zM1506 732h1v1h-1zM1506 743h1v1h-1zM1506 756h1v1h-1zM1506 768h1v1h-1zM1506 779h1v1h-1zM1506 791h1v1h-1zM1506 802h1v1h-1zM1506 814h1v1h-1zM1506 826h1v1h-1zM1506 837h1v1h-1zM1506 849h1v1h-1zM1506 860h1v1h-1zM1506 873h1v1h-1zM1506 885h1v1h-1zM1506 897h1v1h-1zM1506 909h1v1h-1zM1506 921h1v1h-1zM1506 933h1v1h-1zM1506 944h1v1h-1zM1506 956h1v1h-1zM1506 968h1v1h-1zM1506 980h1v1h-1zM1541 54h1v1h-1zM1541 66h1v1h-1zM1541 77h1v1h-1zM1541 89h1v1h-1zM1541 100h1v1h-1zM1541 112h1v1h-1zM1541 124h1v1h-1zM1541 135h1v1h-1zM1541 147h1v1h-1zM1541 158h1v1h-1zM1541 171h1v1h-1zM1541 183h1v1h-1zM1541 194h1v1h-1zM1541 206h1v1h-1zM1541 217h1v1h-1zM1541 229h1v1h-1zM1541 241h1v1h-1zM1541 252h1v1h-1zM1541 264h1v1h-1zM1541 275h1v1h-1zM1541 288h1v1h-1zM1541 300h1v1h-1zM1541 311h1v1h-1zM1541 323h1v1h-1zM1541 334h1v1h-1zM1541 346h1v1h-1zM1541 358h1v1h-1zM1541 369h1v1h-1zM1541 381h1v1h-1zM1541 392h1v1h-1zM1541 405h1v1h-1zM1541 417h1v1h-1zM1541 428h1v1h-1zM1541 440h1v1h-1zM1541 451h1v1h-1zM1541 463h1v1h-1zM1541 475h1v1h-1zM1541 486h1v1h-1zM1541 498h1v1h-1zM1541 509h1v1h-1zM1541 522h1v1h-1zM1541 534h1v1h-1zM1541 545h1v1h-1zM1541 557h1v1h-1zM1541 568h1v1h-1zM1541 580h1v1h-1zM1541 592h1v1h-1zM1541 603h1v1h-1zM1541 615h1v1h-1zM1541 626h1v1h-1zM1541 639h1v1h-1zM1541 651h1v1h-1zM1541 662h1v1h-1zM1541 674h1v1h-1zM1541 685h1v1h-1zM1541 697h1v1h-1zM1541 709h1v1h-1zM1541 720h1v1h-1zM1541 732h1v1h-1zM1541 743h1v1h-1zM1541 756h1v1h-1zM1541 768h1v1h-1zM1541 779h1v1h-1zM1541 791h1v1h-1zM1541 802h1v1h-1zM1541 814h1v1h-1zM1541 826h1v1h-1zM1541 837h1v1h-1zM1541 849h1v1h-1zM1541 860h1v1h-1zM1541 873h1v1h-1zM1541 885h1v1h-1zM1541 897h1v1h-1zM1541 909h1v1h-1zM1541 921h1v1h-1zM1541 933h1v1h-1zM1541 944h1v1h-1zM1541 956h1v1h-1zM1541 968h1v1h-1zM1541 980h1v1h-1zM1576 54h1v1h-1zM1576 56h1v1h-1zM1576 59h1v1h-1zM1576 61h1v1h-1zM1576 63h1v1h-1zM1576 66h1v1h-1zM1576 68h1v1h-1zM1576 70h1v1h-1zM1576 73h1v1h-1zM1576 75h1v1h-1zM1576 77h1v1h-1zM1576 80h1v1h-1zM1576 82h1v1h-1zM1576 84h1v1h-1zM1576 86h1v1h-1zM1576 89h1v1h-1zM1576 91h1v1h-1zM1576 93h1v1h-1zM1576 96h1v1h-1zM1576 98h1v1h-1zM1576 100h1v1h-1zM1576 103h1v1h-1zM1576 105h1v1h-1zM1576 107h1v1h-1zM1576 110h1v1h-1zM1576 112h1v1h-1zM1576 114h1v1h-1zM1576 117h1v1h-1zM1576 119h1v1h-1zM1576 121h1v1h-1zM1576 124h1v1h-1zM1576 126h1v1h-1zM1576 128h1v1h-1zM1576 131h1v1h-1zM1576 133h1v1h-1zM1576 135h1v1h-1zM1576 138h1v1h-1zM1576 140h1v1h-1zM1576 142h1v1h-1zM1576 144h1v1h-1zM1576 147h1v1h-1zM1576 149h1v1h-1zM1576 151h1v1h-1zM1576 154h1v1h-1zM1576 156h1v1h-1zM1576 158h1v1h-1zM1576 161h1v1h-1zM1576 163h1v1h-1zM1576 165h1v1h-1zM1576 168h1v1h-1zM1576 171h1v1h-1zM1576 173h1v1h-1zM1576 176h1v1h-1zM1576 178h1v1h-1zM1576 180h1v1h-1zM1576 183h1v1h-1zM1576 185h1v1h-1zM1576 187h1v1h-1zM1576 190h1v1h-1zM1576 192h1v1h-1zM1576 194h1v1h-1zM1576 197h1v1h-1zM1576 199h1v1h-1zM1576 201h1v1h-1zM1576 203h1v1h-1zM1576 206h1v1h-1zM1576 208h1v1h-1zM1576 210h1v1h-1zM1576 213h1v1h-1zM1576 215h1v1h-1zM1576 217h1v1h-1zM1576 220h1v1h-1zM1576 222h1v1h-1zM1576 224h1v1h-1zM1576 227h1v1h-1zM1576 229h1v1h-1zM1576 231h1v1h-1zM1576 234h1v1h-1zM1576 236h1v1h-1zM1576 238h1v1h-1zM1576 241h1v1h-1zM1576 243h1v1h-1zM1576 245h1v1h-1zM1576 248h1v1h-1zM1576 250h1v1h-1zM1576 252h1v1h-1zM1576 255h1v1h-1zM1576 257h1v1h-1zM1576 259h1v1h-1zM1576 261h1v1h-1zM1576 264h1v1h-1zM1576 266h1v1h-1zM1576 268h1v1h-1zM1576 271h1v1h-1zM1576 273h1v1h-1zM1576 275h1v1h-1zM1576 278h1v1h-1zM1576 280h1v1h-1zM1576 282h1v1h-1zM1576 285h1v1h-1zM1576 288h1v1h-1zM1576 290h1v1h-1zM1576 293h1v1h-1zM1576 295h1v1h-1zM1576 297h1v1h-1zM1576 300h1v1h-1zM1576 302h1v1h-1zM1576 304h1v1h-1zM1576 307h1v1h-1zM1576 309h1v1h-1zM1576 311h1v1h-1zM1576 314h1v1h-1zM1576 316h1v1h-1zM1576 318h1v1h-1zM1576 320h1v1h-1zM1576 323h1v1h-1zM1576 325h1v1h-1zM1576 327h1v1h-1zM1576 330h1v1h-1zM1576 332h1v1h-1zM1576 334h1v1h-1zM1576 337h1v1h-1zM1576 339h1v1h-1zM1576 341h1v1h-1zM1576 344h1v1h-1zM1576 346h1v1h-1zM1576 348h1v1h-1zM1576 351h1v1h-1zM1576 353h1v1h-1zM1576 355h1v1h-1zM1576 358h1v1h-1zM1576 360h1v1h-1zM1576 362h1v1h-1zM1576 365h1v1h-1zM1576 367h1v1h-1zM1576 369h1v1h-1zM1576 372h1v1h-1zM1576 374h1v1h-1zM1576 376h1v1h-1zM1576 378h1v1h-1zM1576 381h1v1h-1zM1576 383h1v1h-1zM1576 385h1v1h-1zM1576 388h1v1h-1zM1576 390h1v1h-1zM1576 392h1v1h-1zM1576 395h1v1h-1zM1576 397h1v1h-1zM1576 399h1v1h-1zM1576 402h1v1h-1zM1576 405h1v1h-1zM1576 407h1v1h-1zM1576 410h1v1h-1zM1576 412h1v1h-1zM1576 414h1v1h-1zM1576 417h1v1h-1zM1576 419h1v1h-1zM1576 421h1v1h-1zM1576 424h1v1h-1zM1576 426h1v1h-1zM1576 428h1v1h-1zM1576 431h1v1h-1zM1576 433h1v1h-1zM1576 435h1v1h-1zM1576 437h1v1h-1zM1576 440h1v1h-1zM1576 442h1v1h-1zM1576 444h1v1h-1zM1576 447h1v1h-1zM1576 449h1v1h-1zM1576 451h1v1h-1zM1576 454h1v1h-1zM1576 456h1v1h-1zM1576 458h1v1h-1zM1576 461h1v1h-1zM1576 463h1v1h-1zM1576 465h1v1h-1zM1576 468h1v1h-1zM1576 470h1v1h-1zM1576 472h1v1h-1zM1576 475h1v1h-1zM1576 477h1v1h-1zM1576 479h1v1h-1zM1576 482h1v1h-1zM1576 484h1v1h-1zM1576 486h1v1h-1zM1576 489h1v1h-1zM1576 491h1v1h-1zM1576 493h1v1h-1zM1576 495h1v1h-1zM1576 498h1v1h-1zM1576 500h1v1h-1zM1576 502h1v1h-1zM1576 505h1v1h-1zM1576 507h1v1h-1zM1576 509h1v1h-1zM1576 512h1v1h-1zM1576 514h1v1h-1zM1576 516h1v1h-1zM1576 519h1v1h-1zM1576 522h1v1h-1zM1576 524h1v1h-1zM1576 527h1v1h-1zM1576 529h1v1h-1zM1576 531h1v1h-1zM1576 534h1v1h-1zM1576 536h1v1h-1zM1576 538h1v1h-1zM1576 541h1v1h-1zM1576 543h1v1h-1zM1576 545h1v1h-1zM1576 548h1v1h-1zM1576 550h1v1h-1zM1576 552h1v1h-1zM1576 554h1v1h-1zM1576 557h1v1h-1zM1576 559h1v1h-1zM1576 561h1v1h-1zM1576 564h1v1h-1zM1576 566h1v1h-1zM1576 568h1v1h-1zM1576 571h1v1h-1zM1576 573h1v1h-1zM1576 575h1v1h-1zM1576 578h1v1h-1zM1576 580h1v1h-1zM1576 582h1v1h-1zM1576 585h1v1h-1zM1576 587h1v1h-1zM1576 589h1v1h-1zM1576 592h1v1h-1zM1576 594h1v1h-1zM1576 596h1v1h-1zM1576 599h1v1h-1zM1576 601h1v1h-1zM1576 603h1v1h-1zM1576 606h1v1h-1zM1576 608h1v1h-1zM1576 610h1v1h-1zM1576 612h1v1h-1zM1576 615h1v1h-1zM1576 617h1v1h-1zM1576 619h1v1h-1zM1576 622h1v1h-1zM1576 624h1v1h-1zM1576 626h1v1h-1zM1576 629h1v1h-1zM1576 631h1v1h-1zM1576 633h1v1h-1zM1576 636h1v1h-1zM1576 639h1v1h-1zM1576 641h1v1h-1zM1576 644h1v1h-1zM1576 646h1v1h-1zM1576 648h1v1h-1zM1576 651h1v1h-1zM1576 653h1v1h-1zM1576 655h1v1h-1zM1576 658h1v1h-1zM1576 660h1v1h-1zM1576 662h1v1h-1zM1576 665h1v1h-1zM1576 667h1v1h-1zM1576 669h1v1h-1zM1576 671h1v1h-1zM1576 674h1v1h-1zM1576 676h1v1h-1zM1576 678h1v1h-1zM1576 681h1v1h-1zM1576 683h1v1h-1zM1576 685h1v1h-1zM1576 688h1v1h-1zM1576 690h1v1h-1zM1576 692h1v1h-1zM1576 695h1v1h-1zM1576 697h1v1h-1zM1576 699h1v1h-1zM1576 702h1v1h-1zM1576 704h1v1h-1zM1576 706h1v1h-1zM1576 709h1v1h-1zM1576 711h1v1h-1zM1576 713h1v1h-1zM1576 716h1v1h-1zM1576 718h1v1h-1zM1576 720h1v1h-1zM1576 723h1v1h-1zM1576 725h1v1h-1zM1576 727h1v1h-1zM1576 729h1v1h-1zM1576 732h1v1h-1zM1576 734h1v1h-1zM1576 736h1v1h-1zM1576 739h1v1h-1zM1576 741h1v1h-1zM1576 743h1v1h-1zM1576 746h1v1h-1zM1576 748h1v1h-1zM1576 750h1v1h-1zM1576 753h1v1h-1zM1576 756h1v1h-1zM1576 758h1v1h-1zM1576 761h1v1h-1zM1576 763h1v1h-1zM1576 765h1v1h-1zM1576 768h1v1h-1zM1576 770h1v1h-1zM1576 772h1v1h-1zM1576 775h1v1h-1zM1576 777h1v1h-1zM1576 779h1v1h-1zM1576 782h1v1h-1zM1576 784h1v1h-1zM1576 786h1v1h-1zM1576 788h1v1h-1zM1576 791h1v1h-1zM1576 793h1v1h-1zM1576 795h1v1h-1zM1576 798h1v1h-1zM1576 800h1v1h-1zM1576 802h1v1h-1zM1576 805h1v1h-1zM1576 807h1v1h-1zM1576 809h1v1h-1zM1576 812h1v1h-1zM1576 814h1v1h-1zM1576 816h1v1h-1zM1576 819h1v1h-1zM1576 821h1v1h-1zM1576 823h1v1h-1zM1576 826h1v1h-1zM1576 828h1v1h-1zM1576 830h1v1h-1zM1576 833h1v1h-1zM1576 835h1v1h-1zM1576 837h1v1h-1zM1576 840h1v1h-1zM1576 842h1v1h-1zM1576 844h1v1h-1zM1576 846h1v1h-1zM1576 849h1v1h-1zM1576 851h1v1h-1zM1576 853h1v1h-1zM1576 856h1v1h-1zM1576 858h1v1h-1zM1576 860h1v1h-1zM1576 863h1v1h-1zM1576 865h1v1h-1zM1576 867h1v1h-1zM1576 870h1v1h-1zM1576 873h1v1h-1zM1576 875h1v1h-1zM1576 878h1v1h-1zM1576 880h1v1h-1zM1576 883h1v1h-1zM1576 885h1v1h-1zM1576 887h1v1h-1zM1576 890h1v1h-1zM1576 892h1v1h-1zM1576 894h1v1h-1zM1576 897h1v1h-1zM1576 899h1v1h-1zM1576 902h1v1h-1zM1576 904h1v1h-1zM1576 906h1v1h-1zM1576 909h1v1h-1zM1576 911h1v1h-1zM1576 913h1v1h-1zM1576 916h1v1h-1zM1576 918h1v1h-1zM1576 921h1v1h-1zM1576 923h1v1h-1zM1576 925h1v1h-1zM1576 928h1v1h-1zM1576 930h1v1h-1zM1576 933h1v1h-1zM1576 935h1v1h-1zM1576 937h1v1h-1zM1576 940h1v1h-1zM1576 942h1v1h-1zM1576 944h1v1h-1zM1576 947h1v1h-1zM1576 949h1v1h-1zM1576 952h1v1h-1zM1576 954h1v1h-1zM1576 956h1v1h-1zM1576 959h1v1h-1zM1576 961h1v1h-1zM1576 963h1v1h-1zM1576 966h1v1h-1zM1576 968h1v1h-1zM1576 971h1v1h-1zM1576 973h1v1h-1zM1576 975h1v1h-1zM1576 978h1v1h-1zM1576 980h1v1h-1zM1576 982h1v1h-1zM1576 985h1v1h-1zM1576 987h1v1h-1zM1576 990h1v1h-1zM1611 54h1v1h-1zM1611 66h1v1h-1zM1611 77h1v1h-1zM1611 89h1v1h-1zM1611 100h1v1h-1zM1611 112h1v1h-1zM1611 124h1v1h-1zM1611 135h1v1h-1zM1611 147h1v1h-1zM1611 158h1v1h-1zM1611 171h1v1h-1zM1611 183h1v1h-1zM1611 194h1v1h-1zM1611 206h1v1h-1zM1611 217h1v1h-1zM1611 229h1v1h-1zM1611 241h1v1h-1zM1611 252h1v1h-1zM1611 264h1v1h-1zM1611 275h1v1h-1zM1611 288h1v1h-1zM1611 300h1v1h-1zM1611 311h1v1h-1zM1611 323h1v1h-1zM1611 334h1v1h-1zM1611 346h1v1h-1zM1611 358h1v1h-1zM1611 369h1v1h-1zM1611 381h1v1h-1zM1611 392h1v1h-1zM1611 405h1v1h-1zM1611 417h1v1h-1zM1611 428h1v1h-1zM1611 440h1v1h-1zM1611 451h1v1h-1zM1611 463h1v1h-1zM1611 475h1v1h-1zM1611 486h1v1h-1zM1611 498h1v1h-1zM1611 509h1v1h-1zM1611 522h1v1h-1zM1611 534h1v1h-1zM1611 545h1v1h-1zM1611 557h1v1h-1zM1611 568h1v1h-1zM1611 580h1v1h-1zM1611 592h1v1h-1zM1611 603h1v1h-1zM1611 615h1v1h-1zM1611 626h1v1h-1zM1611 639h1v1h-1zM1611 651h1v1h-1zM1611 662h1v1h-1zM1611 674h1v1h-1zM1611 685h1v1h-1zM1611 697h1v1h-1zM1611 709h1v1h-1zM1611 720h1v1h-1zM1611 732h1v1h-1zM1611 743h1v1h-1zM1611 756h1v1h-1zM1611 768h1v1h-1zM1611 779h1v1h-1zM1611 791h1v1h-1zM1611 802h1v1h-1zM1611 814h1v1h-1zM1611 826h1v1h-1zM1611 837h1v1h-1zM1611 849h1v1h-1zM1611 860h1v1h-1zM1611 873h1v1h-1zM1611 885h1v1h-1zM1611 897h1v1h-1zM1611 909h1v1h-1zM1611 921h1v1h-1zM1611 933h1v1h-1zM1611 944h1v1h-1zM1611 956h1v1h-1zM1611 968h1v1h-1zM1611 980h1v1h-1zM1646 54h1v1h-1zM1646 66h1v1h-1zM1646 77h1v1h-1zM1646 89h1v1h-1zM1646 100h1v1h-1zM1646 112h1v1h-1zM1646 124h1v1h-1zM1646 135h1v1h-1zM1646 147h1v1h-1zM1646 158h1v1h-1zM1646 171h1v1h-1zM1646 183h1v1h-1zM1646 194h1v1h-1zM1646 206h1v1h-1zM1646 217h1v1h-1zM1646 229h1v1h-1zM1646 241h1v1h-1zM1646 252h1v1h-1zM1646 264h1v1h-1zM1646 275h1v1h-1zM1646 288h1v1h-1zM1646 300h1v1h-1zM1646 311h1v1h-1zM1646 323h1v1h-1zM1646 334h1v1h-1zM1646 346h1v1h-1zM1646 358h1v1h-1zM1646 369h1v1h-1zM1646 381h1v1h-1zM1646 392h1v1h-1zM1646 405h1v1h-1zM1646 417h1v1h-1zM1646 428h1v1h-1zM1646 440h1v1h-1zM1646 451h1v1h-1zM1646 463h1v1h-1zM1646 475h1v1h-1zM1646 486h1v1h-1zM1646 498h1v1h-1zM1646 509h1v1h-1zM1646 522h1v1h-1zM1646 534h1v1h-1zM1646 545h1v1h-1zM1646 557h1v1h-1zM1646 568h1v1h-1zM1646 580h1v1h-1zM1646 592h1v1h-1zM1646 603h1v1h-1zM1646 615h1v1h-1zM1646 626h1v1h-1zM1646 639h1v1h-1zM1646 651h1v1h-1zM1646 662h1v1h-1zM1646 674h1v1h-1zM1646 685h1v1h-1zM1646 697h1v1h-1zM1646 709h1v1h-1zM1646 720h1v1h-1zM1646 732h1v1h-1zM1646 743h1v1h-1zM1646 756h1v1h-1zM1646 768h1v1h-1zM1646 779h1v1h-1zM1646 791h1v1h-1zM1646 802h1v1h-1zM1646 814h1v1h-1zM1646 826h1v1h-1zM1646 837h1v1h-1zM1646 849h1v1h-1zM1646 860h1v1h-1zM1646 873h1v1h-1zM1646 885h1v1h-1zM1646 897h1v1h-1zM1646 909h1v1h-1zM1646 921h1v1h-1zM1646 933h1v1h-1zM1646 944h1v1h-1zM1646 956h1v1h-1zM1646 968h1v1h-1zM1646 980h1v1h-1zM1681 54h1v1h-1zM1681 66h1v1h-1zM1681 77h1v1h-1zM1681 89h1v1h-1zM1681 100h1v1h-1zM1681 112h1v1h-1zM1681 124h1v1h-1zM1681 135h1v1h-1zM1681 147h1v1h-1zM1681 158h1v1h-1zM1681 171h1v1h-1zM1681 183h1v1h-1zM1681 194h1v1h-1zM1681 206h1v1h-1zM1681 217h1v1h-1zM1681 229h1v1h-1zM1681 241h1v1h-1zM1681 252h1v1h-1zM1681 264h1v1h-1zM1681 275h1v1h-1zM1681 288h1v1h-1zM1681 300h1v1h-1zM1681 311h1v1h-1zM1681 323h1v1h-1zM1681 334h1v1h-1zM1681 346h1v1h-1zM1681 358h1v1h-1zM1681 369h1v1h-1zM1681 381h1v1h-1zM1681 392h1v1h-1zM1681 405h1v1h-1zM1681 417h1v1h-1zM1681 428h1v1h-1zM1681 440h1v1h-1zM1681 451h1v1h-1zM1681 463h1v1h-1zM1681 475h1v1h-1zM1681 486h1v1h-1zM1681 498h1v1h-1zM1681 509h1v1h-1zM1681 522h1v1h-1zM1681 534h1v1h-1zM1681 545h1v1h-1zM1681 557h1v1h-1zM1681 568h1v1h-1zM1681 580h1v1h-1zM1681 592h1v1h-1zM1681 603h1v1h-1zM1681 615h1v1h-1zM1681 626h1v1h-1zM1681 639h1v1h-1zM1681 651h1v1h-1zM1681 662h1v1h-1zM1681 674h1v1h-1zM1681 685h1v1h-1zM1681 697h1v1h-1zM1681 709h1v1h-1zM1681 720h1v1h-1zM1681 732h1v1h-1zM1681 743h1v1h-1zM1681 756h1v1h-1zM1681 768h1v1h-1zM1681 779h1v1h-1zM1681 791h1v1h-1zM1681 802h1v1h-1zM1681 814h1v1h-1zM1681 826h1v1h-1zM1681 837h1v1h-1zM1681 849h1v1h-1zM1681 860h1v1h-1zM1681 873h1v1h-1zM1681 885h1v1h-1zM1681 897h1v1h-1zM1681 909h1v1h-1zM1681 921h1v1h-1zM1681 933h1v1h-1zM1681 944h1v1h-1zM1681 956h1v1h-1zM1681 968h1v1h-1zM1681 980h1v1h-1zM1716 54h1v1h-1zM1716 66h1v1h-1zM1716 77h1v1h-1zM1716 89h1v1h-1zM1716 100h1v1h-1zM1716 112h1v1h-1zM1716 124h1v1h-1zM1716 135h1v1h-1zM1716 147h1v1h-1zM1716 158h1v1h-1zM1716 171h1v1h-1zM1716 183h1v1h-1zM1716 194h1v1h-1zM1716 206h1v1h-1zM1716 217h1v1h-1zM1716 229h1v1h-1zM1716 241h1v1h-1zM1716 252h1v1h-1zM1716 264h1v1h-1zM1716 275h1v1h-1zM1716 288h1v1h-1zM1716 300h1v1h-1zM1716 311h1v1h-1zM1716 323h1v1h-1zM1716 334h1v1h-1zM1716 346h1v1h-1zM1716 358h1v1h-1zM1716 369h1v1h-1zM1716 381h1v1h-1zM1716 392h1v1h-1zM1716 405h1v1h-1zM1716 417h1v1h-1zM1716 428h1v1h-1zM1716 440h1v1h-1zM1716 451h1v1h-1zM1716 463h1v1h-1zM1716 475h1v1h-1zM1716 486h1v1h-1zM1716 498h1v1h-1zM1716 509h1v1h-1zM1716 522h1v1h-1zM1716 534h1v1h-1zM1716 545h1v1h-1zM1716 557h1v1h-1zM1716 568h1v1h-1zM1716 580h1v1h-1zM1716 592h1v1h-1zM1716 603h1v1h-1zM1716 615h1v1h-1zM1716 626h1v1h-1zM1716 639h1v1h-1zM1716 651h1v1h-1zM1716 662h1v1h-1zM1716 674h1v1h-1zM1716 685h1v1h-1zM1716 697h1v1h-1zM1716 709h1v1h-1zM1716 720h1v1h-1zM1716 732h1v1h-1zM1716 743h1v1h-1zM1716 756h1v1h-1zM1716 768h1v1h-1zM1716 779h1v1h-1zM1716 791h1v1h-1zM1716 802h1v1h-1zM1716 814h1v1h-1zM1716 826h1v1h-1zM1716 837h1v1h-1zM1716 849h1v1h-1zM1716 860h1v1h-1zM1716 873h1v1h-1zM1716 885h1v1h-1zM1716 897h1v1h-1zM1716 909h1v1h-1zM1716 921h1v1h-1zM1716 933h1v1h-1zM1716 944h1v1h-1zM1716 956h1v1h-1zM1716 968h1v1h-1zM1716 980h1v1h-1z" fill="#bdbdbd"/><rect x="3" y="169" width="1748" height="2" fill="#747474" /><rect x="3" y="286" width="1748" height="2" fill="#747474" /><rect x="3" y="403" width="1748" height="2" fill="#747474" /><rect x="3" y="520" width="1748" height="2" fill="#747474" /><rect x="3" y="637" width="1748" height="2" fill="#747474" /><rect x="3" y="754" width="1748" height="2" fill="#747474" /><rect x="3" y="871" width="1748" height="2" fill="#747474" /><rect x="1714" y="59" width="37" height="14" fill="#000"/><rect x="1721" y="82" width="30" height="14" fill="#000"/><rect x="1721" y="106" width="30" height="14" fill="#000"/><rect x="1717" y="129" width="34" height="14" fill="#000"/><rect x="1709" y="152" width="42" height="14" fill="#000"/><rect x="1696" y="176" width="55" height="14" fill="#000"/><rect x="1696" y="199" width="55" height="14" fill="#000"/><rect x="1721" y="223" width="30" height="14" fill="#000"/><rect x="1691" y="246" width="60" height="14" fill="#000"/><rect x="1691" y="270" width="60" height="14" fill="#000"/><rect x="1696" y="293" width="55" height="14" fill="#000"/><rect x="1696" y="316" width="55" height="14" fill="#000"/><rect x="1721" y="340" width="30" height="14" fill="#000"/><rect x="1691" y="363" width="60" height="14" fill="#000"/><rect x="1691" y="386" width="60" height="14" fill="#000"/><rect x="1721" y="410" width="30" height="14" fill="#000"/><rect x="1691" y="433" width="60" height="14" fill="#000"/><rect x="1691" y="457" width="60" height="14" fill="#000"/><rect x="1691" y="480" width="60" height="14" fill="#000"/><rect x="1691" y="504" width="60" height="14" fill="#000"/><rect x="1696" y="527" width="55" height="14" fill="#000"/><rect x="1696" y="550" width="55" height="14" fill="#000"/><rect x="1696" y="574" width="55" height="14" fill="#000"/><rect x="1696" y="597" width="55" height="14" fill="#000"/><rect x="1721" y="620" width="30" height="14" fill="#000"/><rect x="1721" y="644" width="30" height="14" fill="#000"/><rect x="1721" y="667" width="30" height="14" fill="#000"/><rect x="1721" y="691" width="30" height="14" fill="#000"/><rect x="1717" y="714" width="34" height="14" fill="#000"/><rect x="1717" y="738" width="34" height="14" fill="#000"/><rect x="1714" y="761" width="37" height="14" fill="#000"/><rect x="1714" y="784" width="37" height="14" fill="#000"/><rect x="1721" y="808" width="30" height="14" fill="#000"/><rect x="1709" y="831" width="42" height="14" fill="#000"/><rect x="1709" y="854" width="42" height="14" fill="#000"/><rect x="1721" y="878" width="30" height="14" fill="#000"/><rect x="1721" y="901" width="30" height="14" fill="#000"/><rect x="1721" y="925" width="30" height="14" fill="#000"/><rect x="1717" y="948" width="34" height="14" fill="#000"/><rect x="1717" y="972" width="34" height="14" fill="#000"/><rect x="3" y="112" width="1748" height="1" fill="#f2e424" /><path d="M5 112h5v1h-5zM15 112h5v1h-5zM25 112h5v1h-5zM35 112h5v1h-5zM45 112h5v1h-5zM55 112h5v1h-5zM65 112h5v1h-5zM75 112h5v1h-5zM85 112h5v1h-5zM95 112h5v1h-5zM105 112h5v1h-5zM115 112h5v1h-5zM125 112h5v1h-5zM135 112h5v1h-5zM145 112h5v1h-5zM155 112h5v1h-5zM165 112h5v1h-5zM175 112h5v1h-5zM185 112h5v1h-5zM195 112h5v1h-5zM205 112h5v1h-5zM215 112h5v1h-5zM225 112h5v1h-5zM235 112h5v1h-5zM245 112h5v1h-5zM255 112h5v1h-5zM265 112h5v1h-5zM275 112h5v1h-5zM285 112h5v1h-5zM295 112h5v1h-5zM305 112h5v1h-5zM315 112h5v1h-5zM325 112h5v1h-5zM335 112h5v1h-5zM345 112h5v1h-5zM355 112h5v1h-5zM365 112h5v1h-5zM375 112h5v1h-5zM385 112h5v1h-5zM395 112h5v1h-5zM405 112h5v1h-5zM415 112h5v1h-5zM425 112h5v1h-5zM435 112h5v1h-5zM445 112h5v1h-5zM455 112h5v1h-5zM465 112h5v1h-5zM475 112h5v1h-5zM485 112h5v1h-5zM495 112h5v1h-5zM505 112h5v1h-5zM515 112h5v1h-5zM525 112h5v1h-5zM535 112h5v1h-5zM545 112h5v1h-5zM555 112h5v1h-5zM565 112h5v1h-5zM575 112h5v1h-5zM585 112h5v1h-5zM595 112h5v1h-5zM605 112h5v1h-5zM615 112h5v1h-5zM625 112h5v1h-5zM635 112h5v1h-5zM645 112h5v1h-5zM655 112h5v1h-5zM665 112h5v1h-5zM675 112h5v1h-5zM685 112h5v1h-5zM695 112h5v1h-5zM705 112h5v1h-5zM715 112h5v1h-5zM725 112h5v1h-5zM735 112h5v1h-5zM745 112h5v1h-5zM755 112h5v1h-5zM765 112h5v1h-5zM775 112h5v1h-5zM785 112h5v1h-5zM795 112h5v1h-5zM805 112h5v1h-5zM815 112h5v1h-5zM825 112h5v1h-5zM835 112h5v1h-5zM845 112h5v1h-5zM855 112h5v1h-5zM865 112h5v1h-5zM875 112h5v1h-5zM885 112h5v1h-5zM895 112h5v1h-5zM905 112h5v1h-5zM915 112h5v1h-5zM925 112h5v1h-5zM935 112h5v1h-5zM945 112h5v1h-5zM955 112h5v1h-5zM965 112h5v1h-5zM975 112h5v1h-5zM985 112h5v1h-5zM995 112h5v1h-5zM1005 112h5v1h-5zM1015 112h5v1h-5zM1025 112h5v1h-5zM1035 112h5v1h-5zM1045 112h5v1h-5zM1055 112h5v1h-5zM1065 112h5v1h-5zM1075 112h5v1h-5zM1085 112h5v1h-5zM1095 112h5v1h-5zM1105 112h5v1h-5zM1115 112h5v1h-5zM1125 112h5v1h-5zM1135 112h5v1h-5zM1145 112h5v1h-5zM1155 112h5v1h-5zM1165 112h5v1h-5zM1175 112h5v1h-5zM1185 112h5v1h-5zM1195 112h5v1h-5zM1205 112h5v1h-5zM1215 112h5v1h-5zM1225 112h5v1h-5zM1235 112h5v1h-5zM1245 112h5v1h-5zM1255 112h5v1h-5zM1265 112h5v1h-5zM1275 112h5v1h-5zM1285 112h5v1h-5zM1295 112h5v1h-5zM1305 112h5v1h-5zM1315 112h5v1h-5zM1325 112h5v1h-5zM1335 112h5v1h-5zM1345 112h5v1h-5zM1355 112h5v1h-5zM1365 112h5v1h-5zM1375 112h5v1h-5zM1385 112h5v1h-5zM1395 112h5v1h-5zM1405 112h5v1h-5zM1415 112h5v1h-5zM1425 112h5v1h-5zM1435 112h5v1h-5zM1445 112h5v1h-5zM1455 112h5v1h-5zM1465 112h5v1h-5zM1475 112h5v1h-5zM1485 112h5v1h-5zM1495 112h5v1h-5zM1505 112h5v1h-5zM1515 112h5v1h-5zM1525 112h5v1h-5zM1535 112h5v1h-5zM1545 112h5v1h-5zM1555 112h5v1h-5zM1565 112h5v1h-5zM1575 112h5v1h-5zM1585 112h5v1h-5zM1595 112h5v1h-5zM1605 112h5v1h-5zM1615 112h5v1h-5zM1625 112h5v1h-5zM1635 112h5v1h-5zM1645 112h5v1h-5zM1655 112h5v1h-5zM1665 112h5v1h-5zM1675 112h5v1h-5zM1685 112h5v1h-5zM1695 112h5v1h-5zM1705 112h5v1h-5zM1715 112h5v1h-5z" fill="#b9b9b9"/><rect x="3" y="229" width="1717" height="1" fill="#000" /><rect x="3" y="228" width="1748" height="1" fill="#1fc9d6" /><path d="M5 229h5v1h-5zM15 229h5v1h-5zM25 229h5v1h-5zM35 229h5v1h-5zM45 229h5v1h-5zM55 229h5v1h-5zM65 229h5v1h-5zM75 229h5v1h-5zM85 229h5v1h-5zM95 229h5v1h-5zM105 229h5v1h-5zM115 229h5v1h-5zM125 229h5v1h-5zM135 229h5v1h-5zM145 229h5v1h-5zM155 229h5v1h-5zM165 229h5v1h-5zM175 229h5v1h-5zM185 229h5v1h-5zM195 229h5v1h-5zM205 229h5v1h-5zM215 229h5v1h-5zM225 229h5v1h-5zM235 229h5v1h-5zM245 229h5v1h-5zM255 229h5v1h-5zM265 229h5v1h-5zM275 229h5v1h-5zM285 229h5v1h-5zM295 229h5v1h-5zM305 229h5v1h-5zM315 229h5v1h-5zM325 229h5v1h-5zM335 229h5v1h-5zM345 229h5v1h-5zM355 229h5v1h-5zM365 229h5v1h-5zM375 229h5v1h-5zM385 229h5v1h-5zM395 229h5v1h-5zM405 229h5v1h-5zM415 229h5v1h-5zM425 229h5v1h-5zM435 229h5v1h-5zM445 229h5v1h-5zM455 229h5v1h-5zM465 229h5v1h-5zM475 229h5v1h-5zM485 229h5v1h-5zM495 229h5v1h-5zM505 229h5v1h-5zM515 229h5v1h-5zM525 229h5v1h-5zM535 229h5v1h-5zM545 229h5v1h-5zM555 229h5v1h-5zM565 229h5v1h-5zM575 229h5v1h-5zM585 229h5v1h-5zM595 229h5v1h-5zM605 229h5v1h-5zM615 229h5v1h-5zM625 229h5v1h-5zM635 229h5v1h-5zM645 229h5v1h-5zM655 229h5v1h-5zM665 229h5v1h-5zM675 229h5v1h-5zM685 229h5v1h-5zM695 229h5v1h-5zM705 229h5v1h-5zM715 229h5v1h-5zM725 229h5v1h-5zM735 229h5v1h-5zM745 229h5v1h-5zM755 229h5v1h-5zM765 229h5v1h-5zM775 229h5v1h-5zM785 229h5v1h-5zM795 229h5v1h-5zM805 229h5v1h-5zM815 229h5v1h-5zM825 229h5v1h-5zM835 229h5v1h-5zM845 229h5v1h-5zM855 229h5v1h-5zM865 229h5v1h-5zM875 229h5v1h-5zM885 229h5v1h-5zM895 229h5v1h-5zM905 229h5v1h-5zM915 229h5v1h-5zM925 229h5v1h-5zM935 229h5v1h-5zM945 229h5v1h-5zM955 229h5v1h-5zM965 229h5v1h-5zM975 229h5v1h-5zM985 229h5v1h-5zM995 229h5v1h-5zM1005 229h5v1h-5zM1015 229h5v1h-5zM1025 229h5v1h-5zM1035 229h5v1h-5zM1045 229h5v1h-5zM1055 229h5v1h-5zM1065 229h5v1h-5zM1075 229h5v1h-5zM1085 229h5v1h-5zM1095 229h5v1h-5zM1105 229h5v1h-5zM1115 229h5v1h-5zM1125 229h5v1h-5zM1135 229h5v1h-5zM1145 229h5v1h-5zM1155 229h5v1h-5zM1165 229h5v1h-5zM1175 229h5v1h-5zM1185 229h5v1h-5zM1195 229h5v1h-5zM1205 229h5v1h-5zM1215 229h5v1h-5zM1225 229h5v1h-5zM1235 229h5v1h-5zM1245 229h5v1h-5zM1255 229h5v1h-5zM1265 229h5v1h-5zM1275 229h5v1h-5zM1285 229h5v1h-5zM1295 229h5v1h-5zM1305 229h5v1h-5zM1315 229h5v1h-5zM1325 229h5v1h-5zM1335 229h5v1h-5zM1345 229h5v1h-5zM1355 229h5v1h-5zM1365 229h5v1h-5zM1375 229h5v1h-5zM1385 229h5v1h-5zM1395 229h5v1h-5zM1405 229h5v1h-5zM1415 229h5v1h-5zM1425 229h5v1h-5zM1435 229h5v1h-5zM1445 229h5v1h-5zM1455 229h5v1h-5zM1465 229h5v1h-5zM1475 229h5v1h-5zM1485 229h5v1h-5zM1495 229h5v1h-5zM1505 229h5v1h-5zM1515 229h5v1h-5zM1525 229h5v1h-5zM1535 229h5v1h-5zM1545 229h5v1h-5zM1555 229h5v1h-5zM1565 229h5v1h-5zM1575 229h5v1h-5zM1585 229h5v1h-5zM1595 229h5v1h-5zM1605 229h5v1h-5zM1615 229h5v1h-5zM1625 229h5v1h-5zM1635 229h5v1h-5zM1645 229h5v1h-5zM1655 229h5v1h-5zM1665 229h5v1h-5zM1675 229h5v1h-5zM1685 229h5v1h-5zM1695 229h5v1h-5zM1705 229h5v1h-5zM1715 229h5v1h-5z" fill="#b9b9b9"/><rect x="3" y="346" width="1748" height="1" fill="#e9445c" /><path d="M5 346h5v1h-5zM15 346h5v1h-5zM25 346h5v1h-5zM35 346h5v1h-5zM45 346h5v1h-5zM55 346h5v1h-5zM65 346h5v1h-5zM75 346h5v1h-5zM85 346h5v1h-5zM95 346h5v1h-5zM105 346h5v1h-5zM115 346h5v1h-5zM125 346h5v1h-5zM135 346h5v1h-5zM145 346h5v1h-5zM155 346h5v1h-5zM165 346h5v1h-5zM175 346h5v1h-5zM185 346h5v1h-5zM195 346h5v1h-5zM205 346h5v1h-5zM215 346h5v1h-5zM225 346h5v1h-5zM235 346h5v1h-5zM245 346h5v1h-5zM255 346h5v1h-5zM265 346h5v1h-5zM275 346h5v1h-5zM285 346h5v1h-5zM295 346h5v1h-5zM305 346h5v1h-5zM315 346h5v1h-5zM325 346h5v1h-5zM335 346h5v1h-5zM345 346h5v1h-5zM355 346h5v1h-5zM365 346h5v1h-5zM375 346h5v1h-5zM385 346h5v1h-5zM395 346h5v1h-5zM405 346h5v1h-5zM415 346h5v1h-5zM425 346h5v1h-5zM435 346h5v1h-5zM445 346h5v1h-5zM455 346h5v1h-5zM465 346h5v1h-5zM475 346h5v1h-5zM485 346h5v1h-5zM495 346h5v1h-5zM505 346h5v1h-5zM515 346h5v1h-5zM525 346h5v1h-5zM535 346h5v1h-5zM545 346h5v1h-5zM555 346h5v1h-5zM565 346h5v1h-5zM575 346h5v1h-5zM585 346h5v1h-5zM595 346h5v1h-5zM605 346h5v1h-5zM615 346h5v1h-5zM625 346h5v1h-5zM635 346h5v1h-5zM645 346h5v1h-5zM655 346h5v1h-5zM665 346h5v1h-5zM675 346h5v1h-5zM685 346h5v1h-5zM695 346h5v1h-5zM705 346h5v1h-5zM715 346h5v1h-5zM725 346h5v1h-5zM735 346h5v1h-5zM745 346h5v1h-5zM755 346h5v1h-5zM765 346h5v1h-5zM775 346h5v1h-5zM785 346h5v1h-5zM795 346h5v1h-5zM805 346h5v1h-5zM815 346h5v1h-5zM825 346h5v1h-5zM835 346h5v1h-5zM845 346h5v1h-5zM855 346h5v1h-5zM865 346h5v1h-5zM875 346h5v1h-5zM885 346h5v1h-5zM895 346h5v1h-5zM905 346h5v1h-5zM915 346h5v1h-5zM925 346h5v1h-5zM935 346h5v1h-5zM945 346h5v1h-5zM955 346h5v1h-5zM965 346h5v1h-5zM975 346h5v1h-5zM985 346h5v1h-5zM995 346h5v1h-5zM1005 346h5v1h-5zM1015 346h5v1h-5zM1025 346h5v1h-5zM1035 346h5v1h-5zM1045 346h5v1h-5zM1055 346h5v1h-5zM1065 346h5v1h-5zM1075 346h5v1h-5zM1085 346h5v1h-5zM1095 346h5v1h-5zM1105 346h5v1h-5zM1115 346h5v1h-5zM1125 346h5v1h-5zM1135 346h5v1h-5zM1145 346h5v1h-5zM1155 346h5v1h-5zM1165 346h5v1h-5zM1175 346h5v1h-5zM1185 346h5v1h-5zM1195 346h5v1h-5zM1205 346h5v1h-5zM1215 346h5v1h-5zM1225 346h5v1h-5zM1235 346h5v1h-5zM1245 346h5v1h-5zM1255 346h5v1h-5zM1265 346h5v1h-5zM1275 346h5v1h-5zM1285 346h5v1h-5zM1295 346h5v1h-5zM1305 346h5v1h-5zM1315 346h5v1h-5zM1325 346h5v1h-5zM1335 346h5v1h-5zM1345 346h5v1h-5zM1355 346h5v1h-5zM1365 346h5v1h-5zM1375 346h5v1h-5zM1385 346h5v1h-5zM1395 346h5v1h-5zM1405 346h5v1h-5zM1415 346h5v1h-5zM1425 346h5v1h-5zM1435 346h5v1h-5zM1445 346h5v1h-5zM1455 346h5v1h-5zM1465 346h5v1h-5zM1475 346h5v1h-5zM1485 346h5v1h-5zM1495 346h5v1h-5zM1505 346h5v1h-5zM1515 346h5v1h-5zM1525 346h5v1h-5zM1535 346h5v1h-5zM1545 346h5v1h-5zM1555 346h5v1h-5zM1565 346h5v1h-5zM1575 346h5v1h-5zM1585 346h5v1h-5zM1595 346h5v1h-5zM1605 346h5v1h-5zM1615 346h5v1h-5zM1625 346h5v1h-5zM1635 346h5v1h-5zM1645 346h5v1h-5zM1655 346h5v1h-5zM1665 346h5v1h-5zM1675 346h5v1h-5zM1685 346h5v1h-5zM1695 346h5v1h-5zM1705 346h5v1h-5zM1715 346h5v1h-5z" fill="#b9b9b9"/><rect x="3" y="417" width="1748" height="1" fill="#8fd22c" /><path d="M5 417h5v1h-5zM15 417h5v1h-5zM25 417h5v1h-5zM35 417h5v1h-5zM45 417h5v1h-5zM55 417h5v1h-5zM65 417h5v1h-5zM75 417h5v1h-5zM85 417h5v1h-5zM95 417h5v1h-5zM105 417h5v1h-5zM115 417h5v1h-5zM125 417h5v1h-5zM135 417h5v1h-5zM145 417h5v1h-5zM155 417h5v1h-5zM165 417h5v1h-5zM175 417h5v1h-5zM185 417h5v1h-5zM195 417h5v1h-5zM205 417h5v1h-5zM215 417h5v1h-5zM225 417h5v1h-5zM235 417h5v1h-5zM245 417h5v1h-5zM255 417h5v1h-5zM265 417h5v1h-5zM275 417h5v1h-5zM285 417h5v1h-5zM295 417h5v1h-5zM305 417h5v1h-5zM315 417h5v1h-5zM325 417h5v1h-5zM335 417h5v1h-5zM345 417h5v1h-5zM355 417h5v1h-5zM365 417h5v1h-5zM375 417h5v1h-5zM385 417h5v1h-5zM395 417h5v1h-5zM405 417h5v1h-5zM415 417h5v1h-5zM425 417h5v1h-5zM435 417h5v1h-5zM445 417h5v1h-5zM455 417h5v1h-5zM465 417h5v1h-5zM475 417h5v1h-5zM485 417h5v1h-5zM495 417h5v1h-5zM505 417h5v1h-5zM515 417h5v1h-5zM525 417h5v1h-5zM535 417h5v1h-5zM545 417h5v1h-5zM555 417h5v1h-5zM565 417h5v1h-5zM575 417h5v1h-5zM585 417h5v1h-5zM595 417h5v1h-5zM605 417h5v1h-5zM615 417h5v1h-5zM625 417h5v1h-5zM635 417h5v1h-5zM645 417h5v1h-5zM655 417h5v1h-5zM665 417h5v1h-5zM675 417h5v1h-5zM685 417h5v1h-5zM695 417h5v1h-5zM705 417h5v1h-5zM715 417h5v1h-5zM725 417h5v1h-5zM735 417h5v1h-5zM745 417h5v1h-5zM755 417h5v1h-5zM765 417h5v1h-5zM775 417h5v1h-5zM785 417h5v1h-5zM795 417h5v1h-5zM805 417h5v1h-5zM815 417h5v1h-5zM825 417h5v1h-5zM835 417h5v1h-5zM845 417h5v1h-5zM855 417h5v1h-5zM865 417h5v1h-5zM875 417h5v1h-5zM885 417h5v1h-5zM895 417h5v1h-5zM905 417h5v1h-5zM915 417h5v1h-5zM925 417h5v1h-5zM935 417h5v1h-5zM945 417h5v1h-5zM955 417h5v1h-5zM965 417h5v1h-5zM975 417h5v1h-5zM985 417h5v1h-5zM995 417h5v1h-5zM1005 417h5v1h-5zM1015 417h5v1h-5zM1025 417h5v1h-5zM1035 417h5v1h-5zM1045 417h5v1h-5zM1055 417h5v1h-5zM1065 417h5v1h-5zM1075 417h5v1h-5zM1085 417h5v1h-5zM1095 417h5v1h-5zM1105 417h5v1h-5zM1115 417h5v1h-5zM1125 417h5v1h-5zM1135 417h5v1h-5zM1145 417h5v1h-5zM1155 417h5v1h-5zM1165 417h5v1h-5zM1175 417h5v1h-5zM1185 417h5v1h-5zM1195 417h5v1h-5zM1205 417h5v1h-5zM1215 417h5v1h-5zM1225 417h5v1h-5zM1235 417h5v1h-5zM1245 417h5v1h-5zM1255 417h5v1h-5zM1265 417h5v1h-5zM1275 417h5v1h-5zM1285 417h5v1h-5zM1295 417h5v1h-5zM1305 417h5v1h-5zM1315 417h5v1h-5zM1325 417h5v1h-5zM1335 417h5v1h-5zM1345 417h5v1h-5zM1355 417h5v1h-5zM1365 417h5v1h-5zM1375 417h5v1h-5zM1385 417h5v1h-5zM1395 417h5v1h-5zM1405 417h5v1h-5zM1415 417h5v1h-5zM1425 417h5v1h-5zM1435 417h5v1h-5zM1445 417h5v1h-5zM1455 417h5v1h-5zM1465 417h5v1h-5zM1475 417h5v1h-5zM1485 417h5v1h-5zM1495 417h5v1h-5zM1505 417h5v1h-5zM1515 417h5v1h-5zM1525 417h5v1h-5zM1535 417h5v1h-5zM1545 417h5v1h-5zM1555 417h5v1h-5zM1565 417h5v1h-5zM1575 417h5v1h-5zM1585 417h5v1h-5zM1595 417h5v1h-5zM1605 417h5v1h-5zM1615 417h5v1h-5zM1625 417h5v1h-5zM1635 417h5v1h-5zM1645 417h5v1h-5zM1655 417h5v1h-5zM1665 417h5v1h-5zM1675 417h5v1h-5zM1685 417h5v1h-5zM1695 417h5v1h-5zM1705 417h5v1h-5zM1715 417h5v1h-5z" fill="#b9b9b9"/><rect x="3" y="626" width="1717" height="1" fill="#000" /><rect x="3" y="625" width="1748" height="1" fill="#f7951f" /><path d="M5 626h5v1h-5zM15 626h5v1h-5zM25 626h5v1h-5zM35 626h5v1h-5zM45 626h5v1h-5zM55 626h5v1h-5zM65 626h5v1h-5zM75 626h5v1h-5zM85 626h5v1h-5zM95 626h5v1h-5zM105 626h5v1h-5zM115 626h5v1h-5zM125 626h5v1h-5zM135 626h5v1h-5zM145 626h5v1h-5zM155 626h5v1h-5zM165 626h5v1h-5zM175 626h5v1h-5zM185 626h5v1h-5zM195 626h5v1h-5zM205 626h5v1h-5zM215 626h5v1h-5zM225 626h5v1h-5zM235 626h5v1h-5zM245 626h5v1h-5zM255 626h5v1h-5zM265 626h5v1h-5zM275 626h5v1h-5zM285 626h5v1h-5zM295 626h5v1h-5zM305 626h5v1h-5zM315 626h5v1h-5zM325 626h5v1h-5zM335 626h5v1h-5zM345 626h5v1h-5zM355 626h5v1h-5zM365 626h5v1h-5zM375 626h5v1h-5zM385 626h5v1h-5zM395 626h5v1h-5zM405 626h5v1h-5zM415 626h5v1h-5zM425 626h5v1h-5zM435 626h5v1h-5zM445 626h5v1h-5zM455 626h5v1h-5zM465 626h5v1h-5zM475 626h5v1h-5zM485 626h5v1h-5zM495 626h5v1h-5zM505 626h5v1h-5zM515 626h5v1h-5zM525 626h5v1h-5zM535 626h5v1h-5zM545 626h5v1h-5zM555 626h5v1h-5zM565 626h5v1h-5zM575 626h5v1h-5zM585 626h5v1h-5zM595 626h5v1h-5zM605 626h5v1h-5zM615 626h5v1h-5zM625 626h5v1h-5zM635 626h5v1h-5zM645 626h5v1h-5zM655 626h5v1h-5zM665 626h5v1h-5zM675 626h5v1h-5zM685 626h5v1h-5zM695 626h5v1h-5zM705 626h5v1h-5zM715 626h5v1h-5zM725 626h5v1h-5zM735 626h5v1h-5zM745 626h5v1h-5zM755 626h5v1h-5zM765 626h5v1h-5zM775 626h5v1h-5zM785 626h5v1h-5zM795 626h5v1h-5zM805 626h5v1h-5zM815 626h5v1h-5zM825 626h5v1h-5zM835 626h5v1h-5zM845 626h5v1h-5zM855 626h5v1h-5zM865 626h5v1h-5zM875 626h5v1h-5zM885 626h5v1h-5zM895 626h5v1h-5zM905 626h5v1h-5zM915 626h5v1h-5zM925 626h5v1h-5zM935 626h5v1h-5zM945 626h5v1h-5zM955 626h5v1h-5zM965 626h5v1h-5zM975 626h5v1h-5zM985 626h5v1h-5zM995 626h5v1h-5zM1005 626h5v1h-5zM1015 626h5v1h-5zM1025 626h5v1h-5zM1035 626h5v1h-5zM1045 626h5v1h-5zM1055 626h5v1h-5zM1065 626h5v1h-5zM1075 626h5v1h-5zM1085 626h5v1h-5zM1095 626h5v1h-5zM1105 626h5v1h-5zM1115 626h5v1h-5zM1125 626h5v1h-5zM1135 626h5v1h-5zM1145 626h5v1h-5zM1155 626h5v1h-5zM1165 626h5v1h-5zM1175 626h5v1h-5zM1185 626h5v1h-5zM1195 626h5v1h-5zM1205 626h5v1h-5zM1215 626h5v1h-5zM1225 626h5v1h-5zM1235 626h5v1h-5zM1245 626h5v1h-5zM1255 626h5v1h-5zM1265 626h5v1h-5zM1275 626h5v1h-5zM1285 626h5v1h-5zM1295 626h5v1h-5zM1305 626h5v1h-5zM1315 626h5v1h-5zM1325 626h5v1h-5zM1335 626h5v1h-5zM1345 626h5v1h-5zM1355 626h5v1h-5zM1365 626h5v1h-5zM1375 626h5v1h-5zM1385 626h5v1h-5zM1395 626h5v1h-5zM1405 626h5v1h-5zM1415 626h5v1h-5zM1425 626h5v1h-5zM1435 626h5v1h-5zM1445 626h5v1h-5zM1455 626h5v1h-5zM1465 626h5v1h-5zM1475 626h5v1h-5zM1485 626h5v1h-5zM1495 626h5v1h-5zM1505 626h5v1h-5zM1515 626h5v1h-5zM1525 626h5v1h-5zM1535 626h5v1h-5zM1545 626h5v1h-5zM1555 626h5v1h-5zM1565 626h5v1h-5zM1575 626h5v1h-5zM1585 626h5v1h-5zM1595 626h5v1h-5zM1605 626h5v1h-5zM1615 626h5v1h-5zM1625 626h5v1h-5zM1635 626h5v1h-5zM1645 626h5v1h-5zM1655 626h5v1h-5zM1665 626h5v1h-5zM1675 626h5v1h-5zM1685 626h5v1h-5zM1695 626h5v1h-5zM1705 626h5v1h-5zM1715 626h5v1h-5z" fill="#b9b9b9"/><rect x="3" y="697" width="1717" height="1" fill="#000" /><rect x="3" y="696" width="1748" height="1" fill="#2a2ccb" /><path d="M5 697h5v1h-5zM15 697h5v1h-5zM25 697h5v1h-5zM35 697h5v1h-5zM45 697h5v1h-5zM55 697h5v1h-5zM65 697h5v1h-5zM75 697h5v1h-5zM85 697h5v1h-5zM95 697h5v1h-5zM105 697h5v1h-5zM115 697h5v1h-5zM125 697h5v1h-5zM135 697h5v1h-5zM145 697h5v1h-5zM155 697h5v1h-5zM165 697h5v1h-5zM175 697h5v1h-5zM185 697h5v1h-5zM195 697h5v1h-5zM205 697h5v1h-5zM215 697h5v1h-5zM225 697h5v1h-5zM235 697h5v1h-5zM245 697h5v1h-5zM255 697h5v1h-5zM265 697h5v1h-5zM275 697h5v1h-5zM285 697h5v1h-5zM295 697h5v1h-5zM305 697h5v1h-5zM315 697h5v1h-5zM325 697h5v1h-5zM335 697h5v1h-5zM345 697h5v1h-5zM355 697h5v1h-5zM365 697h5v1h-5zM375 697h5v1h-5zM385 697h5v1h-5zM395 697h5v1h-5zM405 697h5v1h-5zM415 697h5v1h-5zM425 697h5v1h-5zM435 697h5v1h-5zM445 697h5v1h-5zM455 697h5v1h-5zM465 697h5v1h-5zM475 697h5v1h-5zM485 697h5v1h-5zM495 697h5v1h-5zM505 697h5v1h-5zM515 697h5v1h-5zM525 697h5v1h-5zM535 697h5v1h-5zM545 697h5v1h-5zM555 697h5v1h-5zM565 697h5v1h-5zM575 697h5v1h-5zM585 697h5v1h-5zM595 697h5v1h-5zM605 697h5v1h-5zM615 697h5v1h-5zM625 697h5v1h-5zM635 697h5v1h-5zM645 697h5v1h-5zM655 697h5v1h-5zM665 697h5v1h-5zM675 697h5v1h-5zM685 697h5v1h-5zM695 697h5v1h-5zM705 697h5v1h-5zM715 697h5v1h-5zM725 697h5v1h-5zM735 697h5v1h-5zM745 697h5v1h-5zM755 697h5v1h-5zM765 697h5v1h-5zM775 697h5v1h-5zM785 697h5v1h-5zM795 697h5v1h-5zM805 697h5v1h-5zM815 697h5v1h-5zM825 697h5v1h-5zM835 697h5v1h-5zM845 697h5v1h-5zM855 697h5v1h-5zM865 697h5v1h-5zM875 697h5v1h-5zM885 697h5v1h-5zM895 697h5v1h-5zM905 697h5v1h-5zM915 697h5v1h-5zM925 697h5v1h-5zM935 697h5v1h-5zM945 697h5v1h-5zM955 697h5v1h-5zM965 697h5v1h-5zM975 697h5v1h-5zM985 697h5v1h-5zM995 697h5v1h-5zM1005 697h5v1h-5zM1015 697h5v1h-5zM1025 697h5v1h-5zM1035 697h5v1h-5zM1045 697h5v1h-5zM1055 697h5v1h-5zM1065 697h5v1h-5zM1075 697h5v1h-5zM1085 697h5v1h-5zM1095 697h5v1h-5zM1105 697h5v1h-5zM1115 697h5v1h-5zM1125 697h5v1h-5zM1135 697h5v1h-5zM1145 697h5v1h-5zM1155 697h5v1h-5zM1165 697h5v1h-5zM1175 697h5v1h-5zM1185 697h5v1h-5zM1195 697h5v1h-5zM1205 697h5v1h-5zM1215 697h5v1h-5zM1225 697h5v1h-5zM1235 697h5v1h-5zM1245 697h5v1h-5zM1255 697h5v1h-5zM1265 697h5v1h-5zM1275 697h5v1h-5zM1285 697h5v1h-5zM1295 697h5v1h-5zM1305 697h5v1h-5zM1315 697h5v1h-5zM1325 697h5v1h-5zM1335 697h5v1h-5zM1345 697h5v1h-5zM1355 697h5v1h-5zM1365 697h5v1h-5zM1375 697h5v1h-5zM1385 697h5v1h-5zM1395 697h5v1h-5zM1405 697h5v1h-5zM1415 697h5v1h-5zM1425 697h5v1h-5zM1435 697h5v1h-5zM1445 697h5v1h-5zM1455 697h5v1h-5zM1465 697h5v1h-5zM1475 697h5v1h-5zM1485 697h5v1h-5zM1495 697h5v1h-5zM1505 697h5v1h-5zM1515 697h5v1h-5zM1525 697h5v1h-5zM1535 697h5v1h-5zM1545 697h5v1h-5zM1555 697h5v1h-5zM1565 697h5v1h-5zM1575 697h5v1h-5zM1585 697h5v1h-5zM1595 697h5v1h-5zM1605 697h5v1h-5zM1615 697h5v1h-5zM1625 697h5v1h-5zM1635 697h5v1h-5zM1645 697h5v1h-5zM1655 697h5v1h-5zM1665 697h5v1h-5zM1675 697h5v1h-5zM1685 697h5v1h-5zM1695 697h5v1h-5zM1705 697h5v1h-5zM1715 697h5v1h-5z" fill="#b9b9b9"/><rect x="3" y="814" width="1748" height="1" fill="#dc469c" /><path d="M5 814h5v1h-5zM15 814h5v1h-5zM25 814h5v1h-5zM35 814h5v1h-5zM45 814h5v1h-5zM55 814h5v1h-5zM65 814h5v1h-5zM75 814h5v1h-5zM85 814h5v1h-5zM95 814h5v1h-5zM105 814h5v1h-5zM115 814h5v1h-5zM125 814h5v1h-5zM135 814h5v1h-5zM145 814h5v1h-5zM155 814h5v1h-5zM165 814h5v1h-5zM175 814h5v1h-5zM185 814h5v1h-5zM195 814h5v1h-5zM205 814h5v1h-5zM215 814h5v1h-5zM225 814h5v1h-5zM235 814h5v1h-5zM245 814h5v1h-5zM255 814h5v1h-5zM265 814h5v1h-5zM275 814h5v1h-5zM285 814h5v1h-5zM295 814h5v1h-5zM305 814h5v1h-5zM315 814h5v1h-5zM325 814h5v1h-5zM335 814h5v1h-5zM345 814h5v1h-5zM355 814h5v1h-5zM365 814h5v1h-5zM375 814h5v1h-5zM385 814h5v1h-5zM395 814h5v1h-5zM405 814h5v1h-5zM415 814h5v1h-5zM425 814h5v1h-5zM435 814h5v1h-5zM445 814h5v1h-5zM455 814h5v1h-5zM465 814h5v1h-5zM475 814h5v1h-5zM485 814h5v1h-5zM495 814h5v1h-5zM505 814h5v1h-5zM515 814h5v1h-5zM525 814h5v1h-5zM535 814h5v1h-5zM545 814h5v1h-5zM555 814h5v1h-5zM565 814h5v1h-5zM575 814h5v1h-5zM585 814h5v1h-5zM595 814h5v1h-5zM605 814h5v1h-5zM615 814h5v1h-5zM625 814h5v1h-5zM635 814h5v1h-5zM645 814h5v1h-5zM655 814h5v1h-5zM665 814h5v1h-5zM675 814h5v1h-5zM685 814h5v1h-5zM695 814h5v1h-5zM705 814h5v1h-5zM715 814h5v1h-5zM725 814h5v1h-5zM735 814h5v1h-5zM745 814h5v1h-5zM755 814h5v1h-5zM765 814h5v1h-5zM775 814h5v1h-5zM785 814h5v1h-5zM795 814h5v1h-5zM805 814h5v1h-5zM815 814h5v1h-5zM825 814h5v1h-5zM835 814h5v1h-5zM845 814h5v1h-5zM855 814h5v1h-5zM865 814h5v1h-5zM875 814h5v1h-5zM885 814h5v1h-5zM895 814h5v1h-5zM905 814h5v1h-5zM915 814h5v1h-5zM925 814h5v1h-5zM935 814h5v1h-5zM945 814h5v1h-5zM955 814h5v1h-5zM965 814h5v1h-5zM975 814h5v1h-5zM985 814h5v1h-5zM995 814h5v1h-5zM1005 814h5v1h-5zM1015 814h5v1h-5zM1025 814h5v1h-5zM1035 814h5v1h-5zM1045 814h5v1h-5zM1055 814h5v1h-5zM1065 814h5v1h-5zM1075 814h5v1h-5zM1085 814h5v1h-5zM1095 814h5v1h-5zM1105 814h5v1h-5zM1115 814h5v1h-5zM1125 814h5v1h-5zM1135 814h5v1h-5zM1145 814h5v1h-5zM1155 814h5v1h-5zM1165 814h5v1h-5zM1175 814h5v1h-5zM1185 814h5v1h-5zM1195 814h5v1h-5zM1205 814h5v1h-5zM1215 814h5v1h-5zM1225 814h5v1h-5zM1235 814h5v1h-5zM1245 814h5v1h-5zM1255 814h5v1h-5zM1265 814h5v1h-5zM1275 814h5v1h-5zM1285 814h5v1h-5zM1295 814h5v1h-5zM1305 814h5v1h-5zM1315 814h5v1h-5zM1325 814h5v1h-5zM1335 814h5v1h-5zM1345 814h5v1h-5zM1355 814h5v1h-5zM1365 814h5v1h-5zM1375 814h5v1h-5zM1385 814h5v1h-5zM1395 814h5v1h-5zM1405 814h5v1h-5zM1415 814h5v1h-5zM1425 814h5v1h-5zM1435 814h5v1h-5zM1445 814h5v1h-5zM1455 814h5v1h-5zM1465 814h5v1h-5zM1475 814h5v1h-5zM1485 814h5v1h-5zM1495 814h5v1h-5zM1505 814h5v1h-5zM1515 814h5v1h-5zM1525 814h5v1h-5zM1535 814h5v1h-5zM1545 814h5v1h-5zM1555 814h5v1h-5zM1565 814h5v1h-5zM1575 814h5v1h-5zM1585 814h5v1h-5zM1595 814h5v1h-5zM1605 814h5v1h-5zM1615 814h5v1h-5zM1625 814h5v1h-5zM1635 814h5v1h-5zM1645 814h5v1h-5zM1655 814h5v1h-5zM1665 814h5v1h-5zM1675 814h5v1h-5zM1685 814h5v1h-5zM1695 814h5v1h-5zM1705 814h5v1h-5zM1715 814h5v1h-5z" fill="#b9b9b9"/><rect x="3" y="933" width="1717" height="1" fill="#000" /><path d="M5 933h5v1h-5zM15 933h5v1h-5zM25 933h5v1h-5zM35 933h5v1h-5zM45 933h5v1h-5zM55 933h5v1h-5zM65 933h5v1h-5zM75 933h5v1h-5zM85 933h5v1h-5zM95 933h5v1h-5zM105 933h5v1h-5zM115 933h5v1h-5zM125 933h5v1h-5zM135 933h5v1h-5zM145 933h5v1h-5zM155 933h5v1h-5zM165 933h5v1h-5zM175 933h5v1h-5zM185 933h5v1h-5zM195 933h5v1h-5zM205 933h5v1h-5zM215 933h5v1h-5zM225 933h5v1h-5zM235 933h5v1h-5zM245 933h5v1h-5zM255 933h5v1h-5zM265 933h5v1h-5zM275 933h5v1h-5zM285 933h5v1h-5zM295 933h5v1h-5zM305 933h5v1h-5zM315 933h5v1h-5zM325 933h5v1h-5zM335 933h5v1h-5zM345 933h5v1h-5zM355 933h5v1h-5zM365 933h5v1h-5zM375 933h5v1h-5zM385 933h5v1h-5zM395 933h5v1h-5zM405 933h5v1h-5zM415 933h5v1h-5zM425 933h5v1h-5zM435 933h5v1h-5zM445 933h5v1h-5zM455 933h5v1h-5zM465 933h5v1h-5zM475 933h5v1h-5zM485 933h5v1h-5zM495 933h5v1h-5zM505 933h5v1h-5zM515 933h5v1h-5zM525 933h5v1h-5zM535 933h5v1h-5zM545 933h5v1h-5zM555 933h5v1h-5zM565 933h5v1h-5zM575 933h5v1h-5zM585 933h5v1h-5zM595 933h5v1h-5zM605 933h5v1h-5zM615 933h5v1h-5zM625 933h5v1h-5zM635 933h5v1h-5zM645 933h5v1h-5zM655 933h5v1h-5zM665 933h5v1h-5zM675 933h5v1h-5zM685 933h5v1h-5zM695 933h5v1h-5zM705 933h5v1h-5zM715 933h5v1h-5zM725 933h5v1h-5zM735 933h5v1h-5zM745 933h5v1h-5zM755 933h5v1h-5zM765 933h5v1h-5zM775 933h5v1h-5zM785 933h5v1h-5zM795 933h5v1h-5zM805 933h5v1h-5zM815 933h5v1h-5zM825 933h5v1h-5zM835 933h5v1h-5zM845 933h5v1h-5zM855 933h5v1h-5zM865 933h5v1h-5zM875 933h5v1h-5zM885 933h5v1h-5zM895 933h5v1h-5zM905 933h5v1h-5zM915 933h5v1h-5zM925 933h5v1h-5zM935 933h5v1h-5zM945 933h5v1h-5zM955 933h5v1h-5zM965 933h5v1h-5zM975 933h5v1h-5zM985 933h5v1h-5zM995 933h5v1h-5zM1005 933h5v1h-5zM1015 933h5v1h-5zM1025 933h5v1h-5zM1035 933h5v1h-5zM1045 933h5v1h-5zM1055 933h5v1h-5zM1065 933h5v1h-5zM1075 933h5v1h-5zM1085 933h5v1h-5zM1095 933h5v1h-5zM1105 933h5v1h-5zM1115 933h5v1h-5zM1125 933h5v1h-5zM1135 933h5v1h-5zM1145 933h5v1h-5zM1155 933h5v1h-5zM1165 933h5v1h-5zM1175 933h5v1h-5zM1185 933h5v1h-5zM1195 933h5v1h-5zM1205 933h5v1h-5zM1215 933h5v1h-5zM1225 933h5v1h-5zM1235 933h5v1h-5zM1245 933h5v1h-5zM1255 933h5v1h-5zM1265 933h5v1h-5zM1275 933h5v1h-5zM1285 933h5v1h-5zM1295 933h5v1h-5zM1305 933h5v1h-5zM1315 933h5v1h-5zM1325 933h5v1h-5zM1335 933h5v1h-5zM1345 933h5v1h-5zM1355 933h5v1h-5zM1365 933h5v1h-5zM1375 933h5v1h-5zM1385 933h5v1h-5zM1395 933h5v1h-5zM1405 933h5v1h-5zM1415 933h5v1h-5zM1425 933h5v1h-5zM1435 933h5v1h-5zM1445 933h5v1h-5zM1455 933h5v1h-5zM1465 933h5v1h-5zM1475 933h5v1h-5zM1485 933h5v1h-5zM1495 933h5v1h-5zM1505 933h5v1h-5zM1515 933h5v1h-5zM1525 933h5v1h-5zM1535 933h5v1h-5zM1545 933h5v1h-5zM1555 933h5v1h-5zM1565 933h5v1h-5zM1575 933h5v1h-5zM1585 933h5v1h-5zM1595 933h5v1h-5zM1605 933h5v1h-5zM1615 933h5v1h-5zM1625 933h5v1h-5zM1635 933h5v1h-5zM1645 933h5v1h-5zM1655 933h5v1h-5zM1665 933h5v1h-5zM1675 933h5v1h-5zM1685 933h5v1h-5zM1695 933h5v1h-5zM1705 933h5v1h-5zM1715 933h5v1h-5z" fill="#b9b9b9"/><rect x="877" y="221" width="1" height="14" fill="#1fc9d6" /><rect x="879" y="222" width="1" height="12" fill="#1fc9d6" /><rect x="1057" y="218" width="1" height="20" fill="#1fc9d6" opacity="0.75"/><rect x="1058" y="215" width="1" height="27" fill="#1fc9d6" /><rect x="1061" y="226" width="1" height="6" fill="#1fc9d6" opacity="0.8"/><rect x="877" y="341" width="1" height="11" fill="#e9445c" /><rect x="879" y="341" width="1" height="11" fill="#e9445c" /><rect x="884" y="344" width="1" height="2" fill="#e9445c" opacity="0.6"/><rect x="1057" y="342" width="1" height="9" fill="#e9445c" opacity="0.75"/><rect x="1058" y="342" width="1" height="9" fill="#e9445c" /><rect x="1061" y="344" width="1" height="3" fill="#e9445c" opacity="0.8"/><rect x="877" y="405" width="1" height="24" fill="#8fd22c" /><rect x="879" y="406" width="1" height="22" fill="#8fd22c" /><rect x="1057" y="409" width="1" height="15" fill="#8fd22c" opacity="0.75"/><rect x="1058" y="406" width="1" height="20" fill="#8fd22c" /><rect x="1061" y="413" width="1" height="7" fill="#8fd22c" opacity="0.8"/><rect x="877" y="619" width="1" height="18" fill="#f7951f" /><rect x="879" y="612" width="1" height="25" fill="#f7951f" /><rect x="1057" y="617" width="1" height="20" fill="#f7951f" opacity="0.75"/><rect x="1058" y="615" width="1" height="22" fill="#f7951f" /><rect x="1061" y="622" width="1" height="6" fill="#f7951f" opacity="0.8"/><rect x="3" y="932" width="232" height="1" fill="#12d99b" /><rect x="235" y="931" width="605" height="1" fill="#12d99b" /><rect x="236" y="932" width="110" height="1" fill="#12d99b" opacity="0.55"/><rect x="840" y="930" width="37" height="1" fill="#12d99b" /><rect x="876" y="909" width="1" height="22" fill="#12d99b" /><rect x="877" y="895" width="1" height="20" fill="#12d99b" /><rect x="879" y="897" width="1" height="9" fill="#12d99b" /><rect x="882" y="895" width="869" height="1" fill="#12d99b" /><rect x="1057" y="882" width="1" height="19" fill="#12d99b" opacity="0.75"/><rect x="1058" y="879" width="1" height="25" fill="#12d99b" /><rect x="1061" y="891" width="1" height="7" fill="#12d99b" opacity="0.8"/><path d="M877 60h1v5h-1zM877 70h1v5h-1zM877 80h1v5h-1zM877 90h1v5h-1zM877 100h1v5h-1zM877 110h1v5h-1zM877 120h1v5h-1zM877 130h1v5h-1zM877 140h1v5h-1zM877 150h1v5h-1zM877 160h1v5h-1zM877 177h1v5h-1zM877 187h1v5h-1zM877 197h1v5h-1zM877 207h1v5h-1zM877 217h1v5h-1zM877 227h1v5h-1zM877 237h1v5h-1zM877 247h1v5h-1zM877 257h1v5h-1zM877 267h1v5h-1zM877 277h1v5h-1zM877 294h1v5h-1zM877 304h1v5h-1zM877 314h1v5h-1zM877 324h1v5h-1zM877 334h1v5h-1zM877 344h1v5h-1zM877 354h1v5h-1zM877 364h1v5h-1zM877 374h1v5h-1zM877 384h1v5h-1zM877 394h1v5h-1zM877 411h1v5h-1zM877 421h1v5h-1zM877 431h1v5h-1zM877 441h1v5h-1zM877 451h1v5h-1zM877 461h1v5h-1zM877 471h1v5h-1zM877 481h1v5h-1zM877 491h1v5h-1zM877 501h1v5h-1zM877 511h1v5h-1zM877 528h1v5h-1zM877 538h1v5h-1zM877 548h1v5h-1zM877 558h1v5h-1zM877 568h1v5h-1zM877 578h1v5h-1zM877 588h1v5h-1zM877 598h1v5h-1zM877 608h1v5h-1zM877 618h1v5h-1zM877 628h1v5h-1zM877 645h1v5h-1zM877 655h1v5h-1zM877 665h1v5h-1zM877 675h1v5h-1zM877 685h1v5h-1zM877 695h1v5h-1zM877 705h1v5h-1zM877 715h1v5h-1zM877 725h1v5h-1zM877 735h1v5h-1zM877 745h1v5h-1zM877 762h1v5h-1zM877 772h1v5h-1zM877 782h1v5h-1zM877 792h1v5h-1zM877 802h1v5h-1zM877 812h1v5h-1zM877 822h1v5h-1zM877 832h1v5h-1zM877 842h1v5h-1zM877 852h1v5h-1zM877 862h1v5h-1zM877 881h1v5h-1zM877 891h1v5h-1zM877 901h1v5h-1zM877 911h1v5h-1zM877 921h1v5h-1zM877 931h1v5h-1zM877 941h1v5h-1zM877 951h1v5h-1zM877 961h1v5h-1zM877 971h1v5h-1zM877 981h1v5h-1z" fill="#c8c8c8"/><rect x="161.0" y="976.5" width="35" height="15" fill="#000"/><rect x="336.0" y="976.5" width="35" height="15" fill="#000"/><rect x="510.0" y="976.5" width="35" height="15" fill="#000"/><rect x="685.0" y="976.5" width="35" height="15" fill="#000"/><rect x="867.0" y="976.5" width="21" height="15" fill="#000"/><rect x="1036.5" y="976.5" width="32" height="15" fill="#000"/><rect x="1211.5" y="976.5" width="32" height="15" fill="#000"/><rect x="1385.5" y="976.5" width="32" height="15" fill="#000"/><rect x="1560.5" y="976.5" width="32" height="15" fill="#000"/>
</svg>
<svg style="position:absolute;left:0;top:0" width="1920" height="1080">
<path d="M9.2 99.6 H28.8 Q30.2 99.6 31.2 100.69999999999999 L40.8 111.3 Q41.5 112 40.8 112.7 L31.2 123.2 Q30.2 124.3 28.8 124.3 H9.2 Q6.7 124.3 6.7 121.8 V102.1 Q6.7 99.6 9.2 99.6 Z" fill="#1d1b08" stroke="#f2e424" stroke-width="1.5"/><path d="M9.2 216.6 H28.8 Q30.2 216.6 31.2 217.7 L40.8 228.3 Q41.5 229 40.8 229.7 L31.2 240.20000000000002 Q30.2 241.3 28.8 241.3 H9.2 Q6.7 241.3 6.7 238.8 V219.1 Q6.7 216.6 9.2 216.6 Z" fill="#061517" stroke="#1fc9d6" stroke-width="1.5"/><path d="M9.2 333.6 H28.8 Q30.2 333.6 31.2 334.70000000000005 L40.8 345.3 Q41.5 346 40.8 346.7 L31.2 357.2 Q30.2 358.3 28.8 358.3 H9.2 Q6.7 358.3 6.7 355.8 V336.1 Q6.7 333.6 9.2 333.6 Z" fill="#1c0b0e" stroke="#e9445c" stroke-width="1.5"/><path d="M9.2 450.6 H28.8 Q30.2 450.6 31.2 451.70000000000005 L40.8 462.3 Q41.5 463 40.8 463.7 L31.2 474.2 Q30.2 475.3 28.8 475.3 H9.2 Q6.7 475.3 6.7 472.8 V453.1 Q6.7 450.6 9.2 450.6 Z" fill="#111808" stroke="#8fd22c" stroke-width="1.5"/><path d="M9.2 567.6 H28.8 Q30.2 567.6 31.2 568.7 L40.8 579.3 Q41.5 580 40.8 580.7 L31.2 591.1999999999999 Q30.2 592.3 28.8 592.3 H9.2 Q6.7 592.3 6.7 589.8 V570.1 Q6.7 567.6 9.2 567.6 Z" fill="#1f1408" stroke="#f7951f" stroke-width="1.5"/><path d="M9.2 684.6 H28.8 Q30.2 684.6 31.2 685.7 L40.8 696.3 Q41.5 697 40.8 697.7 L31.2 708.1999999999999 Q30.2 709.3 28.8 709.3 H9.2 Q6.7 709.3 6.7 706.8 V687.1 Q6.7 684.6 9.2 684.6 Z" fill="#08091c" stroke="#2a2ccb" stroke-width="1.5"/><path d="M9.2 801.6 H28.8 Q30.2 801.6 31.2 802.7 L40.8 813.3 Q41.5 814 40.8 814.7 L31.2 825.1999999999999 Q30.2 826.3 28.8 826.3 H9.2 Q6.7 826.3 6.7 823.8 V804.1 Q6.7 801.6 9.2 801.6 Z" fill="#1c0a14" stroke="#dc469c" stroke-width="1.5"/><path d="M9.2 920.2 H28.8 Q30.2 920.2 31.2 921.3000000000001 L40.8 931.3 Q41.5 932 40.8 932.7 L31.2 942.9 Q30.2 944 28.8 944 H9.2 Q6.7 944 6.7 941.5 V922.7 Q6.7 920.2 9.2 920.2 Z" fill="#12d99b" stroke="#12d99b" stroke-width="0"/>
</svg>
<div class="t" style="left:14.6px;top:105.44px;font-size:12px;color:#f2e424;font-weight:normal;">C<span style="margin-left:3.2px">1</span></div><div class="t" style="left:53px;top:101.74px;font-size:18.5px;color:#f2e424;font-weight:normal;letter-spacing:0.7px">U_loop-b</div><div class="t" style="left:14.6px;top:222.44px;font-size:12px;color:#1fc9d6;font-weight:normal;">C<span style="margin-left:3.2px">2</span></div><div class="t" style="left:53px;top:218.74px;font-size:18.5px;color:#1fc9d6;font-weight:normal;letter-spacing:0.75px">YAP a</div><div class="t" style="left:14.6px;top:339.44px;font-size:12px;color:#e9445c;font-weight:normal;">C<span style="margin-left:3.2px">3</span></div><div class="t" style="left:53px;top:335.74px;font-size:18.5px;color:#e9445c;font-weight:normal;letter-spacing:0px">CeBr-a</div><div class="t" style="left:14.6px;top:456.44px;font-size:12px;color:#8fd22c;font-weight:normal;">C<span style="margin-left:3.2px">4</span></div><div class="t" style="left:53px;top:452.74px;font-size:18.5px;color:#8fd22c;font-weight:normal;letter-spacing:0px">CebR-b</div><div class="t" style="left:14.6px;top:573.44px;font-size:12px;color:#f7951f;font-weight:normal;">C<span style="margin-left:3.2px">5</span></div><div class="t" style="left:53px;top:569.74px;font-size:18.5px;color:#f7951f;font-weight:normal;letter-spacing:0.33px">NaITl-a</div><div class="t" style="left:14.6px;top:690.44px;font-size:12px;color:#2a2ccb;font-weight:normal;">C<span style="margin-left:3.2px">6</span></div><div class="t" style="left:53px;top:686.74px;font-size:18.5px;color:#2a2ccb;font-weight:normal;letter-spacing:-1px">LYSO</div><div class="t" style="left:14.6px;top:807.44px;font-size:12px;color:#dc469c;font-weight:normal;">C<span style="margin-left:3.2px">7</span></div><div class="t" style="left:53px;top:803.74px;font-size:18.5px;color:#dc469c;font-weight:normal;letter-spacing:1.5px">null</div><div class="t" style="left:14.6px;top:925.44px;font-size:12px;color:#0a0a0a;font-weight:normal;">C<span style="margin-left:3.2px">8</span></div><div class="t" style="left:53px;top:921.74px;font-size:18.5px;color:#12d99b;font-weight:normal;letter-spacing:1px">Trigger</div><div class="t" style="left:1665.5px;width:80px;text-align:right;top:58.70px;font-size:13px;color:#f2e424;font-weight:normal;">16 V</div><div class="t" style="left:1665.5px;width:80px;text-align:right;top:82.10px;font-size:13px;color:#f2e424;font-weight:normal;">8 V</div><div class="t" style="left:1665.5px;width:80px;text-align:right;top:105.50px;font-size:13px;color:#f2e424;font-weight:normal;">0 V</div><div class="t" style="left:1665.5px;width:80px;text-align:right;top:128.90px;font-size:13px;color:#f2e424;font-weight:normal;">-8 V</div><div class="t" style="left:1665.5px;width:80px;text-align:right;top:152.30px;font-size:13px;color:#f2e424;font-weight:normal;">-16 V</div><div class="t" style="left:1665.5px;width:80px;text-align:right;top:175.70px;font-size:13px;color:#1fc9d6;font-weight:normal;">200 mV</div><div class="t" style="left:1665.5px;width:80px;text-align:right;top:199.10px;font-size:13px;color:#1fc9d6;font-weight:normal;">100 mV</div><div class="t" style="left:1665.5px;width:80px;text-align:right;top:222.50px;font-size:13px;color:#1fc9d6;font-weight:normal;">0 V</div><div class="t" style="left:1665.5px;width:80px;text-align:right;top:245.90px;font-size:13px;color:#1fc9d6;font-weight:normal;">-100 mV</div><div class="t" style="left:1665.5px;width:80px;text-align:right;top:269.30px;font-size:13px;color:#1fc9d6;font-weight:normal;">-200 mV</div><div class="t" style="left:1665.5px;width:80px;text-align:right;top:292.70px;font-size:13px;color:#e9445c;font-weight:normal;">400 mV</div><div class="t" style="left:1665.5px;width:80px;text-align:right;top:316.10px;font-size:13px;color:#e9445c;font-weight:normal;">200 mV</div><div class="t" style="left:1665.5px;width:80px;text-align:right;top:339.50px;font-size:13px;color:#e9445c;font-weight:normal;">0 V</div><div class="t" style="left:1665.5px;width:80px;text-align:right;top:362.90px;font-size:13px;color:#e9445c;font-weight:normal;">-200 mV</div><div class="t" style="left:1665.5px;width:80px;text-align:right;top:386.30px;font-size:13px;color:#e9445c;font-weight:normal;">-400 mV</div><div class="t" style="left:1665.5px;width:80px;text-align:right;top:409.70px;font-size:13px;color:#8fd22c;font-weight:normal;">0 V</div><div class="t" style="left:1665.5px;width:80px;text-align:right;top:433.10px;font-size:13px;color:#8fd22c;font-weight:normal;">-100 mV</div><div class="t" style="left:1665.5px;width:80px;text-align:right;top:456.50px;font-size:13px;color:#8fd22c;font-weight:normal;">-200 mV</div><div class="t" style="left:1665.5px;width:80px;text-align:right;top:479.90px;font-size:13px;color:#8fd22c;font-weight:normal;">-300 mV</div><div class="t" style="left:1665.5px;width:80px;text-align:right;top:503.30px;font-size:13px;color:#8fd22c;font-weight:normal;">-400 mV</div><div class="t" style="left:1665.5px;width:80px;text-align:right;top:526.70px;font-size:13px;color:#f7951f;font-weight:normal;">400 mV</div><div class="t" style="left:1665.5px;width:80px;text-align:right;top:550.10px;font-size:13px;color:#f7951f;font-weight:normal;">300 mV</div><div class="t" style="left:1665.5px;width:80px;text-align:right;top:573.50px;font-size:13px;color:#f7951f;font-weight:normal;">200 mV</div><div class="t" style="left:1665.5px;width:80px;text-align:right;top:596.90px;font-size:13px;color:#f7951f;font-weight:normal;">100 mV</div><div class="t" style="left:1665.5px;width:80px;text-align:right;top:620.30px;font-size:13px;color:#f7951f;font-weight:normal;">0 V</div><div class="t" style="left:1665.5px;width:80px;text-align:right;top:643.70px;font-size:13px;color:#2a2ccb;font-weight:normal;">4 V</div><div class="t" style="left:1665.5px;width:80px;text-align:right;top:667.10px;font-size:13px;color:#2a2ccb;font-weight:normal;">2 V</div><div class="t" style="left:1665.5px;width:80px;text-align:right;top:690.50px;font-size:13px;color:#2a2ccb;font-weight:normal;">0 V</div><div class="t" style="left:1665.5px;width:80px;text-align:right;top:713.90px;font-size:13px;color:#2a2ccb;font-weight:normal;">-2 V</div><div class="t" style="left:1665.5px;width:80px;text-align:right;top:737.30px;font-size:13px;color:#2a2ccb;font-weight:normal;">-4 V</div><div class="t" style="left:1665.5px;width:80px;text-align:right;top:760.70px;font-size:13px;color:#dc469c;font-weight:normal;">40 V</div><div class="t" style="left:1665.5px;width:80px;text-align:right;top:784.10px;font-size:13px;color:#dc469c;font-weight:normal;">20 V</div><div class="t" style="left:1665.5px;width:80px;text-align:right;top:807.50px;font-size:13px;color:#dc469c;font-weight:normal;">0 V</div><div class="t" style="left:1665.5px;width:80px;text-align:right;top:830.90px;font-size:13px;color:#dc469c;font-weight:normal;">-20 V</div><div class="t" style="left:1665.5px;width:80px;text-align:right;top:854.30px;font-size:13px;color:#dc469c;font-weight:normal;">-40 V</div><div class="t" style="left:1665.5px;width:80px;text-align:right;top:877.70px;font-size:13px;color:#12d99b;font-weight:normal;">8 V</div><div class="t" style="left:1665.5px;width:80px;text-align:right;top:901.10px;font-size:13px;color:#12d99b;font-weight:normal;">4 V</div><div class="t" style="left:1665.5px;width:80px;text-align:right;top:924.50px;font-size:13px;color:#12d99b;font-weight:normal;">0 V</div><div class="t" style="left:1665.5px;width:80px;text-align:right;top:947.90px;font-size:13px;color:#12d99b;font-weight:normal;">-4 V</div><div class="t" style="left:1665.5px;width:80px;text-align:right;top:971.30px;font-size:13px;color:#12d99b;font-weight:normal;">-8 V</div><div class="t" style="left:148.5px;width:60px;text-align:center;top:974.70px;font-size:13px;color:#b4b4b4;font-weight:normal;">-8 ms</div><div class="t" style="left:323.5px;width:60px;text-align:center;top:974.70px;font-size:13px;color:#b4b4b4;font-weight:normal;">-6 ms</div><div class="t" style="left:497.5px;width:60px;text-align:center;top:974.70px;font-size:13px;color:#b4b4b4;font-weight:normal;">-4 ms</div><div class="t" style="left:672.5px;width:60px;text-align:center;top:974.70px;font-size:13px;color:#b4b4b4;font-weight:normal;">-2 ms</div><div class="t" style="left:847.5px;width:60px;text-align:center;top:974.70px;font-size:13px;color:#b4b4b4;font-weight:normal;">0 s</div><div class="t" style="left:1022.5px;width:60px;text-align:center;top:974.70px;font-size:13px;color:#b4b4b4;font-weight:normal;">2 ms</div><div class="t" style="left:1197.5px;width:60px;text-align:center;top:974.70px;font-size:13px;color:#b4b4b4;font-weight:normal;">4 ms</div><div class="t" style="left:1371.5px;width:60px;text-align:center;top:974.70px;font-size:13px;color:#b4b4b4;font-weight:normal;">6 ms</div><div class="t" style="left:1546.5px;width:60px;text-align:center;top:974.70px;font-size:13px;color:#b4b4b4;font-weight:normal;">8 ms</div>
<svg style="position:absolute;left:0;top:0" width="1920" height="1080">
<polygon points="869,30 884.5,30 876.8,35.5" fill="#f7931e"/><path d="M870.8 37.8 H883.2 V49.2 H879.5 L877 52.5 L874.5 49.2 H870.8 Z" fill="#000" stroke="#f7931e" stroke-width="1.6"/><path d="M873.8 40.2 H880.2 V41.8 H877.8 V47 H876.2 V41.8 H873.8 Z" fill="#f7931e"/><polygon points="866.8,54 887.2,54 877,64.3" fill="#f7931e"/><path d="M868 874 H886 V893 H881 L877 899 L873 893 H868 Z" fill="#000" stroke="#f7931e" stroke-width="2"/><path d="M872.6 878 H881 V880.4 H877.9 V889.2 H875.8 V880.4 H872.6 Z" fill="#f7931e"/><polygon points="1710,61 1744,61 1744,95" fill="#4d4d4d" stroke="#000" stroke-width="2.6" stroke-linejoin="round" paint-order="stroke"/><polygon points="1710,61 1744,61 1744,95" fill="#4d4d4d" stroke="#4d4d4d" stroke-width="0.8" stroke-linejoin="round"/><circle cx="1737" cy="67.6" r="4.3" fill="none" stroke="#b4b4b4" stroke-width="1.5"/><line x1="1733.6" y1="71" x2="1728.6" y2="76.4" stroke="#b0b0b0" stroke-width="2.6" stroke-linecap="round"/><polygon points="1730,908.5 1742,898 1742,919" fill="#12d99b"/><rect x="1741" y="907" width="10" height="3" fill="#12d99b"/>
</svg>
<div style="position:absolute;left:1769px;top:26px;width:149px;height:967px;border:1px solid #5e5a56;background:#2e2e2e"></div><div class="t" style="left:1785.0px;width:120px;text-align:center;top:28.10px;font-size:15px;color:#f2f2f2;font-weight:bold;">Add New...</div><div class="btn" style="left:1777px;top:53px;width:63px;height:37px"></div><div class="t" style="left:1773.5px;width:70px;text-align:center;top:63.10px;font-size:15px;color:#f0f0f0;font-weight:normal;">Cursors</div><div class="btn" style="left:1849px;top:53px;width:63px;height:37px"></div><div class="t" style="left:1845.5px;width:70px;text-align:center;top:63.10px;font-size:15px;color:#f0f0f0;font-weight:normal;">Note</div><div class="btn" style="left:1777px;top:99px;width:63px;height:37px"></div><div class="t" style="left:1773.5px;width:70px;text-align:center;top:109.10px;font-size:15px;color:#f0f0f0;font-weight:normal;">Measure</div><div class="btn" style="left:1849px;top:99px;width:63px;height:37px"></div><div class="t" style="left:1845.5px;width:70px;text-align:center;top:109.10px;font-size:15px;color:#f0f0f0;font-weight:normal;">Search</div><div class="btn" style="left:1777px;top:145px;width:63px;height:37px"></div><div class="t" style="left:1773.5px;width:70px;text-align:center;top:146.90px;font-size:15px;color:#f0f0f0;font-weight:normal;">Results</div><div class="t" style="left:1773.5px;width:70px;text-align:center;top:162.90px;font-size:15px;color:#f0f0f0;font-weight:normal;">Table</div><div class="btn" style="left:1849px;top:145px;width:63px;height:37px"></div><div class="t" style="left:1845.5px;width:70px;text-align:center;top:155.10px;font-size:15px;color:#f0f0f0;font-weight:normal;">Plot</div><div style="position:absolute;left:1773px;top:190px;width:144px;height:1px;background:#5e5a56"></div><div style="position:absolute;left:1773px;top:943px;width:144px;height:1px;background:#5e5a56"></div><div class="btn" style="left:1776px;top:952px;width:63px;height:36px"></div><svg style="position:absolute;left:1776px;top:952px" width="63" height="36">
<g fill="#d4d4d4"><rect x="19" y="6" width="2" height="2"/><rect x="24" y="6.2" width="1.5" height="1.5"/><rect x="28.5" y="6.2" width="1.5" height="1.5"/><rect x="33" y="6" width="2" height="2"/>
<rect x="19.2" y="10.8" width="1.5" height="1.5"/><rect x="19.2" y="15" width="1.5" height="1.5"/><rect x="19" y="19.5" width="2" height="2"/><rect x="23.8" y="20" width="1.5" height="1.5"/><rect x="33.3" y="10.6" width="1.5" height="1.5"/></g>
<circle cx="33" cy="20" r="5.2" fill="#7c7c7c" stroke="#d8d8d8" stroke-width="1.4"/>
<line x1="36.8" y1="23.8" x2="42.3" y2="29.3" stroke="#d8d8d8" stroke-width="3" stroke-linecap="round"/>
<line x1="37.2" y1="24.2" x2="42" y2="29" stroke="#3a3a3a" stroke-width="1" stroke-linecap="round"/>
</svg><svg style="position:absolute;left:1866px;top:952px" width="34" height="38">
<g fill="none" stroke="#d8d8d8" stroke-width="1.4">
<ellipse cx="16.5" cy="7" rx="12.6" ry="3.9"/>
<path d="M3.9 7.3 V9.6 Q16.5 15.2 29.1 9.6 V7.3"/>
<path d="M4.6 11.2 L7.2 32 Q16.5 36.8 25.8 32 L28.4 11.2"/>
<path d="M11 15.5 L12 31 M16.5 16 V32.3 M22 15.5 L21 31"/>
<path d="M12.5 5.2 Q16.5 2.8 20.5 5.2"/>
</g></svg><div style="position:absolute;left:1759.8px;top:499.5px;width:4.4px;height:4.4px;border-radius:50%;background:#cfcfcf"></div><div style="position:absolute;left:1759.8px;top:508.1px;width:4.4px;height:4.4px;border-radius:50%;background:#cfcfcf"></div><div style="position:absolute;left:1759.8px;top:516.6999999999999px;width:4.4px;height:4.4px;border-radius:50%;background:#cfcfcf"></div>
<div class="badge" style="left:3px"><div class="bh" style="background:#4b4623"></div></div><div class="t" style="left:9px;top:1001.15px;font-size:14px;color:#f2e424;font-weight:normal;">Ch 1</div><div class="t" style="left:10.5px;top:1022.80px;font-size:15px;color:#141414;font-weight:normal;">4 V/div</div><div class="t" style="left:10.5px;top:1042.80px;font-size:15px;color:#141414;font-weight:normal;">1 MΩ</div><div class="t" style="left:10.5px;top:1060.80px;font-size:15px;color:#141414;font-weight:normal;">20 MHz</div><div class="t" style="left:77px;top:1061.13px;font-size:10px;color:#141414;font-weight:normal;">B</div><div class="t" style="left:82px;top:1063.16px;font-size:9.5px;color:#141414;font-weight:normal;">w</div><div class="badge" style="left:98px"><div class="bh" style="background:#1f4347"></div></div><div class="t" style="left:104px;top:1001.15px;font-size:14px;color:#1fc6d6;font-weight:normal;">Ch 2</div><div class="t" style="left:105.5px;top:1022.80px;font-size:15px;color:#141414;font-weight:normal;">50 mV/div</div><div class="t" style="left:105.5px;top:1042.80px;font-size:15px;color:#141414;font-weight:normal;">50 Ω</div><div class="t" style="left:105.5px;top:1060.80px;font-size:15px;color:#141414;font-weight:normal;">20 MHz</div><div class="t" style="left:172px;top:1061.13px;font-size:10px;color:#141414;font-weight:normal;">B</div><div class="t" style="left:177px;top:1063.16px;font-size:9.5px;color:#141414;font-weight:normal;">w</div><div class="badge" style="left:193px"><div class="bh" style="background:#4a2429"></div></div><div class="t" style="left:199px;top:1001.15px;font-size:14px;color:#e9445c;font-weight:normal;">Ch 3</div><div class="t" style="left:200.5px;top:1022.80px;font-size:15px;color:#141414;font-weight:normal;">100 mV/div</div><div class="t" style="left:200.5px;top:1042.80px;font-size:15px;color:#141414;font-weight:normal;">50 Ω</div><div class="t" style="left:200.5px;top:1060.80px;font-size:15px;color:#141414;font-weight:normal;">20 MHz</div><div class="t" style="left:267px;top:1061.13px;font-size:10px;color:#141414;font-weight:normal;">B</div><div class="t" style="left:272px;top:1063.16px;font-size:9.5px;color:#141414;font-weight:normal;">w</div><div class="badge" style="left:288px"><div class="bh" style="background:#38431f"></div></div><div class="t" style="left:294px;top:1001.15px;font-size:14px;color:#8fd22c;font-weight:normal;">Ch 4</div><div class="t" style="left:295.5px;top:1022.80px;font-size:15px;color:#141414;font-weight:normal;">50 mV/div</div><div class="t" style="left:295.5px;top:1042.80px;font-size:15px;color:#141414;font-weight:normal;">50 Ω</div><div class="t" style="left:295.5px;top:1060.80px;font-size:15px;color:#141414;font-weight:normal;">20 MHz</div><div class="t" style="left:362px;top:1061.13px;font-size:10px;color:#141414;font-weight:normal;">B</div><div class="t" style="left:367px;top:1063.16px;font-size:9.5px;color:#141414;font-weight:normal;">w</div><div class="badge" style="left:383px"><div class="bh" style="background:#4b3620"></div></div><div class="t" style="left:389px;top:1001.15px;font-size:14px;color:#f7951f;font-weight:normal;">Ch 5</div><div class="t" style="left:390.5px;top:1022.80px;font-size:15px;color:#141414;font-weight:normal;">50 mV/div</div><div class="t" style="left:390.5px;top:1042.80px;font-size:15px;color:#141414;font-weight:normal;">50 Ω</div><div class="t" style="left:390.5px;top:1060.80px;font-size:15px;color:#141414;font-weight:normal;">20 MHz</div><div class="t" style="left:457px;top:1061.13px;font-size:10px;color:#141414;font-weight:normal;">B</div><div class="t" style="left:462px;top:1063.16px;font-size:9.5px;color:#141414;font-weight:normal;">w</div><div class="badge" style="left:478px"><div class="bh" style="background:#1d1d45"></div></div><div class="t" style="left:484px;top:1001.15px;font-size:14px;color:#2c36cc;font-weight:normal;">Ch 6</div><div class="t" style="left:485.5px;top:1022.80px;font-size:15px;color:#141414;font-weight:normal;">1 V/div</div><div class="t" style="left:485.5px;top:1042.80px;font-size:15px;color:#141414;font-weight:normal;">50 Ω</div><div class="t" style="left:485.5px;top:1060.80px;font-size:15px;color:#141414;font-weight:normal;">20 MHz</div><div class="t" style="left:552px;top:1061.13px;font-size:10px;color:#141414;font-weight:normal;">B</div><div class="t" style="left:557px;top:1063.16px;font-size:9.5px;color:#141414;font-weight:normal;">w</div><div class="badge" style="left:573px"><div class="bh" style="background:#46263a"></div></div><div class="t" style="left:579px;top:1001.15px;font-size:14px;color:#d84a98;font-weight:normal;">Ch 7</div><div class="t" style="left:580.5px;top:1022.80px;font-size:15px;color:#141414;font-weight:normal;">10 V/div</div><div class="t" style="left:580.5px;top:1042.80px;font-size:15px;color:#141414;font-weight:normal;">1 MΩ</div><div class="t" style="left:580.5px;top:1060.80px;font-size:15px;color:#141414;font-weight:normal;">20 MHz</div><div class="t" style="left:647px;top:1061.13px;font-size:10px;color:#141414;font-weight:normal;">B</div><div class="t" style="left:652px;top:1063.16px;font-size:9.5px;color:#141414;font-weight:normal;">w</div><div class="badge" style="left:668px"><div class="bh" style="background:#12d99b"></div></div><div class="t" style="left:674px;top:1001.15px;font-size:14px;color:#0a0a0a;font-weight:normal;">Ch 8</div><div class="t" style="left:675.5px;top:1022.80px;font-size:15px;color:#141414;font-weight:normal;">2 V/div</div><div class="t" style="left:675.5px;top:1042.80px;font-size:15px;color:#141414;font-weight:normal;">1 MΩ</div><div class="t" style="left:675.5px;top:1060.80px;font-size:15px;color:#141414;font-weight:normal;">20 MHz</div><div class="t" style="left:742px;top:1061.13px;font-size:10px;color:#141414;font-weight:normal;">B</div><div class="t" style="left:747px;top:1063.16px;font-size:9.5px;color:#141414;font-weight:normal;">w</div><div class="btn" style="left:1130px;top:998px;width:40px;height:79px"></div><div style="position:absolute;left:1134px;top:1006px;width:32px;height:2px;background:#f7931e"></div><div class="t" style="left:1125.3px;width:50px;text-align:center;top:1014.88px;font-size:15.5px;color:#f0f0f0;font-weight:normal;letter-spacing:0.4px">Add</div><div class="t" style="left:1125.3px;width:50px;text-align:center;top:1030.88px;font-size:15.5px;color:#f0f0f0;font-weight:normal;letter-spacing:0.4px">New</div><div class="t" style="left:1125.3px;width:50px;text-align:center;top:1046.88px;font-size:15.5px;color:#f0f0f0;font-weight:normal;letter-spacing:0.4px">Math</div><div class="btn" style="left:1175px;top:998px;width:40px;height:79px"></div><div style="position:absolute;left:1179px;top:1006px;width:32px;height:2px;background:#c8c8d0"></div><div class="t" style="left:1170.3px;width:50px;text-align:center;top:1014.88px;font-size:15.5px;color:#f0f0f0;font-weight:normal;letter-spacing:0.4px">Add</div><div class="t" style="left:1170.3px;width:50px;text-align:center;top:1030.88px;font-size:15.5px;color:#f0f0f0;font-weight:normal;letter-spacing:0.4px">New</div><div class="t" style="left:1170.3px;width:50px;text-align:center;top:1046.88px;font-size:15.5px;color:#f0f0f0;font-weight:normal;letter-spacing:0.4px">Ref</div><div class="btn" style="left:1220px;top:998px;width:40px;height:79px"></div><div style="position:absolute;left:1224px;top:1006px;width:32px;height:2px;background:#c462f2"></div><div class="t" style="left:1215.3px;width:50px;text-align:center;top:1014.88px;font-size:15.5px;color:#f0f0f0;font-weight:normal;letter-spacing:0.4px">Add</div><div class="t" style="left:1215.3px;width:50px;text-align:center;top:1030.88px;font-size:15.5px;color:#f0f0f0;font-weight:normal;letter-spacing:0.4px">New</div><div class="t" style="left:1215.3px;width:50px;text-align:center;top:1046.88px;font-size:15.5px;color:#f0f0f0;font-weight:normal;letter-spacing:0.4px">Bus</div><div style="position:absolute;left:1270px;top:998px;width:1px;height:79px;background:#6a6058"></div><div style="position:absolute;left:1119px;top:998px;width:1px;height:79px;background:#5c5a58"></div><div class="panel" style="left:1281px;width:200px"><div class="ph"></div></div><div class="t" style="left:1287px;top:998.48px;font-size:15.5px;color:#f2f2f2;font-weight:normal;">Horizontal</div><div class="t" style="left:1288px;top:1021.80px;font-size:15px;color:#141414;font-weight:normal;">2 ms/div</div><div class="t" style="left:1394px;top:1021.80px;font-size:15px;color:#141414;font-weight:normal;">20 ms</div><div class="t" style="left:1288px;top:1040.70px;font-size:15px;color:#141414;font-weight:normal;letter-spacing:-0.5px">SR: 62.5 MS/s</div><div class="t" style="left:1395px;top:1040.70px;font-size:15px;color:#141414;font-weight:normal;">16 ns/pt</div><div class="t" style="left:1288px;top:1059.60px;font-size:15px;color:#141414;font-weight:normal;">RL: 1.25 Mpts</div><div class="t" style="left:1408px;top:1059.60px;font-size:15px;color:#141414;font-weight:normal;">50%</div><svg style="position:absolute;left:1393px;top:1060px" width="12" height="16"><path d="M1.5 1.5 H9.5 V9.5 H7 L5.5 12 L4 9.5 H1.5 Z" fill="#000" stroke="#f7931e" stroke-width="1.4"/><path d="M3.4 3.3 H7.6 V4.6 H6.1 V8.3 H4.9 V4.6 H3.4 Z" fill="#fff"/></svg><div class="panel" style="left:1491px;width:160px"><div class="ph"></div></div><div class="t" style="left:1497px;top:998.48px;font-size:15.5px;color:#f2f2f2;font-weight:normal;">Trigger</div><div style="position:absolute;left:1498px;top:1022px;width:28px;height:15px;background:#12d99b;border:1px solid #1a1a1a;border-radius:5px"></div><div class="t" style="left:1498.0px;width:30px;text-align:center;top:1022.10px;font-size:15px;color:#0a0a0a;font-weight:normal;">8</div><svg style="position:absolute;left:1537px;top:1024px" width="18" height="13"><path d="M1 11.5 H4.5 L11.5 1.5 H16" fill="none" stroke="#3a3a70" stroke-width="1.3"/></svg><div class="t" style="left:1564px;top:1022.00px;font-size:15px;color:#141414;font-weight:normal;">4 V</div><div class="panel" style="left:1661px;width:150px"><div class="ph"></div></div><div class="t" style="left:1667px;top:998.48px;font-size:15.5px;color:#f2f2f2;font-weight:normal;">Acquisition</div><div class="t" style="left:1668px;top:1022.00px;font-size:15px;color:#141414;font-weight:normal;">Auto,</div><div class="t" style="left:1727.5px;top:1022.00px;font-size:15px;color:#141414;font-weight:normal;">Analyze</div><div class="t" style="left:1668px;top:1041.00px;font-size:15px;color:#141414;font-weight:normal;">High Res: 16 bits</div><div class="t" style="left:1668px;top:1059.80px;font-size:15px;color:#141414;font-weight:normal;">Single: 1 /1</div><div style="position:absolute;left:1821.5px;top:998.5px;width:87px;height:33px;background:#fe1f28;border:1px solid #787878;border-radius:6px"></div><div class="t" style="left:1821.0px;width:89px;text-align:center;top:1007.63px;font-size:13.2px;color:#ffffff;font-weight:bold;">Stopped</div><div style="position:absolute;left:1821px;top:1042px;width:89px;height:36px;background:#c8c8c8;border-radius:5px"></div><div class="t" style="left:1815.5px;width:100px;text-align:center;top:1043.80px;font-size:15px;color:#141414;font-weight:normal;">15 May 2025</div><div class="t" style="left:1815.5px;width:100px;text-align:center;top:1060.90px;font-size:15px;color:#141414;font-weight:normal;">13:19:35</div>
</body></html>
